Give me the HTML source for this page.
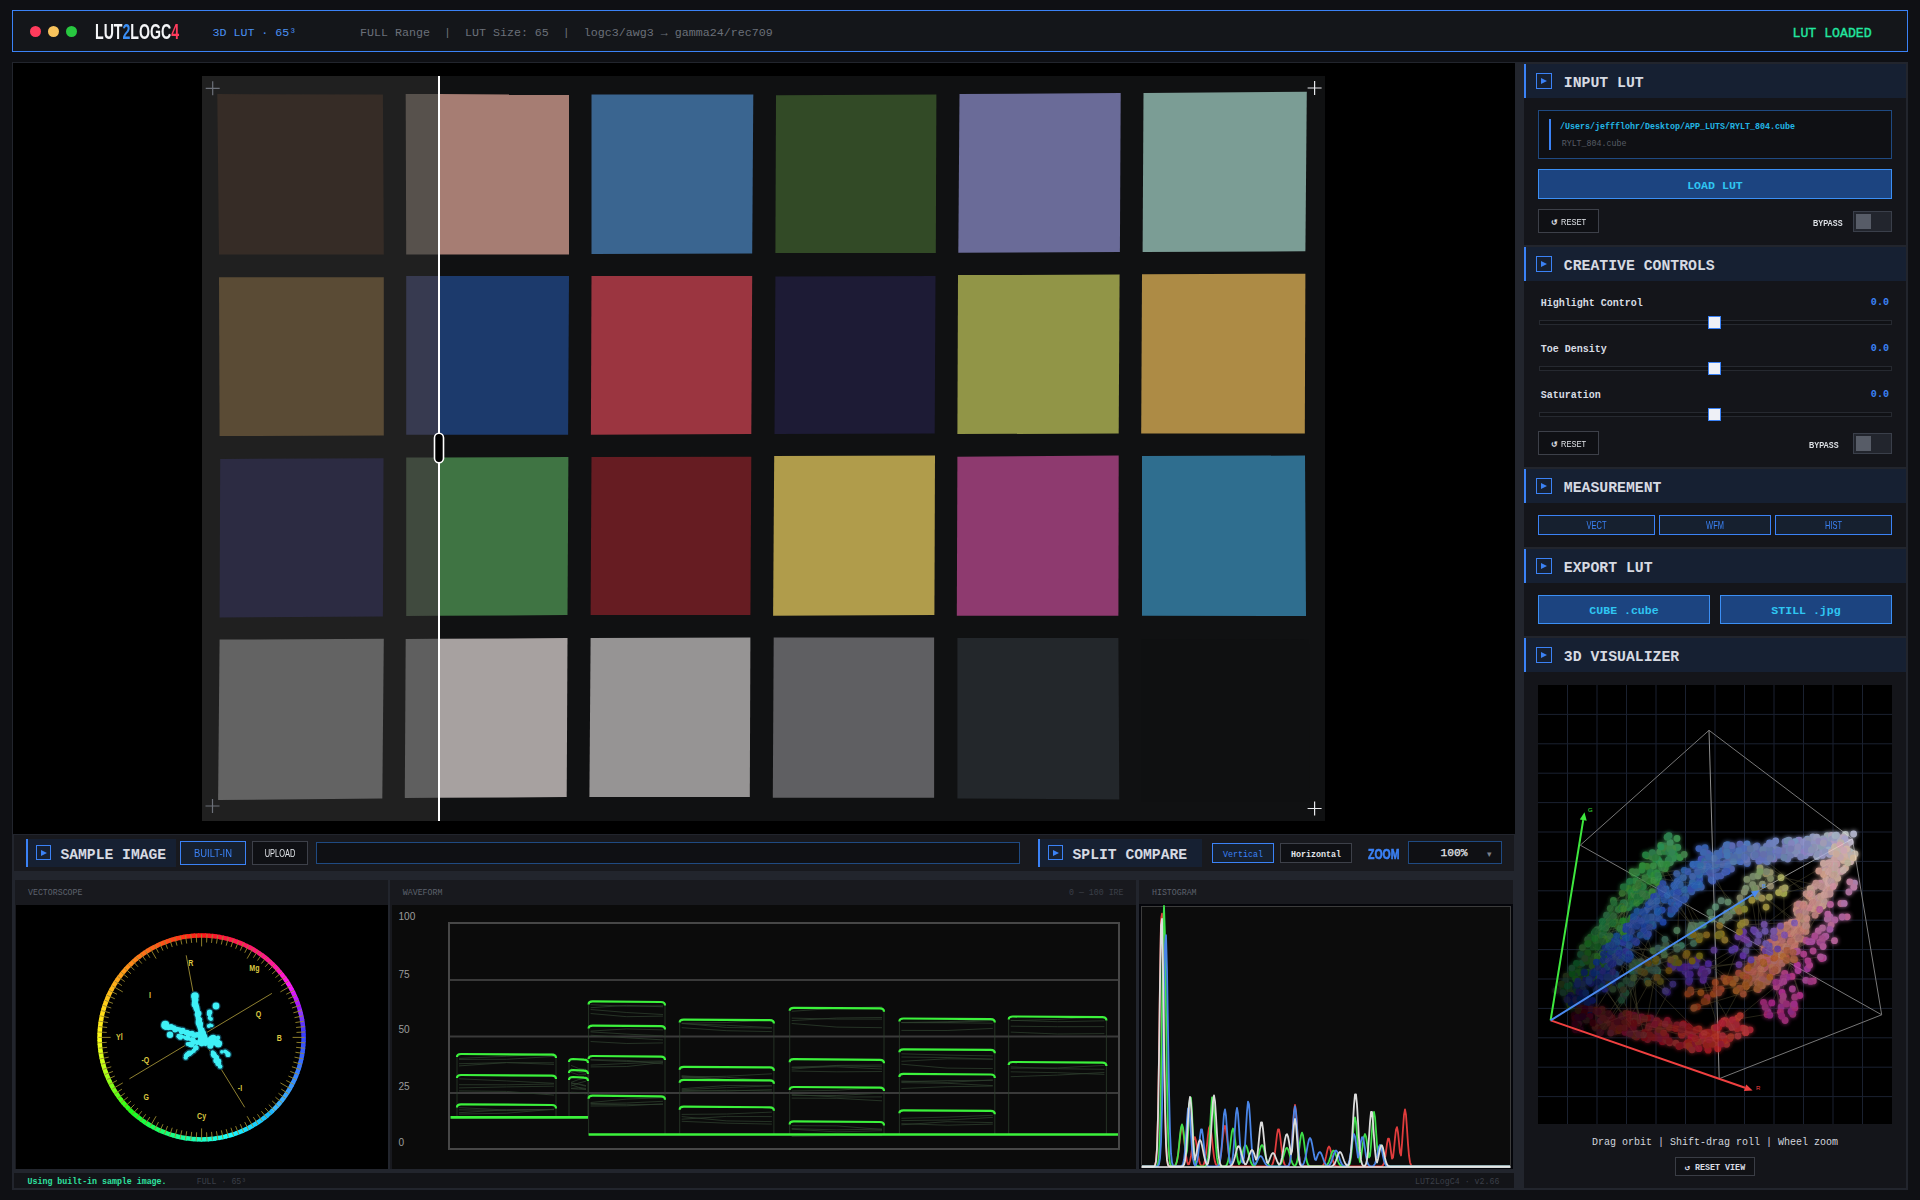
<!DOCTYPE html><html><head><meta charset="utf-8"><style>
html,body{margin:0;padding:0;}
body{width:1920px;height:1200px;overflow:hidden;background:#0f1014;position:relative;}
.t{position:absolute;white-space:pre;}
.b{position:absolute;box-sizing:border-box;}
svg{position:absolute;}
</style></head><body>
<div class="b" style="left:12px;top:10px;width:1896px;height:42px;background:#14161a;border:1px solid #3b82f6;"></div>
<div class="b" style="left:30.0px;top:25.8px;width:11px;height:11px;border-radius:50%;background:#ff3b5c"></div>
<div class="b" style="left:48.0px;top:25.8px;width:11px;height:11px;border-radius:50%;background:#f8c35c"></div>
<div class="b" style="left:66.0px;top:25.8px;width:11px;height:11px;border-radius:50%;background:#28c840"></div>
<div class="t" style="left:94.6px;top:19.50px;font:bold 22.8px/22.8px 'Liberation Sans', sans-serif;color:#f4f5f7;transform:scaleX(0.62);transform-origin:left top;">LUT<span style="color:#3b8ff5">2</span>LOGC<span style="color:#ff3b5c">4</span></div>
<div class="t" style="left:212.50px;top:27.19px;font:11.63px/11.63px 'Liberation Mono', monospace;color:#4a90f2;">3D LUT · 65³</div>
<div class="t" style="left:360.00px;top:28.06px;font:11.67px/11.67px 'Liberation Mono', monospace;color:#6b7079;">FULL Range  |  LUT Size: 65  |  logc3/awg3 → gamma24/rec709</div>
<div class="t" style="left:1792.50px;top:27.39px;font:13.2px/13.2px 'Liberation Mono', monospace;color:#22e8a0;-webkit-text-stroke:0.35px #22e8a0;">LUT LOADED</div>
<div class="b" style="left:12px;top:62px;width:1896px;height:1128px;background:#22252d;"></div>
<div class="b" style="left:13px;top:63px;width:1502px;height:771px;background:#000;"></div>
<div class="b" style="left:14px;top:835px;width:1500px;height:36px;background:#18191e;"></div>
<div class="b" style="left:15px;top:880px;width:373px;height:289px;background:#18191e;"></div>
<div class="b" style="left:390px;top:880px;width:746px;height:289px;background:#18191e;"></div>
<div class="b" style="left:1139px;top:880px;width:374px;height:289px;background:#18191e;"></div>
<div class="b" style="left:14px;top:1173px;width:1500px;height:15px;background:#131418;"></div>
<div class="b" style="left:1524px;top:64px;width:382px;height:1124px;background:#14151a;"></div>
<div class="b" style="left:1524px;top:64px;width:382px;height:34px;background:#162032;"></div>
<div class="b" style="left:1524px;top:64px;width:2px;height:34px;background:#3b82f6;"></div>
<div class="b" style="left:1536px;top:73px;width:16px;height:16px;background:transparent;border:1px solid #3b82f6;"></div>
<svg style="left:1541px;top:78px" width="6" height="6"><polygon points="0,0 6,3 0,6" fill="#3b82f6"/></svg>
<div class="t" style="left:1563.80px;top:75.66px;font:14.8px/14.8px 'Liberation Mono', monospace;font-weight:bold;color:#d6dae2;">INPUT LUT</div>
<div class="b" style="left:1538px;top:110px;width:354px;height:49px;background:#0f1014;border:1px solid #1f4a82;"></div>
<div class="b" style="left:1549px;top:119px;width:2px;height:31px;background:#3b82f6;"></div>
<div class="t" style="left:1560.00px;top:123.12px;font:8.33px/8.33px 'Liberation Mono', monospace;font-weight:bold;color:#22b6e6;">/Users/jeffflohr/Desktop/APP_LUTS/RYLT_804.cube</div>
<div class="t" style="left:1561.70px;top:139.64px;font:8.3px/8.3px 'Liberation Mono', monospace;color:#585d66;">RYLT_804.cube</div>
<div class="b" style="left:1538px;top:169px;width:354px;height:30px;background:#1c4480;border:1px solid #3b8ff5;"></div>
<div class="t" style="left:1538px;width:354px;top:180.11px;text-align:center;font:11.6px/11.6px 'Liberation Mono', monospace;font-weight:bold;color:#2fc6f2;">LOAD LUT</div>
<div class="b" style="left:1538px;top:209px;width:61px;height:24px;background:#0f1014;border:1px solid #3d4049;"></div>
<div class="t" style="left:1550.5px;top:219.15px;font:bold 7.5px/7.5px 'Liberation Sans', sans-serif;color:#e0e3e8;">&#8634;</div>
<div class="t" style="left:1561.00px;top:216.96px;font:9.5px/9.5px 'Liberation Sans', sans-serif;color:#e2e5ea;transform:scaleX(0.79);transform-origin:left top;">RESET</div>
<div class="t" style="left:1813.00px;top:217.70px;font:9.8px/9.8px 'Liberation Sans', sans-serif;font-weight:bold;color:#e0e3e8;transform:scaleX(0.75);transform-origin:left top;">BYPASS</div>
<div class="b" style="left:1853px;top:211px;width:39px;height:21px;background:#22252d;border:1px solid #3a3f4a;"></div>
<div class="b" style="left:1856px;top:214px;width:15px;height:15px;background:#575c67;"></div>
<div class="b" style="left:1524px;top:245px;width:382px;height:2px;background:#22252d;"></div>
<div class="b" style="left:1524px;top:247px;width:382px;height:34px;background:#162032;"></div>
<div class="b" style="left:1524px;top:247px;width:2px;height:34px;background:#3b82f6;"></div>
<div class="b" style="left:1536px;top:256px;width:16px;height:16px;background:transparent;border:1px solid #3b82f6;"></div>
<svg style="left:1541px;top:261px" width="6" height="6"><polygon points="0,0 6,3 0,6" fill="#3b82f6"/></svg>
<div class="t" style="left:1563.80px;top:258.66px;font:14.8px/14.8px 'Liberation Mono', monospace;font-weight:bold;color:#d6dae2;">CREATIVE CONTROLS</div>
<div class="t" style="left:1540.80px;top:299.14px;font:10px/10px 'Liberation Mono', monospace;font-weight:bold;color:#d8dce4;">Highlight Control</div>
<div class="t" style="left:1790px;width:99px;text-align:right;top:298.26px;font:bold 10.1px/10.1px 'Liberation Mono', monospace;color:#3b82f6">0.0</div>
<div class="b" style="left:1539px;top:320px;width:353px;height:5px;background:#101115;border:1px solid #262930;"></div>
<div class="b" style="left:1708px;top:316px;width:13px;height:13px;background:#eef0f6;border:1px solid #3b82f6;"></div>
<div class="t" style="left:1540.80px;top:345.14px;font:10px/10px 'Liberation Mono', monospace;font-weight:bold;color:#d8dce4;">Toe Density</div>
<div class="t" style="left:1790px;width:99px;text-align:right;top:344.26px;font:bold 10.1px/10.1px 'Liberation Mono', monospace;color:#3b82f6">0.0</div>
<div class="b" style="left:1539px;top:366px;width:353px;height:5px;background:#101115;border:1px solid #262930;"></div>
<div class="b" style="left:1708px;top:362px;width:13px;height:13px;background:#eef0f6;border:1px solid #3b82f6;"></div>
<div class="t" style="left:1540.80px;top:391.14px;font:10px/10px 'Liberation Mono', monospace;font-weight:bold;color:#d8dce4;">Saturation</div>
<div class="t" style="left:1790px;width:99px;text-align:right;top:390.26px;font:bold 10.1px/10.1px 'Liberation Mono', monospace;color:#3b82f6">0.0</div>
<div class="b" style="left:1539px;top:412px;width:353px;height:5px;background:#101115;border:1px solid #262930;"></div>
<div class="b" style="left:1708px;top:408px;width:13px;height:13px;background:#eef0f6;border:1px solid #3b82f6;"></div>
<div class="b" style="left:1538px;top:431px;width:61px;height:24px;background:#0f1014;border:1px solid #3d4049;"></div>
<div class="t" style="left:1550.5px;top:441.15px;font:bold 7.5px/7.5px 'Liberation Sans', sans-serif;color:#e0e3e8;">&#8634;</div>
<div class="t" style="left:1561.00px;top:438.96px;font:9.5px/9.5px 'Liberation Sans', sans-serif;color:#e2e5ea;transform:scaleX(0.79);transform-origin:left top;">RESET</div>
<div class="t" style="left:1808.50px;top:440.20px;font:9.8px/9.8px 'Liberation Sans', sans-serif;font-weight:bold;color:#e0e3e8;transform:scaleX(0.75);transform-origin:left top;">BYPASS</div>
<div class="b" style="left:1853px;top:433px;width:39px;height:21px;background:#22252d;border:1px solid #3a3f4a;"></div>
<div class="b" style="left:1856px;top:436px;width:15px;height:15px;background:#575c67;"></div>
<div class="b" style="left:1524px;top:467px;width:382px;height:2px;background:#22252d;"></div>
<div class="b" style="left:1524px;top:469px;width:382px;height:34px;background:#162032;"></div>
<div class="b" style="left:1524px;top:469px;width:2px;height:34px;background:#3b82f6;"></div>
<div class="b" style="left:1536px;top:478px;width:16px;height:16px;background:transparent;border:1px solid #3b82f6;"></div>
<svg style="left:1541px;top:483px" width="6" height="6"><polygon points="0,0 6,3 0,6" fill="#3b82f6"/></svg>
<div class="t" style="left:1563.80px;top:480.66px;font:14.8px/14.8px 'Liberation Mono', monospace;font-weight:bold;color:#d6dae2;">MEASUREMENT</div>
<div class="b" style="left:1538px;top:515px;width:117px;height:20px;background:#16202f;border:1px solid #3b82f6;"></div>
<div class="t" style="left:1538px;width:117px;top:520.21px;text-align:center;font:10.5px/10.5px 'Liberation Sans', sans-serif;color:#3b82f6;transform:scaleX(0.71);transform-origin:center top;">VECT</div>
<div class="b" style="left:1659px;top:515px;width:112px;height:20px;background:#16202f;border:1px solid #3b82f6;"></div>
<div class="t" style="left:1659px;width:112px;top:520.21px;text-align:center;font:10.5px/10.5px 'Liberation Sans', sans-serif;color:#3b82f6;transform:scaleX(0.71);transform-origin:center top;">WFM</div>
<div class="b" style="left:1775px;top:515px;width:117px;height:20px;background:#16202f;border:1px solid #3b82f6;"></div>
<div class="t" style="left:1775px;width:117px;top:520.21px;text-align:center;font:10.5px/10.5px 'Liberation Sans', sans-serif;color:#3b82f6;transform:scaleX(0.71);transform-origin:center top;">HIST</div>
<div class="b" style="left:1524px;top:547px;width:382px;height:2px;background:#22252d;"></div>
<div class="b" style="left:1524px;top:549px;width:382px;height:34px;background:#162032;"></div>
<div class="b" style="left:1524px;top:549px;width:2px;height:34px;background:#3b82f6;"></div>
<div class="b" style="left:1536px;top:558px;width:16px;height:16px;background:transparent;border:1px solid #3b82f6;"></div>
<svg style="left:1541px;top:563px" width="6" height="6"><polygon points="0,0 6,3 0,6" fill="#3b82f6"/></svg>
<div class="t" style="left:1563.80px;top:560.66px;font:14.8px/14.8px 'Liberation Mono', monospace;font-weight:bold;color:#d6dae2;">EXPORT LUT</div>
<div class="b" style="left:1538px;top:595px;width:172px;height:29px;background:#1c4480;border:1px solid #3b8ff5;"></div>
<div class="t" style="left:1538px;width:172px;top:605.15px;text-align:center;font:11.55px/11.55px 'Liberation Mono', monospace;font-weight:bold;color:#2fc6f2;">CUBE .cube</div>
<div class="b" style="left:1720px;top:595px;width:172px;height:29px;background:#1c4480;border:1px solid #3b8ff5;"></div>
<div class="t" style="left:1720px;width:172px;top:605.15px;text-align:center;font:11.55px/11.55px 'Liberation Mono', monospace;font-weight:bold;color:#2fc6f2;">STILL .jpg</div>
<div class="b" style="left:1524px;top:636px;width:382px;height:2px;background:#22252d;"></div>
<div class="b" style="left:1524px;top:638px;width:382px;height:34px;background:#162032;"></div>
<div class="b" style="left:1524px;top:638px;width:2px;height:34px;background:#3b82f6;"></div>
<div class="b" style="left:1536px;top:647px;width:16px;height:16px;background:transparent;border:1px solid #3b82f6;"></div>
<svg style="left:1541px;top:652px" width="6" height="6"><polygon points="0,0 6,3 0,6" fill="#3b82f6"/></svg>
<div class="t" style="left:1563.80px;top:649.66px;font:14.8px/14.8px 'Liberation Mono', monospace;font-weight:bold;color:#d6dae2;">3D VISUALIZER</div>
<svg style="left:1538px;top:685px" width="354" height="439" viewBox="1538 685 354 439"><defs><filter id="gl" x="-20%" y="-20%" width="140%" height="140%"><feGaussianBlur in="SourceGraphic" stdDeviation="2.2" result="b"/><feMerge><feMergeNode in="b"/><feMergeNode in="SourceGraphic"/></feMerge></filter></defs><rect x="1538" y="685" width="354" height="439" fill="#000"/><path d="M1567.5 685V1124M1597.0 685V1124M1626.5 685V1124M1656.0 685V1124M1685.5 685V1124M1715.0 685V1124M1744.5 685V1124M1774.0 685V1124M1803.5 685V1124M1833.0 685V1124M1862.5 685V1124M1538 714.4H1892M1538 743.8H1892M1538 773.2H1892M1538 802.6H1892M1538 832.0H1892M1538 861.4H1892M1538 890.8H1892M1538 920.2H1892M1538 949.6H1892M1538 979.0H1892M1538 1008.4H1892M1538 1037.8H1892M1538 1067.2H1892M1538 1096.6H1892" stroke="#1a2130" stroke-width="1" fill="none"/><path d="M1709 730.3L1580.3 845.2M1709 730.3L1852.4 838.8M1580.3 845.2L1881.7 1014.8M1719.2 1078.7L1881.7 1014.8M1881.7 1014.8L1852.4 838.8" stroke="#777" stroke-width="1" fill="none"/><path d="M1709 730.3L1719.2 1078.7M1759.5 890.3L1852.4 838.8" stroke="#8e8e8e" stroke-width="1" fill="none"/><path d="M1645.8 896.0L1607.1 925.2M1784.4 935.0L1783.8 893.4M1740.4 925.2L1763.9 948.4M1614.9 950.2L1635.1 963.0M1790.5 941.3L1772.8 971.9M1758.0 875.9L1758.8 935.1M1703.4 865.7L1704.6 869.3M1633.9 1023.2L1612.1 976.0M1630.9 892.1L1648.4 934.1M1657.9 875.4L1653.1 925.9M1629.7 920.7L1674.9 886.7M1780.5 1012.0L1732.5 1020.0M1790.3 948.3L1824.4 901.8M1615.5 977.0L1593.0 946.9M1748.9 978.3L1748.8 943.8M1783.3 996.2L1783.3 996.2M1684.7 967.0L1750.7 963.7M1699.4 884.7L1654.9 877.7M1727.8 864.7L1687.9 871.7M1647.2 981.0L1696.0 1029.8M1605.9 937.2L1594.7 956.4M1691.1 1037.5L1698.9 1048.7M1668.9 970.6L1626.2 926.5M1656.1 970.2L1629.3 1018.3M1664.5 899.9L1692.5 882.5M1621.5 1000.2L1600.0 1032.7M1773.5 970.9L1757.1 967.9M1638.5 901.1L1635.4 880.8M1606.0 943.7L1632.3 965.9M1778.8 952.3L1758.1 980.8M1656.1 970.2L1644.7 1032.5M1636.6 1037.1L1602.6 984.4M1690.6 990.0L1746.4 982.3M1657.2 876.5L1628.4 937.8M1630.9 892.1L1620.0 928.5M1595.3 931.5L1612.6 938.1M1629.3 1018.3L1657.0 1020.6M1653.1 925.9L1637.7 968.6M1778.6 892.6L1829.7 862.8M1805.3 912.5L1770.1 952.2M1636.9 887.0L1595.3 931.5M1813.3 980.9L1792.0 949.7M1774.1 960.8L1743.3 994.1M1822.2 938.7L1829.9 929.3M1703.8 977.3L1738.0 1036.1M1686.9 953.5L1645.3 923.0M1776.4 986.8L1738.6 973.1M1777.2 958.9L1773.6 941.1M1766.9 960.0L1813.5 908.8M1761.6 958.3L1822.2 938.7M1640.8 971.4L1681.4 945.6M1623.0 942.4L1612.1 976.0M1746.6 969.7L1810.5 981.4M1633.6 873.0L1655.9 880.2M1638.0 1023.1L1695.3 1038.7M1833.7 875.1L1818.2 910.7M1633.8 894.6L1602.5 941.3M1786.8 950.3L1775.4 969.6M1665.2 868.6L1639.5 897.9M1735.0 948.6L1708.4 963.7M1593.8 970.6L1598.1 967.5M1666.8 864.2L1646.6 909.8M1812.0 898.7L1811.6 892.4M1619.0 940.5L1648.5 904.6M1665.3 899.0L1629.7 920.7M1798.8 912.3L1822.1 886.5M1772.8 971.9L1723.9 978.1M1759.4 979.6L1758.7 985.9M1794.1 947.4L1782.0 992.4M1630.4 1024.3L1631.1 983.7M1625.7 929.4L1628.7 957.0M1621.8 906.5L1628.7 957.0M1803.0 905.0L1819.7 909.5M1641.0 1019.5L1619.7 962.1M1752.7 884.7L1768.1 943.7M1755.4 931.8L1805.8 980.3M1721.8 921.1L1741.1 902.5M1618.3 909.4L1644.2 934.3M1614.5 948.6L1628.1 959.2M1674.1 905.1L1658.8 860.8M1777.5 969.3L1786.8 950.3M1628.9 925.9L1602.3 935.2M1692.9 864.4L1658.0 911.2M1708.3 862.4L1728.0 902.1M1806.1 893.8L1755.4 931.8M1751.9 900.2L1763.2 968.9M1670.9 960.0L1615.5 977.0M1652.3 924.2L1685.1 889.7M1775.8 982.3L1763.2 968.9M1794.5 959.7L1763.3 962.1M1780.3 982.9L1740.2 1015.7M1706.5 863.3L1699.4 884.7M1780.5 1012.0L1772.5 967.6M1629.8 881.3L1612.4 948.6M1800.6 930.7L1794.3 922.2M1622.2 893.3L1595.3 931.5M1822.5 928.0L1766.7 958.6M1650.8 962.4L1612.0 1018.0M1776.3 949.9L1772.2 969.6M1828.3 871.7L1818.2 910.7M1678.8 903.5L1623.1 903.1M1662.8 883.6L1671.2 902.2M1817.9 898.1L1758.8 861.1M1723.9 978.1L1699.5 956.0M1779.1 936.8L1796.8 921.7M1806.1 940.4L1772.2 942.5M1791.3 922.3L1740.4 925.2M1648.5 904.6L1694.9 866.1M1662.8 883.6L1699.7 936.1M1706.7 1034.9L1688.0 1026.7M1803.3 929.6L1756.0 890.2M1612.1 976.0L1616.6 936.1M1763.2 968.9L1808.7 941.7M1812.0 898.7L1814.5 908.8M1796.8 921.7L1756.0 890.2M1677.2 949.1L1679.3 892.0M1757.1 967.9L1804.9 919.1M1810.2 893.7L1834.6 883.8M1756.8 988.9L1697.5 1006.8M1756.7 975.4L1763.9 963.6M1649.2 1026.5L1706.7 1034.9M1773.6 936.6L1830.4 904.4M1595.8 977.4L1631.1 1024.8M1625.8 951.1L1681.4 945.6M1784.3 946.3L1752.4 973.7M1746.3 977.2L1713.3 1038.6M1799.8 995.5L1779.1 936.8M1706.6 934.8L1655.4 961.3M1820.8 886.1L1766.0 873.7M1730.2 979.3L1699.5 956.0M1757.1 967.9L1748.3 970.1M1767.3 861.8L1806.1 893.8M1698.3 1042.2L1674.6 1027.9M1804.0 903.9L1831.4 873.2M1705.9 863.3L1725.5 871.6M1806.8 918.5L1800.6 930.7M1767.2 953.6L1780.6 954.8M1611.2 964.6L1658.9 918.6M1635.9 919.9L1661.2 891.9M1806.8 918.5L1832.6 874.8M1802.2 915.0L1847.8 862.8M1625.1 1032.3L1678.4 1026.7M1612.0 944.6L1632.7 903.3M1815.9 883.2L1797.3 925.5M1648.2 983.1L1593.0 946.9M1781.6 937.9L1746.4 982.3M1794.6 929.6L1774.1 960.8M1699.7 936.1L1684.4 899.4M1762.4 884.2L1770.2 872.6M1705.1 1032.8L1729.9 1038.4M1631.4 897.4L1615.4 956.5M1815.9 883.2L1796.3 910.0M1766.9 960.0L1803.3 929.0M1605.9 937.2L1656.4 962.1M1815.9 883.2L1833.5 874.1M1619.0 949.8L1598.1 967.5M1834.8 920.0L1829.9 916.8M1703.8 977.3L1726.5 978.9M1623.4 932.2L1637.7 968.6M1798.7 938.0L1786.4 958.0M1667.4 992.2L1612.2 955.0M1805.3 912.5L1831.2 862.7M1799.6 916.5L1774.9 964.1M1766.2 951.8L1758.1 980.8M1595.1 933.4L1638.5 901.1M1780.6 932.9L1799.8 995.5M1756.7 975.4L1786.8 950.3M1665.3 899.0L1666.3 891.9M1745.5 1032.7L1703.6 1040.7M1759.8 984.6L1690.8 992.2M1730.2 979.3L1725.8 981.4M1733.5 861.7L1716.3 865.5M1740.4 925.2L1738.4 909.9M1663.3 893.9L1691.5 925.2M1742.4 923.2L1765.1 931.2M1642.3 911.9L1685.1 889.7M1636.4 942.3L1652.7 970.5M1705.0 973.2L1748.8 943.8M1637.7 968.6L1657.6 971.2M1699.4 884.7L1699.3 883.5M1820.5 956.8L1766.9 964.6M1648.5 969.0L1685.1 971.5M1699.2 939.7L1678.8 903.5M1665.2 868.6L1701.6 924.8M1758.7 963.2L1719.4 934.2M1657.2 876.5L1663.1 922.2M1596.9 970.9L1595.5 1026.3M1629.0 1014.2L1595.5 1026.3M1790.5 941.3L1803.0 905.0M1768.0 1012.0L1783.3 977.8M1710.6 866.2L1656.8 872.8M1756.8 893.9L1770.5 878.6M1640.8 961.6L1605.6 928.0M1688.5 1042.3L1737.2 1028.6M1766.9 964.6L1786.5 927.8M1649.4 894.9L1653.3 865.8M1790.6 943.5L1726.4 917.4M1806.8 918.5L1774.0 958.2M1617.0 941.5L1638.0 885.7M1790.6 943.5L1796.8 921.7M1706.3 867.0L1703.4 865.7M1665.2 1024.1L1708.9 1032.6M1594.4 971.4L1644.2 934.3M1738.6 973.1L1776.6 970.6M1618.9 953.2L1612.2 955.0M1634.7 917.0L1624.0 958.0M1647.0 936.4L1665.5 991.0M1599.8 935.0L1602.4 921.4M1612.8 922.9L1638.2 921.5M1787.1 977.2L1748.8 943.8M1642.3 911.9L1592.6 960.6M1790.3 948.3L1763.9 963.6M1822.8 906.1L1795.6 951.7M1793.2 952.4L1746.4 982.3M1820.3 883.2L1783.8 893.4M1702.2 969.5L1761.5 958.4M1649.3 881.2L1613.4 900.4M1757.2 963.2L1784.3 946.3M1644.4 1037.7L1631.9 982.8M1639.1 882.9L1604.3 935.3M1689.5 980.2L1686.9 953.5M1637.4 970.6L1608.5 1013.6M1719.0 1043.2L1659.2 1022.9M1747.1 862.3L1715.7 864.6M1726.5 978.9L1743.6 931.8M1595.4 1010.1L1630.3 956.0M1650.8 962.4L1625.9 957.2M1596.6 1011.3L1597.2 956.5M1737.6 908.2L1700.5 865.6M1596.9 970.9L1604.2 962.1M1676.3 897.9L1613.4 900.4M1656.4 962.1L1604.3 935.3M1710.6 866.2L1691.3 886.8M1625.0 904.5L1602.4 953.6M1654.9 877.7L1676.9 905.0M1623.9 902.9L1620.9 908.0M1703.1 980.3L1723.5 1043.3M1652.3 924.2L1617.7 940.8M1657.4 912.4L1684.3 870.3M1766.8 946.7L1808.7 941.7M1743.1 955.7L1793.5 959.4M1623.0 942.4L1672.9 984.1M1769.8 942.5L1758.1 980.8M1777.6 949.0L1814.5 908.8M1603.0 931.4L1658.9 918.6M1777.2 958.9L1743.3 994.1M1628.3 888.4L1619.0 949.8M1623.9 902.9L1618.4 926.7M1826.1 879.4L1831.1 925.1M1613.5 915.8L1649.4 894.9M1778.8 952.3L1808.7 941.7M1766.1 907.1L1763.3 962.1M1790.5 941.3L1772.4 942.1M1596.4 962.2L1602.5 971.1M1633.4 967.0L1638.0 1020.8M1611.2 964.6L1608.0 970.3M1704.2 1033.3L1698.3 1042.2M1622.0 1016.0L1607.1 1023.0M1687.9 871.7L1635.4 880.8M1672.9 984.1L1644.4 1037.7M1675.1 958.5L1617.0 941.5M1774.7 937.8L1834.5 940.7M1595.3 931.5L1595.1 963.3M1650.8 902.6L1630.3 956.0M1637.7 968.6L1629.2 953.9M1821.0 905.0L1828.3 871.7" stroke="#3e3a26" stroke-width="0.8" fill="none" opacity="0.75"/><g filter="url(#gl)" opacity="0.82"><circle cx="1639.5" cy="897.9" r="3.4" fill="#389933"/><circle cx="1623.4" cy="932.2" r="3.4" fill="#308a2d"/><circle cx="1608.7" cy="919.1" r="3.4" fill="#1e7732"/><circle cx="1674.9" cy="855.6" r="3.4" fill="#36ab52"/><circle cx="1626.1" cy="887.0" r="3.4" fill="#29854d"/><circle cx="1659.8" cy="851.9" r="3.4" fill="#4aa25a"/><circle cx="1596.6" cy="973.7" r="3.4" fill="#294e24"/><circle cx="1572.0" cy="970.7" r="3.4" fill="#104829"/><circle cx="1569.1" cy="1002.9" r="3.4" fill="#1d3017"/><circle cx="1623.0" cy="920.9" r="3.4" fill="#208d2b"/><circle cx="1657.2" cy="876.5" r="3.4" fill="#339b39"/><circle cx="1562.8" cy="986.9" r="3.4" fill="#232f26"/><circle cx="1680.0" cy="857.5" r="3.4" fill="#41ab53"/><circle cx="1654.9" cy="877.7" r="3.4" fill="#418c53"/><circle cx="1569.3" cy="985.1" r="3.4" fill="#144c22"/><circle cx="1593.0" cy="946.9" r="3.4" fill="#1b5b25"/><circle cx="1652.3" cy="891.7" r="3.4" fill="#429441"/><circle cx="1593.2" cy="960.9" r="3.4" fill="#295928"/><circle cx="1582.1" cy="995.0" r="3.4" fill="#202f25"/><circle cx="1677.8" cy="847.4" r="3.4" fill="#4a9a5f"/><circle cx="1589.0" cy="980.6" r="3.4" fill="#295432"/><circle cx="1615.2" cy="921.6" r="3.4" fill="#317d32"/><circle cx="1598.2" cy="930.1" r="3.4" fill="#367b35"/><circle cx="1594.3" cy="933.2" r="3.4" fill="#1f743b"/><circle cx="1611.2" cy="943.0" r="3.4" fill="#2b772e"/><circle cx="1635.4" cy="880.8" r="3.4" fill="#349c49"/><circle cx="1606.5" cy="958.5" r="3.4" fill="#156527"/><circle cx="1636.5" cy="888.3" r="3.4" fill="#3c964b"/><circle cx="1606.0" cy="943.7" r="3.4" fill="#22773c"/><circle cx="1649.4" cy="894.9" r="3.4" fill="#419444"/><circle cx="1592.1" cy="975.3" r="3.4" fill="#22532c"/><circle cx="1589.8" cy="976.0" r="3.4" fill="#1f5324"/><circle cx="1638.5" cy="901.1" r="3.4" fill="#24843e"/><circle cx="1628.3" cy="888.4" r="3.4" fill="#389334"/><circle cx="1610.5" cy="915.4" r="3.4" fill="#277630"/><circle cx="1568.2" cy="993.2" r="3.4" fill="#123920"/><circle cx="1601.4" cy="964.3" r="3.4" fill="#1a5720"/><circle cx="1655.6" cy="859.4" r="3.4" fill="#2ea244"/><circle cx="1618.3" cy="909.4" r="3.4" fill="#378445"/><circle cx="1630.9" cy="892.1" r="3.4" fill="#289243"/><circle cx="1684.2" cy="854.4" r="3.4" fill="#4d9756"/><circle cx="1628.8" cy="907.6" r="3.4" fill="#258b48"/><circle cx="1604.3" cy="935.3" r="3.4" fill="#356f40"/><circle cx="1672.8" cy="851.0" r="3.4" fill="#39b05b"/><circle cx="1607.1" cy="925.2" r="3.4" fill="#24792b"/><circle cx="1631.6" cy="894.8" r="3.4" fill="#2c9549"/><circle cx="1566.8" cy="998.9" r="3.4" fill="#1c2b16"/><circle cx="1595.8" cy="977.4" r="3.4" fill="#164e24"/><circle cx="1638.0" cy="893.3" r="3.4" fill="#3a8a42"/><circle cx="1596.1" cy="941.1" r="3.4" fill="#266a2d"/><circle cx="1649.7" cy="875.1" r="3.4" fill="#35a451"/><circle cx="1613.4" cy="900.4" r="3.4" fill="#36843e"/><circle cx="1643.3" cy="886.7" r="3.4" fill="#32924e"/><circle cx="1581.8" cy="963.3" r="3.4" fill="#274631"/><circle cx="1639.1" cy="882.9" r="3.4" fill="#408a43"/><circle cx="1626.8" cy="904.7" r="3.4" fill="#2a7c3f"/><circle cx="1647.1" cy="855.8" r="3.4" fill="#42a240"/><circle cx="1657.4" cy="883.0" r="3.4" fill="#439c38"/><circle cx="1651.9" cy="857.0" r="3.4" fill="#41954b"/><circle cx="1660.7" cy="845.5" r="3.4" fill="#43a152"/><circle cx="1623.3" cy="887.0" r="3.4" fill="#268142"/><circle cx="1655.9" cy="880.2" r="3.4" fill="#2c9741"/><circle cx="1631.4" cy="897.4" r="3.4" fill="#249135"/><circle cx="1633.8" cy="894.6" r="3.4" fill="#3d9044"/><circle cx="1594.7" cy="956.4" r="3.4" fill="#225425"/><circle cx="1612.6" cy="938.1" r="3.4" fill="#1e7837"/><circle cx="1578.7" cy="987.4" r="3.4" fill="#1b372b"/><circle cx="1613.5" cy="915.8" r="3.4" fill="#34733f"/><circle cx="1564.2" cy="983.2" r="3.4" fill="#0f2e2c"/><circle cx="1644.8" cy="894.0" r="3.4" fill="#29953e"/><circle cx="1585.8" cy="959.0" r="3.4" fill="#1d4f33"/><circle cx="1642.3" cy="896.9" r="3.4" fill="#319942"/><circle cx="1631.4" cy="901.6" r="3.4" fill="#257d36"/><circle cx="1577.4" cy="1000.9" r="3.4" fill="#153e10"/><circle cx="1624.4" cy="928.1" r="3.4" fill="#2b742f"/><circle cx="1578.5" cy="972.5" r="3.4" fill="#19571c"/><circle cx="1587.8" cy="953.0" r="3.4" fill="#1a5c1e"/><circle cx="1669.7" cy="845.1" r="3.4" fill="#4ca962"/><circle cx="1627.9" cy="925.6" r="3.4" fill="#26843f"/><circle cx="1576.7" cy="966.2" r="3.4" fill="#0f451a"/><circle cx="1619.0" cy="940.5" r="3.4" fill="#28713b"/><circle cx="1636.6" cy="873.1" r="3.4" fill="#2e9b51"/><circle cx="1634.2" cy="890.2" r="3.4" fill="#26973f"/><circle cx="1571.0" cy="993.2" r="3.4" fill="#24381a"/><circle cx="1566.1" cy="976.1" r="3.4" fill="#25341a"/><circle cx="1567.3" cy="991.1" r="3.4" fill="#0a321c"/><circle cx="1590.4" cy="937.2" r="3.4" fill="#1b662c"/><circle cx="1614.0" cy="903.1" r="3.4" fill="#297a3d"/><circle cx="1673.4" cy="850.5" r="3.4" fill="#32a45c"/><circle cx="1623.9" cy="902.9" r="3.4" fill="#338f49"/><circle cx="1597.5" cy="946.8" r="3.4" fill="#196123"/><circle cx="1656.5" cy="876.3" r="3.4" fill="#32913c"/><circle cx="1580.5" cy="954.4" r="3.4" fill="#194f30"/><circle cx="1563.8" cy="986.4" r="3.4" fill="#103513"/><circle cx="1606.3" cy="926.1" r="3.4" fill="#357e3d"/><circle cx="1625.0" cy="904.5" r="3.4" fill="#398d4a"/><circle cx="1649.3" cy="881.2" r="3.4" fill="#328d39"/><circle cx="1579.7" cy="964.8" r="3.4" fill="#21481a"/><circle cx="1650.5" cy="872.1" r="3.4" fill="#2d9651"/><circle cx="1677.1" cy="847.3" r="3.4" fill="#3aa35c"/><circle cx="1587.6" cy="939.6" r="3.4" fill="#2b5f31"/><circle cx="1587.5" cy="975.9" r="3.4" fill="#1b5a2e"/><circle cx="1574.5" cy="975.7" r="3.4" fill="#18432a"/><circle cx="1672.8" cy="848.5" r="3.4" fill="#4ea753"/><circle cx="1657.8" cy="859.1" r="3.4" fill="#2da04d"/><circle cx="1664.4" cy="851.4" r="3.4" fill="#369b4e"/><circle cx="1623.1" cy="903.1" r="3.4" fill="#2b804a"/><circle cx="1665.2" cy="868.6" r="3.4" fill="#3f9c47"/><circle cx="1658.8" cy="860.8" r="3.4" fill="#30a55b"/><circle cx="1593.8" cy="970.6" r="3.4" fill="#195832"/><circle cx="1640.1" cy="900.1" r="3.4" fill="#329037"/><circle cx="1603.0" cy="931.4" r="3.4" fill="#1b7031"/><circle cx="1619.0" cy="926.8" r="3.4" fill="#358b3e"/><circle cx="1641.1" cy="885.2" r="3.4" fill="#3c8e45"/><circle cx="1639.9" cy="886.3" r="3.4" fill="#288e45"/><circle cx="1653.8" cy="875.1" r="3.4" fill="#32a640"/><circle cx="1633.6" cy="873.0" r="3.4" fill="#42a14a"/><circle cx="1661.7" cy="867.8" r="3.4" fill="#3e9751"/><circle cx="1663.9" cy="845.8" r="3.4" fill="#3c9456"/><circle cx="1587.7" cy="972.6" r="3.4" fill="#285b2a"/><circle cx="1597.2" cy="929.6" r="3.4" fill="#2e713f"/><circle cx="1582.2" cy="963.1" r="3.4" fill="#185934"/><circle cx="1586.4" cy="973.6" r="3.4" fill="#104f2f"/><circle cx="1668.3" cy="860.7" r="3.4" fill="#3b9f57"/><circle cx="1664.2" cy="848.0" r="3.4" fill="#4c9a4d"/><circle cx="1580.5" cy="979.2" r="3.4" fill="#1d3b1a"/><circle cx="1632.7" cy="903.3" r="3.4" fill="#248a48"/><circle cx="1670.2" cy="842.6" r="3.4" fill="#4ca96d"/><circle cx="1595.1" cy="963.3" r="3.4" fill="#145020"/><circle cx="1565.8" cy="980.7" r="3.4" fill="#1c3529"/><circle cx="1653.7" cy="880.4" r="3.4" fill="#42a549"/><circle cx="1667.1" cy="837.2" r="3.4" fill="#37995a"/><circle cx="1603.9" cy="937.4" r="3.4" fill="#1c7034"/><circle cx="1595.1" cy="933.4" r="3.4" fill="#2a6f38"/><circle cx="1630.2" cy="923.1" r="3.4" fill="#348734"/><circle cx="1577.0" cy="980.2" r="3.4" fill="#164b2f"/><circle cx="1599.8" cy="935.0" r="3.4" fill="#30762e"/><circle cx="1609.8" cy="948.4" r="3.4" fill="#265f2e"/><circle cx="1595.5" cy="961.2" r="3.4" fill="#155938"/><circle cx="1621.8" cy="906.5" r="3.4" fill="#3b7a38"/><circle cx="1645.5" cy="854.9" r="3.4" fill="#2c964b"/><circle cx="1605.9" cy="937.2" r="3.4" fill="#1b6c41"/><circle cx="1613.2" cy="923.8" r="3.4" fill="#378137"/><circle cx="1568.7" cy="988.7" r="3.4" fill="#1e3721"/><circle cx="1670.8" cy="855.0" r="3.4" fill="#32aa57"/><circle cx="1670.3" cy="862.6" r="3.4" fill="#499d64"/><circle cx="1658.3" cy="877.4" r="3.4" fill="#35a754"/><circle cx="1588.2" cy="959.9" r="3.4" fill="#195523"/><circle cx="1629.8" cy="881.3" r="3.4" fill="#278e4d"/><circle cx="1661.1" cy="846.9" r="3.4" fill="#30ab64"/><circle cx="1622.2" cy="893.3" r="3.4" fill="#3d7e36"/><circle cx="1608.6" cy="920.3" r="3.4" fill="#31773e"/><circle cx="1583.6" cy="972.0" r="3.4" fill="#104029"/><circle cx="1602.3" cy="935.2" r="3.4" fill="#277540"/><circle cx="1592.6" cy="960.6" r="3.4" fill="#27502a"/><circle cx="1632.3" cy="871.7" r="3.4" fill="#3c9344"/><circle cx="1639.8" cy="900.1" r="3.4" fill="#24893b"/><circle cx="1563.0" cy="992.6" r="3.4" fill="#133829"/><circle cx="1605.3" cy="938.9" r="3.4" fill="#347f2d"/><circle cx="1590.8" cy="982.3" r="3.4" fill="#114c2d"/><circle cx="1620.9" cy="908.0" r="3.4" fill="#2f8d31"/><circle cx="1602.5" cy="941.3" r="3.4" fill="#286630"/><circle cx="1561.5" cy="984.2" r="3.4" fill="#243419"/><circle cx="1656.8" cy="872.8" r="3.4" fill="#31a54c"/><circle cx="1610.2" cy="936.3" r="3.4" fill="#33733f"/><circle cx="1576.5" cy="963.3" r="3.4" fill="#105628"/><circle cx="1555.9" cy="990.6" r="3.4" fill="#1e241f"/><circle cx="1581.8" cy="985.3" r="3.4" fill="#1d481b"/><circle cx="1669.0" cy="835.6" r="3.4" fill="#36995f"/><circle cx="1645.8" cy="896.0" r="3.4" fill="#398445"/><circle cx="1652.3" cy="852.6" r="3.4" fill="#369159"/><circle cx="1629.7" cy="920.7" r="3.4" fill="#2c7933"/><circle cx="1604.2" cy="962.1" r="3.4" fill="#1d532a"/><circle cx="1637.0" cy="897.1" r="3.4" fill="#288340"/><circle cx="1636.9" cy="887.0" r="3.4" fill="#2a8d43"/><circle cx="1631.7" cy="917.6" r="3.4" fill="#308a39"/><circle cx="1657.9" cy="875.4" r="3.4" fill="#319854"/><circle cx="1597.2" cy="956.5" r="3.4" fill="#256b21"/><circle cx="1646.9" cy="866.3" r="3.4" fill="#419d3b"/><circle cx="1677.0" cy="838.5" r="3.4" fill="#47ac5d"/><circle cx="1605.6" cy="928.0" r="3.4" fill="#2f763f"/><circle cx="1567.3" cy="986.1" r="3.4" fill="#0e4728"/><circle cx="1668.6" cy="851.7" r="3.4" fill="#37955b"/><circle cx="1587.9" cy="944.1" r="3.4" fill="#236f3a"/><circle cx="1606.5" cy="915.2" r="3.4" fill="#2d7346"/><circle cx="1622.2" cy="908.5" r="3.4" fill="#288749"/><circle cx="1602.2" cy="927.0" r="3.4" fill="#277e42"/><circle cx="1607.4" cy="950.1" r="3.4" fill="#265f23"/><circle cx="1669.7" cy="848.9" r="3.4" fill="#43a459"/><circle cx="1641.8" cy="870.0" r="3.4" fill="#35a049"/><circle cx="1572.0" cy="973.8" r="3.4" fill="#0f551a"/><circle cx="1571.9" cy="968.1" r="3.4" fill="#1b5130"/><circle cx="1588.5" cy="973.7" r="3.4" fill="#154919"/><circle cx="1636.1" cy="871.8" r="3.4" fill="#3d9247"/><circle cx="1636.4" cy="889.8" r="3.4" fill="#2c8a4b"/><circle cx="1575.8" cy="979.1" r="3.4" fill="#185519"/><circle cx="1642.7" cy="893.9" r="3.4" fill="#3f8b4b"/><circle cx="1635.5" cy="887.7" r="3.4" fill="#3d963d"/><circle cx="1645.0" cy="877.7" r="3.4" fill="#3e8e45"/><circle cx="1570.5" cy="1006.5" r="3.4" fill="#1b390f"/><circle cx="1623.4" cy="908.8" r="3.4" fill="#3b8f34"/><circle cx="1661.4" cy="864.6" r="3.4" fill="#37a248"/><circle cx="1582.4" cy="947.6" r="3.4" fill="#29602b"/><circle cx="1602.6" cy="953.7" r="3.4" fill="#206936"/><circle cx="1618.4" cy="926.7" r="3.4" fill="#34722b"/><circle cx="1573.2" cy="1001.1" r="3.4" fill="#09311b"/><circle cx="1653.3" cy="865.8" r="3.4" fill="#41a54f"/><circle cx="1660.8" cy="863.7" r="3.4" fill="#41a953"/><circle cx="1577.0" cy="1001.3" r="3.4" fill="#082f12"/><circle cx="1595.3" cy="931.5" r="3.4" fill="#1f6331"/><circle cx="1602.4" cy="953.6" r="3.4" fill="#307034"/><circle cx="1586.7" cy="961.3" r="3.4" fill="#1e541c"/><circle cx="1620.0" cy="928.5" r="3.4" fill="#308542"/><circle cx="1673.4" cy="858.2" r="3.4" fill="#3da860"/><circle cx="1668.7" cy="859.7" r="3.4" fill="#399a5c"/><circle cx="1642.5" cy="865.7" r="3.4" fill="#38a543"/><circle cx="1577.4" cy="986.2" r="3.4" fill="#133318"/><circle cx="1602.4" cy="921.4" r="3.4" fill="#1c7c43"/><circle cx="1655.5" cy="857.6" r="3.4" fill="#319144"/><circle cx="1636.6" cy="903.1" r="3.4" fill="#30943d"/><circle cx="1671.8" cy="852.5" r="3.4" fill="#3ea265"/><circle cx="1584.9" cy="958.4" r="3.4" fill="#294c2b"/><circle cx="1592.3" cy="966.1" r="3.4" fill="#265424"/><circle cx="1666.8" cy="864.2" r="3.4" fill="#37a549"/><circle cx="1610.3" cy="908.5" r="3.4" fill="#31763b"/><circle cx="1612.8" cy="922.9" r="3.4" fill="#227837"/><circle cx="1576.9" cy="990.6" r="3.4" fill="#0c372c"/><circle cx="1588.0" cy="943.3" r="3.4" fill="#1f7022"/><circle cx="1594.8" cy="938.6" r="3.4" fill="#1a772c"/><circle cx="1638.0" cy="885.7" r="3.4" fill="#3e873b"/><circle cx="1610.6" cy="950.3" r="3.4" fill="#1c409a"/><circle cx="1656.5" cy="907.4" r="3.4" fill="#355fb4"/><circle cx="1626.2" cy="926.5" r="3.4" fill="#234bab"/><circle cx="1656.6" cy="895.9" r="3.4" fill="#3064ac"/><circle cx="1596.3" cy="991.1" r="3.4" fill="#092958"/><circle cx="1662.8" cy="883.6" r="3.4" fill="#345abb"/><circle cx="1680.2" cy="884.5" r="3.4" fill="#3b70bb"/><circle cx="1638.2" cy="921.5" r="3.4" fill="#2f48b8"/><circle cx="1636.4" cy="942.3" r="3.4" fill="#2254b0"/><circle cx="1597.8" cy="988.9" r="3.4" fill="#1c275e"/><circle cx="1598.6" cy="972.5" r="3.4" fill="#12326f"/><circle cx="1664.3" cy="899.1" r="3.4" fill="#2d52c4"/><circle cx="1665.9" cy="888.8" r="3.4" fill="#366fc8"/><circle cx="1614.5" cy="948.6" r="3.4" fill="#2439a2"/><circle cx="1581.2" cy="999.0" r="3.4" fill="#04145a"/><circle cx="1694.9" cy="866.1" r="3.4" fill="#3f61c0"/><circle cx="1612.4" cy="980.9" r="3.4" fill="#0e2783"/><circle cx="1692.6" cy="888.9" r="3.4" fill="#4472c1"/><circle cx="1594.4" cy="971.4" r="3.4" fill="#1f2e61"/><circle cx="1625.9" cy="957.2" r="3.4" fill="#2b499c"/><circle cx="1720.7" cy="864.1" r="3.4" fill="#496bcc"/><circle cx="1634.7" cy="917.0" r="3.4" fill="#1e4ba8"/><circle cx="1732.5" cy="856.2" r="3.4" fill="#5777d2"/><circle cx="1620.8" cy="953.9" r="3.4" fill="#2c4c93"/><circle cx="1584.4" cy="972.4" r="3.4" fill="#092662"/><circle cx="1607.1" cy="973.1" r="3.4" fill="#1d2d80"/><circle cx="1614.6" cy="975.2" r="3.4" fill="#213a79"/><circle cx="1716.6" cy="868.3" r="3.4" fill="#5069c7"/><circle cx="1645.3" cy="923.0" r="3.4" fill="#2652ad"/><circle cx="1705.9" cy="863.3" r="3.4" fill="#4875d2"/><circle cx="1612.4" cy="948.6" r="3.4" fill="#263996"/><circle cx="1651.5" cy="902.1" r="3.4" fill="#2567a9"/><circle cx="1644.6" cy="913.6" r="3.4" fill="#2352bb"/><circle cx="1583.1" cy="989.8" r="3.4" fill="#182548"/><circle cx="1603.4" cy="960.3" r="3.4" fill="#15367f"/><circle cx="1598.9" cy="983.8" r="3.4" fill="#1d2b6b"/><circle cx="1697.7" cy="887.6" r="3.4" fill="#3f71c5"/><circle cx="1673.9" cy="885.3" r="3.4" fill="#3a69c8"/><circle cx="1726.4" cy="866.0" r="3.4" fill="#497dd6"/><circle cx="1587.4" cy="1002.7" r="3.4" fill="#0a1e51"/><circle cx="1685.1" cy="889.7" r="3.4" fill="#376bd5"/><circle cx="1625.8" cy="951.1" r="3.4" fill="#2f39a2"/><circle cx="1673.3" cy="893.0" r="3.4" fill="#2b62c3"/><circle cx="1685.9" cy="896.7" r="3.4" fill="#4070b8"/><circle cx="1647.0" cy="936.4" r="3.4" fill="#2457a9"/><circle cx="1676.3" cy="893.8" r="3.4" fill="#406ace"/><circle cx="1645.8" cy="920.4" r="3.4" fill="#2062aa"/><circle cx="1637.1" cy="911.3" r="3.4" fill="#2461aa"/><circle cx="1624.0" cy="958.0" r="3.4" fill="#234c93"/><circle cx="1617.7" cy="940.8" r="3.4" fill="#1f3891"/><circle cx="1592.2" cy="976.4" r="3.4" fill="#132464"/><circle cx="1664.5" cy="899.9" r="3.4" fill="#2961b7"/><circle cx="1602.6" cy="984.4" r="3.4" fill="#1e2c72"/><circle cx="1630.3" cy="956.0" r="3.4" fill="#154f97"/><circle cx="1572.0" cy="999.8" r="3.4" fill="#141f33"/><circle cx="1617.3" cy="950.8" r="3.4" fill="#2d4e8c"/><circle cx="1737.8" cy="855.8" r="3.4" fill="#567fd5"/><circle cx="1629.0" cy="957.7" r="3.4" fill="#213e9f"/><circle cx="1608.4" cy="960.4" r="3.4" fill="#2b3d85"/><circle cx="1679.3" cy="892.0" r="3.4" fill="#3761b8"/><circle cx="1570.6" cy="995.3" r="3.4" fill="#141540"/><circle cx="1619.0" cy="949.8" r="3.4" fill="#1a4d97"/><circle cx="1576.7" cy="985.8" r="3.4" fill="#0c2646"/><circle cx="1720.8" cy="875.8" r="3.4" fill="#516acf"/><circle cx="1707.7" cy="871.5" r="3.4" fill="#3a73c5"/><circle cx="1648.4" cy="934.1" r="3.4" fill="#3550b2"/><circle cx="1604.7" cy="989.1" r="3.4" fill="#212373"/><circle cx="1628.7" cy="957.0" r="3.4" fill="#2c51a1"/><circle cx="1578.9" cy="991.8" r="3.4" fill="#171350"/><circle cx="1614.4" cy="940.7" r="3.4" fill="#1c489c"/><circle cx="1612.2" cy="955.0" r="3.4" fill="#26497d"/><circle cx="1709.5" cy="855.1" r="3.4" fill="#437cd8"/><circle cx="1665.3" cy="899.0" r="3.4" fill="#2a58b1"/><circle cx="1588.9" cy="1009.7" r="3.4" fill="#1c1747"/><circle cx="1619.7" cy="962.1" r="3.4" fill="#2a4a81"/><circle cx="1635.9" cy="919.9" r="3.4" fill="#2e4ea6"/><circle cx="1618.5" cy="955.7" r="3.4" fill="#2641a1"/><circle cx="1644.2" cy="934.3" r="3.4" fill="#3553ac"/><circle cx="1699.7" cy="879.0" r="3.4" fill="#3761d0"/><circle cx="1617.0" cy="941.5" r="3.4" fill="#1538a1"/><circle cx="1623.0" cy="942.4" r="3.4" fill="#2a41af"/><circle cx="1600.2" cy="978.1" r="3.4" fill="#1d2a7e"/><circle cx="1671.2" cy="902.2" r="3.4" fill="#2d62c2"/><circle cx="1616.9" cy="942.2" r="3.4" fill="#1e529f"/><circle cx="1644.1" cy="925.1" r="3.4" fill="#1f48af"/><circle cx="1672.3" cy="912.0" r="3.4" fill="#3568c8"/><circle cx="1644.5" cy="918.9" r="3.4" fill="#3457a5"/><circle cx="1731.4" cy="858.0" r="3.4" fill="#5b7dd7"/><circle cx="1653.6" cy="896.7" r="3.4" fill="#2d52c1"/><circle cx="1693.2" cy="883.8" r="3.4" fill="#3961d0"/><circle cx="1608.7" cy="971.1" r="3.4" fill="#0d3884"/><circle cx="1670.7" cy="914.0" r="3.4" fill="#2a64b7"/><circle cx="1656.7" cy="901.0" r="3.4" fill="#3468bb"/><circle cx="1652.7" cy="919.5" r="3.4" fill="#3053a9"/><circle cx="1675.1" cy="884.8" r="3.4" fill="#336bc7"/><circle cx="1653.1" cy="925.9" r="3.4" fill="#2750b6"/><circle cx="1674.9" cy="886.7" r="3.4" fill="#386fcd"/><circle cx="1608.8" cy="977.4" r="3.4" fill="#1b3e71"/><circle cx="1677.9" cy="892.3" r="3.4" fill="#3359c6"/><circle cx="1592.6" cy="1000.3" r="3.4" fill="#081760"/><circle cx="1652.3" cy="924.2" r="3.4" fill="#2963a7"/><circle cx="1726.1" cy="871.6" r="3.4" fill="#5371d8"/><circle cx="1721.9" cy="864.6" r="3.4" fill="#5b7ac8"/><circle cx="1608.0" cy="970.3" r="3.4" fill="#0e2575"/><circle cx="1612.5" cy="958.3" r="3.4" fill="#23368a"/><circle cx="1658.9" cy="918.6" r="3.4" fill="#305cb4"/><circle cx="1701.2" cy="859.2" r="3.4" fill="#4e63d8"/><circle cx="1674.1" cy="905.1" r="3.4" fill="#385bb0"/><circle cx="1692.5" cy="882.5" r="3.4" fill="#3a79c9"/><circle cx="1615.5" cy="977.0" r="3.4" fill="#282b72"/><circle cx="1680.0" cy="878.4" r="3.4" fill="#336cbf"/><circle cx="1607.4" cy="967.2" r="3.4" fill="#1a4174"/><circle cx="1719.3" cy="855.6" r="3.4" fill="#4a86cf"/><circle cx="1712.6" cy="881.0" r="3.4" fill="#4c69cc"/><circle cx="1592.6" cy="972.8" r="3.4" fill="#1d2f69"/><circle cx="1603.5" cy="953.8" r="3.4" fill="#13397b"/><circle cx="1646.6" cy="909.8" r="3.4" fill="#3864be"/><circle cx="1615.5" cy="974.2" r="3.4" fill="#1b427f"/><circle cx="1649.5" cy="906.9" r="3.4" fill="#3a5fb2"/><circle cx="1573.1" cy="998.9" r="3.4" fill="#0d164b"/><circle cx="1577.4" cy="1002.4" r="3.4" fill="#131b44"/><circle cx="1740.6" cy="861.7" r="3.4" fill="#587fe4"/><circle cx="1657.4" cy="912.4" r="3.4" fill="#2f66c3"/><circle cx="1747.2" cy="863.6" r="3.4" fill="#4c73d3"/><circle cx="1704.8" cy="871.8" r="3.4" fill="#3e67c3"/><circle cx="1684.3" cy="870.3" r="3.4" fill="#326ebe"/><circle cx="1709.4" cy="872.4" r="3.4" fill="#4c6bcb"/><circle cx="1625.3" cy="938.1" r="3.4" fill="#3149ac"/><circle cx="1660.4" cy="888.1" r="3.4" fill="#3c59b6"/><circle cx="1629.5" cy="936.4" r="3.4" fill="#2357a6"/><circle cx="1609.9" cy="954.7" r="3.4" fill="#1c3292"/><circle cx="1717.3" cy="876.3" r="3.4" fill="#4d71d1"/><circle cx="1648.5" cy="904.6" r="3.4" fill="#2759bf"/><circle cx="1666.3" cy="891.9" r="3.4" fill="#2d65c0"/><circle cx="1614.8" cy="954.2" r="3.4" fill="#2b3e94"/><circle cx="1662.2" cy="910.1" r="3.4" fill="#2954c2"/><circle cx="1599.4" cy="983.8" r="3.4" fill="#16235f"/><circle cx="1727.7" cy="844.6" r="3.4" fill="#4a83d1"/><circle cx="1609.4" cy="975.2" r="3.4" fill="#202f84"/><circle cx="1671.1" cy="909.9" r="3.4" fill="#3754b8"/><circle cx="1676.7" cy="873.6" r="3.4" fill="#446cb9"/><circle cx="1691.7" cy="891.8" r="3.4" fill="#406dc3"/><circle cx="1676.9" cy="905.0" r="3.4" fill="#2a6ec3"/><circle cx="1722.3" cy="850.6" r="3.4" fill="#477fd2"/><circle cx="1636.9" cy="919.3" r="3.4" fill="#3150ac"/><circle cx="1628.4" cy="937.8" r="3.4" fill="#224bb2"/><circle cx="1692.9" cy="864.4" r="3.4" fill="#3e7ad8"/><circle cx="1585.7" cy="998.9" r="3.4" fill="#0f1f55"/><circle cx="1713.6" cy="869.8" r="3.4" fill="#5171c6"/><circle cx="1699.3" cy="875.0" r="3.4" fill="#3b7bcc"/><circle cx="1684.4" cy="899.4" r="3.4" fill="#385fc3"/><circle cx="1737.4" cy="860.4" r="3.4" fill="#4f82d9"/><circle cx="1629.1" cy="945.5" r="3.4" fill="#22539d"/><circle cx="1596.9" cy="970.9" r="3.4" fill="#0e397e"/><circle cx="1631.4" cy="925.4" r="3.4" fill="#2149a7"/><circle cx="1585.6" cy="980.1" r="3.4" fill="#131e5b"/><circle cx="1663.3" cy="893.9" r="3.4" fill="#3758c2"/><circle cx="1629.2" cy="953.9" r="3.4" fill="#214ca6"/><circle cx="1684.5" cy="889.8" r="3.4" fill="#3474b8"/><circle cx="1611.1" cy="951.7" r="3.4" fill="#1e4986"/><circle cx="1577.9" cy="981.2" r="3.4" fill="#13295d"/><circle cx="1626.0" cy="938.0" r="3.4" fill="#1856a8"/><circle cx="1582.4" cy="983.8" r="3.4" fill="#1b2b51"/><circle cx="1697.5" cy="864.2" r="3.4" fill="#3a78d6"/><circle cx="1614.9" cy="950.2" r="3.4" fill="#1f508a"/><circle cx="1731.5" cy="869.1" r="3.4" fill="#6174cc"/><circle cx="1633.0" cy="920.9" r="3.4" fill="#3350a9"/><circle cx="1725.2" cy="848.5" r="3.4" fill="#4d86d7"/><circle cx="1701.3" cy="887.1" r="3.4" fill="#476fc3"/><circle cx="1628.5" cy="957.4" r="3.4" fill="#23389f"/><circle cx="1738.2" cy="857.8" r="3.4" fill="#5c82d7"/><circle cx="1724.8" cy="872.3" r="3.4" fill="#567ed8"/><circle cx="1602.5" cy="971.1" r="3.4" fill="#272b80"/><circle cx="1705.7" cy="866.6" r="3.4" fill="#3969d2"/><circle cx="1677.2" cy="881.3" r="3.4" fill="#3d70cd"/><circle cx="1658.9" cy="909.8" r="3.4" fill="#2254b4"/><circle cx="1577.5" cy="984.2" r="3.4" fill="#14255e"/><circle cx="1667.1" cy="895.0" r="3.4" fill="#316eca"/><circle cx="1602.7" cy="985.8" r="3.4" fill="#1d2571"/><circle cx="1658.0" cy="911.2" r="3.4" fill="#2366c3"/><circle cx="1687.9" cy="871.7" r="3.4" fill="#3f68c9"/><circle cx="1605.6" cy="947.8" r="3.4" fill="#1e3988"/><circle cx="1616.6" cy="936.1" r="3.4" fill="#16519a"/><circle cx="1590.8" cy="983.3" r="3.4" fill="#151b63"/><circle cx="1571.0" cy="1003.0" r="3.4" fill="#05144e"/><circle cx="1608.6" cy="946.2" r="3.4" fill="#1b4e94"/><circle cx="1682.2" cy="899.8" r="3.4" fill="#355fc0"/><circle cx="1675.1" cy="908.9" r="3.4" fill="#3860c4"/><circle cx="1642.3" cy="911.9" r="3.4" fill="#2553b0"/><circle cx="1575.6" cy="999.9" r="3.4" fill="#1c1a45"/><circle cx="1643.8" cy="930.9" r="3.4" fill="#2c4bb1"/><circle cx="1640.2" cy="935.1" r="3.4" fill="#2453a0"/><circle cx="1646.2" cy="920.0" r="3.4" fill="#2b5cb7"/><circle cx="1711.5" cy="876.2" r="3.4" fill="#546ac5"/><circle cx="1601.4" cy="986.3" r="3.4" fill="#0c355e"/><circle cx="1611.2" cy="964.6" r="3.4" fill="#222b84"/><circle cx="1651.3" cy="917.0" r="3.4" fill="#3762ae"/><circle cx="1580.0" cy="999.2" r="3.4" fill="#031f4b"/><circle cx="1691.3" cy="886.8" r="3.4" fill="#3771cc"/><circle cx="1612.1" cy="976.0" r="3.4" fill="#1b3675"/><circle cx="1704.6" cy="869.3" r="3.4" fill="#4674cc"/><circle cx="1612.7" cy="972.0" r="3.4" fill="#292b75"/><circle cx="1633.5" cy="916.7" r="3.4" fill="#245aaf"/><circle cx="1720.7" cy="852.8" r="3.4" fill="#4d7cdb"/><circle cx="1628.9" cy="925.9" r="3.4" fill="#3553b2"/><circle cx="1706.3" cy="867.0" r="3.4" fill="#467bd4"/><circle cx="1625.7" cy="929.4" r="3.4" fill="#2046ab"/><circle cx="1678.8" cy="903.5" r="3.4" fill="#3762ca"/><circle cx="1597.6" cy="981.9" r="3.4" fill="#0d1f59"/><circle cx="1683.4" cy="877.6" r="3.4" fill="#4373ba"/><circle cx="1612.9" cy="947.3" r="3.4" fill="#1a3e94"/><circle cx="1663.1" cy="922.2" r="3.4" fill="#234ebe"/><circle cx="1615.4" cy="956.5" r="3.4" fill="#2c4285"/><circle cx="1634.7" cy="940.9" r="3.4" fill="#2744a0"/><circle cx="1582.1" cy="993.5" r="3.4" fill="#111557"/><circle cx="1631.3" cy="931.4" r="3.4" fill="#2f489b"/><circle cx="1676.3" cy="897.9" r="3.4" fill="#3f62bc"/><circle cx="1589.0" cy="979.3" r="3.4" fill="#183469"/><circle cx="1733.9" cy="853.1" r="3.4" fill="#5271ca"/><circle cx="1727.1" cy="871.5" r="3.4" fill="#456de0"/><circle cx="1594.2" cy="973.1" r="3.4" fill="#0b2d76"/><circle cx="1585.6" cy="992.9" r="3.4" fill="#08285f"/><circle cx="1716.3" cy="865.5" r="3.4" fill="#3f7dca"/><circle cx="1717.3" cy="857.3" r="3.4" fill="#5377ca"/><circle cx="1646.1" cy="917.5" r="3.4" fill="#2d5aaa"/><circle cx="1661.2" cy="891.9" r="3.4" fill="#3458c4"/><circle cx="1598.1" cy="967.5" r="3.4" fill="#1b2a6b"/><circle cx="1716.3" cy="858.5" r="3.4" fill="#4574db"/><circle cx="1690.9" cy="889.2" r="3.4" fill="#3c5fce"/><circle cx="1711.3" cy="879.8" r="3.4" fill="#5077d6"/><circle cx="1618.9" cy="953.2" r="3.4" fill="#21379f"/><circle cx="1663.7" cy="889.8" r="3.4" fill="#3d63c0"/><circle cx="1712.1" cy="860.7" r="3.4" fill="#437bd0"/><circle cx="1596.4" cy="962.2" r="3.4" fill="#113583"/><circle cx="1699.3" cy="883.5" r="3.4" fill="#3d6bd7"/><circle cx="1613.2" cy="963.3" r="3.4" fill="#202f8a"/><circle cx="1699.4" cy="884.7" r="3.4" fill="#357ad1"/><circle cx="1702.0" cy="869.7" r="3.4" fill="#4679c5"/><circle cx="1607.0" cy="977.2" r="3.4" fill="#1b316e"/><circle cx="1704.0" cy="863.6" r="3.4" fill="#4f70c4"/><circle cx="1728.2" cy="847.7" r="3.4" fill="#516fcc"/><circle cx="1725.1" cy="852.6" r="3.4" fill="#5973c6"/><circle cx="1568.9" cy="997.6" r="3.4" fill="#070a45"/><circle cx="1612.0" cy="944.6" r="3.4" fill="#204a94"/><circle cx="1650.8" cy="902.6" r="3.4" fill="#3c67b8"/><circle cx="1641.6" cy="921.0" r="3.4" fill="#3255b3"/><circle cx="1636.8" cy="926.2" r="3.4" fill="#2549a2"/><circle cx="1708.3" cy="862.4" r="3.4" fill="#5068db"/><circle cx="1649.5" cy="926.8" r="3.4" fill="#334da1"/><circle cx="1636.2" cy="942.0" r="3.4" fill="#2d3f9f"/><circle cx="1723.1" cy="854.6" r="3.4" fill="#5877d8"/><circle cx="1694.5" cy="885.4" r="3.4" fill="#3372d5"/><circle cx="1692.6" cy="876.5" r="3.4" fill="#4e77cb"/><circle cx="1725.5" cy="871.6" r="3.4" fill="#4d6dd4"/><circle cx="1589.0" cy="981.4" r="3.4" fill="#1a3272"/><circle cx="1628.1" cy="959.2" r="3.4" fill="#1d3f9e"/><circle cx="1736.0" cy="855.1" r="3.4" fill="#5181e2"/><circle cx="1567.3" cy="999.7" r="3.4" fill="#191a43"/><circle cx="1697.6" cy="871.7" r="3.4" fill="#4873cb"/><circle cx="1588.4" cy="1012.4" r="3.4" fill="#02114b"/><circle cx="1762.4" cy="884.2" r="3.4" fill="#a1ac85"/><circle cx="1701.6" cy="924.8" r="3.4" fill="#529164"/><circle cx="1631.9" cy="982.8" r="3.4" fill="#274b2f"/><circle cx="1690.7" cy="935.7" r="3.4" fill="#4a8173"/><circle cx="1632.0" cy="971.2" r="3.4" fill="#276049"/><circle cx="1623.4" cy="995.3" r="3.4" fill="#2d3d39"/><circle cx="1631.1" cy="983.7" r="3.4" fill="#2b453c"/><circle cx="1657.7" cy="961.6" r="3.4" fill="#495955"/><circle cx="1766.0" cy="873.7" r="3.4" fill="#aea674"/><circle cx="1690.0" cy="931.4" r="3.4" fill="#577a75"/><circle cx="1694.9" cy="925.9" r="3.4" fill="#639066"/><circle cx="1676.9" cy="930.5" r="3.4" fill="#588965"/><circle cx="1770.2" cy="872.6" r="3.4" fill="#b0ad7f"/><circle cx="1621.5" cy="1000.2" r="3.4" fill="#1f4631"/><circle cx="1637.4" cy="970.6" r="3.4" fill="#345345"/><circle cx="1729.2" cy="915.7" r="3.4" fill="#7d8f78"/><circle cx="1726.7" cy="913.2" r="3.4" fill="#759080"/><circle cx="1681.4" cy="945.6" r="3.4" fill="#41826b"/><circle cx="1766.5" cy="871.7" r="3.4" fill="#96a183"/><circle cx="1760.0" cy="868.0" r="3.4" fill="#afb37e"/><circle cx="1633.6" cy="978.0" r="3.4" fill="#405932"/><circle cx="1711.8" cy="919.0" r="3.4" fill="#719d7d"/><circle cx="1621.0" cy="985.6" r="3.4" fill="#215034"/><circle cx="1721.8" cy="921.1" r="3.4" fill="#739776"/><circle cx="1699.6" cy="925.8" r="3.4" fill="#5e866d"/><circle cx="1745.7" cy="888.3" r="3.4" fill="#93ab83"/><circle cx="1648.5" cy="969.0" r="3.4" fill="#315640"/><circle cx="1741.1" cy="902.5" r="3.4" fill="#7ea076"/><circle cx="1691.5" cy="925.2" r="3.4" fill="#627c62"/><circle cx="1752.7" cy="884.7" r="3.4" fill="#94a77e"/><circle cx="1753.0" cy="876.5" r="3.4" fill="#8ba27d"/><circle cx="1740.0" cy="897.8" r="3.4" fill="#929675"/><circle cx="1703.3" cy="925.1" r="3.4" fill="#519378"/><circle cx="1625.8" cy="992.8" r="3.4" fill="#204e36"/><circle cx="1653.2" cy="950.7" r="3.4" fill="#437046"/><circle cx="1710.0" cy="912.3" r="3.4" fill="#588667"/><circle cx="1632.3" cy="965.9" r="3.4" fill="#3d523e"/><circle cx="1657.6" cy="971.2" r="3.4" fill="#366e51"/><circle cx="1746.9" cy="879.4" r="3.4" fill="#92a679"/><circle cx="1770.5" cy="886.2" r="3.4" fill="#aca17f"/><circle cx="1721.2" cy="900.7" r="3.4" fill="#68907a"/><circle cx="1757.5" cy="896.3" r="3.4" fill="#8caf7e"/><circle cx="1666.0" cy="944.8" r="3.4" fill="#46654f"/><circle cx="1658.1" cy="948.1" r="3.4" fill="#3c635f"/><circle cx="1676.7" cy="946.8" r="3.4" fill="#578469"/><circle cx="1733.3" cy="910.8" r="3.4" fill="#759c71"/><circle cx="1758.0" cy="875.9" r="3.4" fill="#96b07f"/><circle cx="1640.8" cy="961.6" r="3.4" fill="#455445"/><circle cx="1744.4" cy="891.9" r="3.4" fill="#97a47e"/><circle cx="1677.2" cy="949.1" r="3.4" fill="#476b57"/><circle cx="1735.7" cy="908.7" r="3.4" fill="#8a9f84"/><circle cx="1656.8" cy="969.8" r="3.4" fill="#45634c"/><circle cx="1635.1" cy="963.0" r="3.4" fill="#34593d"/><circle cx="1756.0" cy="890.2" r="3.4" fill="#8fa973"/><circle cx="1760.0" cy="871.5" r="3.4" fill="#94b875"/><circle cx="1715.5" cy="907.0" r="3.4" fill="#659c7f"/><circle cx="1756.1" cy="888.4" r="3.4" fill="#a2a17f"/><circle cx="1612.8" cy="989.2" r="3.4" fill="#2a422a"/><circle cx="1665.0" cy="939.3" r="3.4" fill="#3f6f5e"/><circle cx="1728.0" cy="902.1" r="3.4" fill="#709d79"/><circle cx="1693.5" cy="943.3" r="3.4" fill="#46755e"/><circle cx="1638.5" cy="964.8" r="3.4" fill="#2d6443"/><circle cx="1689.6" cy="935.0" r="3.4" fill="#5a7f5a"/><circle cx="1608.7" cy="984.5" r="3.4" fill="#2e3228"/><circle cx="1691.0" cy="928.5" r="3.4" fill="#638b6c"/><circle cx="1770.5" cy="878.6" r="3.4" fill="#98a174"/><circle cx="1626.1" cy="980.7" r="3.4" fill="#254935"/><circle cx="1756.8" cy="893.9" r="3.4" fill="#9b9e84"/><circle cx="1656.4" cy="962.1" r="3.4" fill="#425e55"/><circle cx="1652.7" cy="970.5" r="3.4" fill="#345145"/><circle cx="1754.5" cy="888.6" r="3.4" fill="#8eaa75"/><circle cx="1647.2" cy="981.0" r="3.4" fill="#2a4c3a"/><circle cx="1664.3" cy="954.9" r="3.4" fill="#4f724a"/><circle cx="1633.4" cy="967.0" r="3.4" fill="#375a45"/><circle cx="1656.1" cy="970.2" r="3.4" fill="#32564e"/><circle cx="1623.2" cy="989.6" r="3.4" fill="#343b28"/><circle cx="1650.8" cy="962.4" r="3.4" fill="#3a5249"/><circle cx="1637.7" cy="968.6" r="3.4" fill="#45533f"/><circle cx="1726.4" cy="917.4" r="3.4" fill="#728969"/><circle cx="1663.2" cy="949.7" r="3.4" fill="#4b7958"/><circle cx="1767.3" cy="861.8" r="3.4" fill="#7890cc"/><circle cx="1796.2" cy="853.0" r="3.4" fill="#98a7e8"/><circle cx="1796.2" cy="852.5" r="3.4" fill="#94b0e9"/><circle cx="1710.6" cy="866.2" r="3.4" fill="#4987ce"/><circle cx="1816.6" cy="843.4" r="3.4" fill="#a5aad7"/><circle cx="1824.3" cy="846.5" r="3.4" fill="#c2c9e0"/><circle cx="1729.0" cy="862.7" r="3.4" fill="#6777c8"/><circle cx="1798.5" cy="840.3" r="3.4" fill="#a4addf"/><circle cx="1817.3" cy="839.2" r="3.4" fill="#abbddf"/><circle cx="1704.7" cy="860.6" r="3.4" fill="#417cc1"/><circle cx="1760.8" cy="850.7" r="3.4" fill="#7387de"/><circle cx="1707.2" cy="858.1" r="3.4" fill="#577fbd"/><circle cx="1713.2" cy="858.8" r="3.4" fill="#6082c8"/><circle cx="1840.3" cy="838.7" r="3.4" fill="#cbced9"/><circle cx="1786.3" cy="850.4" r="3.4" fill="#8ca3e3"/><circle cx="1822.8" cy="849.6" r="3.4" fill="#a8bae6"/><circle cx="1727.6" cy="852.3" r="3.4" fill="#537ccc"/><circle cx="1816.8" cy="856.3" r="3.4" fill="#b7bfee"/><circle cx="1780.3" cy="852.8" r="3.4" fill="#8f93dd"/><circle cx="1715.7" cy="864.6" r="3.4" fill="#527cc3"/><circle cx="1829.5" cy="854.3" r="3.4" fill="#bdc9e7"/><circle cx="1827.2" cy="835.7" r="3.4" fill="#beccd5"/><circle cx="1794.8" cy="846.3" r="3.4" fill="#a39bdc"/><circle cx="1830.3" cy="837.2" r="3.4" fill="#b5c5e7"/><circle cx="1706.5" cy="863.3" r="3.4" fill="#4685c1"/><circle cx="1847.3" cy="844.3" r="3.4" fill="#ebd9ea"/><circle cx="1839.1" cy="842.9" r="3.4" fill="#e0c4f0"/><circle cx="1818.4" cy="840.5" r="3.4" fill="#a3a5e9"/><circle cx="1714.3" cy="862.6" r="3.4" fill="#4885bf"/><circle cx="1711.6" cy="863.1" r="3.4" fill="#4c84d9"/><circle cx="1774.6" cy="849.4" r="3.4" fill="#8e9ad7"/><circle cx="1705.7" cy="864.4" r="3.4" fill="#5670cf"/><circle cx="1740.9" cy="852.6" r="3.4" fill="#678cd7"/><circle cx="1829.2" cy="853.5" r="3.4" fill="#c5b9ea"/><circle cx="1813.7" cy="839.1" r="3.4" fill="#9db9ec"/><circle cx="1763.5" cy="852.7" r="3.4" fill="#6c83e1"/><circle cx="1793.3" cy="844.1" r="3.4" fill="#9d9dd0"/><circle cx="1823.9" cy="842.0" r="3.4" fill="#afbdde"/><circle cx="1777.3" cy="849.9" r="3.4" fill="#87a6d2"/><circle cx="1762.4" cy="851.4" r="3.4" fill="#778adb"/><circle cx="1834.0" cy="837.6" r="3.4" fill="#c3d2e2"/><circle cx="1778.2" cy="855.2" r="3.4" fill="#7d8bdd"/><circle cx="1850.2" cy="842.1" r="3.4" fill="#e2daef"/><circle cx="1797.1" cy="852.3" r="3.4" fill="#9f9fe8"/><circle cx="1790.2" cy="849.3" r="3.4" fill="#8cadd4"/><circle cx="1752.5" cy="854.8" r="3.4" fill="#7180ce"/><circle cx="1813.3" cy="839.6" r="3.4" fill="#a0c0de"/><circle cx="1769.5" cy="842.9" r="3.4" fill="#7594e4"/><circle cx="1839.1" cy="842.1" r="3.4" fill="#dbc4e0"/><circle cx="1729.1" cy="859.6" r="3.4" fill="#6980ca"/><circle cx="1836.8" cy="836.3" r="3.4" fill="#d9c4ef"/><circle cx="1825.6" cy="841.8" r="3.4" fill="#b6c4d7"/><circle cx="1785.7" cy="845.9" r="3.4" fill="#9498dd"/><circle cx="1806.9" cy="840.8" r="3.4" fill="#9fb3e4"/><circle cx="1831.4" cy="835.5" r="3.4" fill="#d2c6df"/><circle cx="1725.0" cy="854.0" r="3.4" fill="#5773d1"/><circle cx="1829.3" cy="843.3" r="3.4" fill="#d4d3eb"/><circle cx="1728.6" cy="852.0" r="3.4" fill="#598ad6"/><circle cx="1823.0" cy="838.9" r="3.4" fill="#b3bee0"/><circle cx="1812.8" cy="837.0" r="3.4" fill="#acb8e4"/><circle cx="1754.0" cy="856.7" r="3.4" fill="#798edc"/><circle cx="1807.9" cy="852.9" r="3.4" fill="#abb1ea"/><circle cx="1807.3" cy="839.1" r="3.4" fill="#97b6e5"/><circle cx="1725.8" cy="862.8" r="3.4" fill="#5f77c8"/><circle cx="1798.9" cy="850.9" r="3.4" fill="#99b3eb"/><circle cx="1825.5" cy="844.3" r="3.4" fill="#b7c0e0"/><circle cx="1799.0" cy="840.1" r="3.4" fill="#91a2df"/><circle cx="1819.3" cy="843.7" r="3.4" fill="#bcb6ee"/><circle cx="1751.8" cy="849.5" r="3.4" fill="#7197d4"/><circle cx="1817.0" cy="839.7" r="3.4" fill="#b8a6d7"/><circle cx="1853.6" cy="834.0" r="3.4" fill="#d1d4ef"/><circle cx="1843.9" cy="844.5" r="3.4" fill="#e4d1ed"/><circle cx="1711.4" cy="859.3" r="3.4" fill="#4b6ec9"/><circle cx="1737.8" cy="854.2" r="3.4" fill="#5582c8"/><circle cx="1754.2" cy="855.1" r="3.4" fill="#6f86d8"/><circle cx="1808.4" cy="842.1" r="3.4" fill="#9cb5d9"/><circle cx="1815.2" cy="847.8" r="3.4" fill="#b6bae4"/><circle cx="1851.5" cy="852.8" r="3.4" fill="#e7e1e7"/><circle cx="1838.8" cy="839.9" r="3.4" fill="#d1d4e9"/><circle cx="1799.2" cy="840.5" r="3.4" fill="#a49de9"/><circle cx="1821.5" cy="853.6" r="3.4" fill="#b7b9ec"/><circle cx="1787.9" cy="847.8" r="3.4" fill="#98a8df"/><circle cx="1755.1" cy="856.1" r="3.4" fill="#6c82d6"/><circle cx="1716.8" cy="861.0" r="3.4" fill="#5874d1"/><circle cx="1816.7" cy="837.1" r="3.4" fill="#bbc1e4"/><circle cx="1816.5" cy="840.2" r="3.4" fill="#b9bde8"/><circle cx="1766.3" cy="846.5" r="3.4" fill="#8196db"/><circle cx="1818.5" cy="842.0" r="3.4" fill="#b4bee4"/><circle cx="1725.4" cy="850.7" r="3.4" fill="#627ec6"/><circle cx="1844.0" cy="845.2" r="3.4" fill="#e0cddb"/><circle cx="1712.0" cy="864.3" r="3.4" fill="#5479bd"/><circle cx="1751.5" cy="854.8" r="3.4" fill="#6687cd"/><circle cx="1773.9" cy="858.9" r="3.4" fill="#8d89ce"/><circle cx="1821.1" cy="845.9" r="3.4" fill="#b5c5db"/><circle cx="1772.4" cy="857.2" r="3.4" fill="#7a9edc"/><circle cx="1759.4" cy="860.4" r="3.4" fill="#7698d0"/><circle cx="1794.8" cy="846.4" r="3.4" fill="#949dd7"/><circle cx="1762.8" cy="854.8" r="3.4" fill="#8595e3"/><circle cx="1747.1" cy="843.9" r="3.4" fill="#6090e0"/><circle cx="1821.2" cy="845.8" r="3.4" fill="#a8bfd8"/><circle cx="1706.9" cy="856.0" r="3.4" fill="#4b6bc7"/><circle cx="1763.0" cy="855.3" r="3.4" fill="#778de2"/><circle cx="1818.5" cy="841.3" r="3.4" fill="#b3aae5"/><circle cx="1758.8" cy="861.1" r="3.4" fill="#7584dd"/><circle cx="1758.5" cy="853.6" r="3.4" fill="#7681d1"/><circle cx="1708.9" cy="856.3" r="3.4" fill="#5173c6"/><circle cx="1703.4" cy="865.7" r="3.4" fill="#587fc8"/><circle cx="1745.0" cy="857.6" r="3.4" fill="#7591d1"/><circle cx="1831.9" cy="839.2" r="3.4" fill="#b7bae8"/><circle cx="1795.2" cy="841.6" r="3.4" fill="#90b4eb"/><circle cx="1835.8" cy="835.7" r="3.4" fill="#c8c4eb"/><circle cx="1757.1" cy="845.9" r="3.4" fill="#6981d4"/><circle cx="1813.0" cy="848.4" r="3.4" fill="#afaedf"/><circle cx="1803.5" cy="850.6" r="3.4" fill="#97abdd"/><circle cx="1771.5" cy="851.1" r="3.4" fill="#7d8ce7"/><circle cx="1812.2" cy="842.6" r="3.4" fill="#b2b8db"/><circle cx="1743.7" cy="847.5" r="3.4" fill="#7594d6"/><circle cx="1845.4" cy="834.5" r="3.4" fill="#dbe1e0"/><circle cx="1700.5" cy="865.6" r="3.4" fill="#4082cb"/><circle cx="1826.6" cy="841.7" r="3.4" fill="#b5c6df"/><circle cx="1725.3" cy="848.1" r="3.4" fill="#6375c5"/><circle cx="1824.4" cy="840.6" r="3.4" fill="#bbb3eb"/><circle cx="1785.0" cy="841.6" r="3.4" fill="#8894d8"/><circle cx="1705.1" cy="847.7" r="3.4" fill="#4173d1"/><circle cx="1833.7" cy="842.6" r="3.4" fill="#d5bfea"/><circle cx="1831.3" cy="849.9" r="3.4" fill="#bcd1ec"/><circle cx="1789.0" cy="840.2" r="3.4" fill="#93a3d1"/><circle cx="1825.2" cy="843.8" r="3.4" fill="#b1c0dc"/><circle cx="1732.0" cy="848.7" r="3.4" fill="#5a79d4"/><circle cx="1800.6" cy="846.8" r="3.4" fill="#949bea"/><circle cx="1787.0" cy="840.8" r="3.4" fill="#8aadd3"/><circle cx="1763.1" cy="850.9" r="3.4" fill="#8890de"/><circle cx="1805.8" cy="843.3" r="3.4" fill="#9fa5d5"/><circle cx="1849.7" cy="851.6" r="3.4" fill="#d4e4e3"/><circle cx="1811.9" cy="846.4" r="3.4" fill="#9db2d9"/><circle cx="1838.6" cy="846.8" r="3.4" fill="#c8d4e7"/><circle cx="1795.7" cy="853.5" r="3.4" fill="#a2abe4"/><circle cx="1809.6" cy="841.9" r="3.4" fill="#b5b6eb"/><circle cx="1747.6" cy="849.5" r="3.4" fill="#6f7dcc"/><circle cx="1775.7" cy="841.0" r="3.4" fill="#859de6"/><circle cx="1805.4" cy="855.6" r="3.4" fill="#97a3e2"/><circle cx="1739.9" cy="844.1" r="3.4" fill="#6a79d4"/><circle cx="1717.2" cy="855.8" r="3.4" fill="#4d88d7"/><circle cx="1770.6" cy="856.2" r="3.4" fill="#7886d1"/><circle cx="1790.8" cy="855.0" r="3.4" fill="#8c9ad8"/><circle cx="1813.0" cy="844.2" r="3.4" fill="#afb4eb"/><circle cx="1787.7" cy="859.1" r="3.4" fill="#8897d7"/><circle cx="1830.7" cy="853.1" r="3.4" fill="#bebcde"/><circle cx="1787.9" cy="848.7" r="3.4" fill="#899fda"/><circle cx="1843.1" cy="837.4" r="3.4" fill="#dfcbe3"/><circle cx="1705.1" cy="851.6" r="3.4" fill="#526fc4"/><circle cx="1783.0" cy="850.7" r="3.4" fill="#8c92d4"/><circle cx="1817.0" cy="856.3" r="3.4" fill="#b7c1de"/><circle cx="1845.4" cy="845.4" r="3.4" fill="#e3c5d9"/><circle cx="1828.5" cy="844.6" r="3.4" fill="#aeb6e9"/><circle cx="1813.6" cy="847.1" r="3.4" fill="#aab2d9"/><circle cx="1753.3" cy="855.3" r="3.4" fill="#7c8fcb"/><circle cx="1746.3" cy="855.2" r="3.4" fill="#6784c5"/><circle cx="1762.8" cy="849.7" r="3.4" fill="#7c9acf"/><circle cx="1806.7" cy="852.0" r="3.4" fill="#97ace4"/><circle cx="1789.1" cy="850.4" r="3.4" fill="#8ca0d9"/><circle cx="1731.9" cy="845.7" r="3.4" fill="#6e7fda"/><circle cx="1834.1" cy="837.9" r="3.4" fill="#babfe7"/><circle cx="1805.8" cy="841.1" r="3.4" fill="#a2afe5"/><circle cx="1804.1" cy="853.0" r="3.4" fill="#a5a8e4"/><circle cx="1810.3" cy="852.7" r="3.4" fill="#ababea"/><circle cx="1801.4" cy="847.8" r="3.4" fill="#98aaeb"/><circle cx="1726.6" cy="850.7" r="3.4" fill="#5486ce"/><circle cx="1769.7" cy="848.6" r="3.4" fill="#7794cf"/><circle cx="1778.5" cy="850.5" r="3.4" fill="#8292e2"/><circle cx="1737.2" cy="854.7" r="3.4" fill="#618ad0"/><circle cx="1817.6" cy="854.2" r="3.4" fill="#a8b5e0"/><circle cx="1769.6" cy="854.3" r="3.4" fill="#7690d3"/><circle cx="1747.1" cy="862.3" r="3.4" fill="#6e83c7"/><circle cx="1794.8" cy="850.9" r="3.4" fill="#9aacde"/><circle cx="1799.8" cy="845.4" r="3.4" fill="#99a1e5"/><circle cx="1810.1" cy="848.0" r="3.4" fill="#b4a2e1"/><circle cx="1746.7" cy="859.5" r="3.4" fill="#798bd9"/><circle cx="1727.8" cy="864.7" r="3.4" fill="#537ed5"/><circle cx="1726.3" cy="845.1" r="3.4" fill="#5887d8"/><circle cx="1730.7" cy="856.5" r="3.4" fill="#6282c7"/><circle cx="1739.0" cy="855.3" r="3.4" fill="#638ccb"/><circle cx="1791.4" cy="843.4" r="3.4" fill="#a0a1e8"/><circle cx="1717.0" cy="853.5" r="3.4" fill="#537cc0"/><circle cx="1754.3" cy="854.8" r="3.4" fill="#7d90dc"/><circle cx="1823.4" cy="842.9" r="3.4" fill="#c3bedc"/><circle cx="1803.9" cy="852.0" r="3.4" fill="#a99bea"/><circle cx="1765.5" cy="860.6" r="3.4" fill="#768edc"/><circle cx="1743.9" cy="848.3" r="3.4" fill="#5e82de"/><circle cx="1808.1" cy="840.0" r="3.4" fill="#a6b1d6"/><circle cx="1822.4" cy="855.4" r="3.4" fill="#b6b4e7"/><circle cx="1828.8" cy="850.0" r="3.4" fill="#bad2ef"/><circle cx="1803.4" cy="842.2" r="3.4" fill="#a7abec"/><circle cx="1726.8" cy="852.1" r="3.4" fill="#578bd5"/><circle cx="1809.1" cy="847.2" r="3.4" fill="#9ab4e2"/><circle cx="1783.8" cy="857.5" r="3.4" fill="#7f9ecf"/><circle cx="1734.5" cy="857.4" r="3.4" fill="#5e82ce"/><circle cx="1744.5" cy="857.1" r="3.4" fill="#6685da"/><circle cx="1709.7" cy="859.3" r="3.4" fill="#5073c0"/><circle cx="1807.5" cy="843.9" r="3.4" fill="#9ca4e2"/><circle cx="1807.2" cy="849.7" r="3.4" fill="#9ea2e5"/><circle cx="1761.4" cy="859.2" r="3.4" fill="#7687e1"/><circle cx="1707.9" cy="853.4" r="3.4" fill="#5475d6"/><circle cx="1836.4" cy="835.2" r="3.4" fill="#c3ceea"/><circle cx="1738.9" cy="850.7" r="3.4" fill="#5f8add"/><circle cx="1797.9" cy="846.9" r="3.4" fill="#a6a9e2"/><circle cx="1835.1" cy="835.6" r="3.4" fill="#c4d5ea"/><circle cx="1755.2" cy="854.8" r="3.4" fill="#708bd1"/><circle cx="1841.9" cy="848.8" r="3.4" fill="#dbc9db"/><circle cx="1708.6" cy="857.1" r="3.4" fill="#4b7ccf"/><circle cx="1763.4" cy="854.3" r="3.4" fill="#7a88d1"/><circle cx="1800.7" cy="857.0" r="3.4" fill="#929cdc"/><circle cx="1842.5" cy="851.4" r="3.4" fill="#c7d7da"/><circle cx="1843.9" cy="840.7" r="3.4" fill="#cecadb"/><circle cx="1755.5" cy="846.9" r="3.4" fill="#7b93d6"/><circle cx="1718.7" cy="854.7" r="3.4" fill="#507dd7"/><circle cx="1727.2" cy="855.6" r="3.4" fill="#538eda"/><circle cx="1733.5" cy="861.7" r="3.4" fill="#608eca"/><circle cx="1708.8" cy="866.1" r="3.4" fill="#4876d3"/><circle cx="1845.0" cy="839.0" r="3.4" fill="#cec8f4"/><circle cx="1769.6" cy="844.1" r="3.4" fill="#8395e0"/><circle cx="1770.1" cy="858.3" r="3.4" fill="#8194cd"/><circle cx="1750.2" cy="848.7" r="3.4" fill="#728ec9"/><circle cx="1698.9" cy="848.6" r="3.4" fill="#4a73d6"/><circle cx="1714.2" cy="858.4" r="3.4" fill="#5d86ca"/><circle cx="1773.0" cy="843.4" r="3.4" fill="#849ce4"/><circle cx="1825.3" cy="851.8" r="3.4" fill="#acb4e3"/><circle cx="1811.3" cy="849.9" r="3.4" fill="#a6b2dc"/><circle cx="1703.4" cy="852.4" r="3.4" fill="#4c7bd3"/><circle cx="1790.9" cy="848.8" r="3.4" fill="#9297d9"/><circle cx="1844.2" cy="854.0" r="3.4" fill="#e7d3c5"/><circle cx="1805.2" cy="912.6" r="3.4" fill="#e8a38f"/><circle cx="1847.9" cy="851.0" r="3.4" fill="#e2d2d1"/><circle cx="1773.6" cy="941.1" r="3.4" fill="#ce746b"/><circle cx="1805.6" cy="921.2" r="3.4" fill="#d98f98"/><circle cx="1820.3" cy="896.3" r="3.4" fill="#ecaa96"/><circle cx="1768.1" cy="963.6" r="3.4" fill="#cb7c66"/><circle cx="1836.9" cy="864.2" r="3.4" fill="#f4bbc1"/><circle cx="1831.7" cy="885.0" r="3.4" fill="#dcbdbc"/><circle cx="1849.4" cy="861.6" r="3.4" fill="#e1d5d4"/><circle cx="1784.4" cy="946.4" r="3.4" fill="#de776e"/><circle cx="1829.6" cy="887.1" r="3.4" fill="#e8c1a6"/><circle cx="1769.8" cy="942.5" r="3.4" fill="#d07c71"/><circle cx="1772.2" cy="942.5" r="3.4" fill="#d87d6f"/><circle cx="1796.9" cy="905.1" r="3.4" fill="#db9788"/><circle cx="1825.6" cy="888.8" r="3.4" fill="#f1b3b6"/><circle cx="1794.6" cy="929.6" r="3.4" fill="#d98a78"/><circle cx="1850.9" cy="858.6" r="3.4" fill="#f6c5d6"/><circle cx="1772.8" cy="971.9" r="3.4" fill="#ca6169"/><circle cx="1772.2" cy="969.6" r="3.4" fill="#b66466"/><circle cx="1817.7" cy="903.1" r="3.4" fill="#edaea7"/><circle cx="1827.6" cy="892.3" r="3.4" fill="#e8afab"/><circle cx="1824.9" cy="869.1" r="3.4" fill="#e3b5c0"/><circle cx="1840.8" cy="842.7" r="3.4" fill="#e2d5cf"/><circle cx="1817.9" cy="898.1" r="3.4" fill="#e2aab0"/><circle cx="1804.9" cy="919.1" r="3.4" fill="#e29c94"/><circle cx="1758.7" cy="963.2" r="3.4" fill="#bc7753"/><circle cx="1764.0" cy="976.4" r="3.4" fill="#b05a51"/><circle cx="1790.7" cy="933.9" r="3.4" fill="#e58681"/><circle cx="1784.4" cy="929.8" r="3.4" fill="#da957a"/><circle cx="1756.6" cy="960.4" r="3.4" fill="#c96772"/><circle cx="1776.3" cy="949.9" r="3.4" fill="#cd8576"/><circle cx="1794.5" cy="947.0" r="3.4" fill="#d08b83"/><circle cx="1853.2" cy="855.2" r="3.4" fill="#f2cbd5"/><circle cx="1775.4" cy="969.6" r="3.4" fill="#b77164"/><circle cx="1834.6" cy="883.8" r="3.4" fill="#dfb2a5"/><circle cx="1844.3" cy="852.8" r="3.4" fill="#e6d1d2"/><circle cx="1790.6" cy="943.5" r="3.4" fill="#d3897e"/><circle cx="1801.0" cy="938.9" r="3.4" fill="#da8e7a"/><circle cx="1766.2" cy="961.4" r="3.4" fill="#c87b66"/><circle cx="1802.2" cy="915.0" r="3.4" fill="#e59d84"/><circle cx="1845.5" cy="868.1" r="3.4" fill="#f6d0bc"/><circle cx="1776.6" cy="946.8" r="3.4" fill="#c6837c"/><circle cx="1753.2" cy="968.1" r="3.4" fill="#b67058"/><circle cx="1784.3" cy="946.3" r="3.4" fill="#d48977"/><circle cx="1812.0" cy="898.7" r="3.4" fill="#efb5a3"/><circle cx="1821.0" cy="905.0" r="3.4" fill="#dfa9a5"/><circle cx="1812.4" cy="904.1" r="3.4" fill="#ea9f9f"/><circle cx="1826.1" cy="879.4" r="3.4" fill="#edc0b7"/><circle cx="1763.2" cy="968.9" r="3.4" fill="#c5726a"/><circle cx="1758.2" cy="963.5" r="3.4" fill="#c06062"/><circle cx="1806.1" cy="893.8" r="3.4" fill="#dba49b"/><circle cx="1803.0" cy="919.3" r="3.4" fill="#d1a286"/><circle cx="1841.4" cy="854.6" r="3.4" fill="#e5d2bc"/><circle cx="1778.8" cy="952.3" r="3.4" fill="#d1757d"/><circle cx="1766.2" cy="951.8" r="3.4" fill="#c27e73"/><circle cx="1823.8" cy="872.4" r="3.4" fill="#ebcabe"/><circle cx="1796.3" cy="910.0" r="3.4" fill="#eca799"/><circle cx="1832.0" cy="882.8" r="3.4" fill="#ebb8b2"/><circle cx="1758.9" cy="978.0" r="3.4" fill="#b1704b"/><circle cx="1786.1" cy="949.3" r="3.4" fill="#d08c81"/><circle cx="1752.5" cy="962.9" r="3.4" fill="#b6725f"/><circle cx="1831.4" cy="873.2" r="3.4" fill="#e8cbbc"/><circle cx="1755.2" cy="960.0" r="3.4" fill="#c0676b"/><circle cx="1756.7" cy="975.4" r="3.4" fill="#c1624e"/><circle cx="1760.3" cy="975.1" r="3.4" fill="#c36a55"/><circle cx="1757.2" cy="963.2" r="3.4" fill="#c36255"/><circle cx="1767.2" cy="981.9" r="3.4" fill="#b7654f"/><circle cx="1806.0" cy="931.4" r="3.4" fill="#d99584"/><circle cx="1759.4" cy="979.6" r="3.4" fill="#b96f62"/><circle cx="1817.6" cy="905.0" r="3.4" fill="#e6ada5"/><circle cx="1814.5" cy="908.8" r="3.4" fill="#ebac93"/><circle cx="1855.0" cy="854.0" r="3.4" fill="#e4d6c4"/><circle cx="1794.3" cy="922.2" r="3.4" fill="#dd8d7e"/><circle cx="1758.3" cy="989.5" r="3.4" fill="#ac5451"/><circle cx="1824.4" cy="901.8" r="3.4" fill="#deb4ae"/><circle cx="1793.6" cy="932.7" r="3.4" fill="#e09484"/><circle cx="1780.6" cy="932.9" r="3.4" fill="#d2896e"/><circle cx="1790.3" cy="948.3" r="3.4" fill="#c98573"/><circle cx="1822.8" cy="906.1" r="3.4" fill="#e9b6a8"/><circle cx="1778.9" cy="961.4" r="3.4" fill="#d56d72"/><circle cx="1823.4" cy="863.5" r="3.4" fill="#eec5bb"/><circle cx="1775.7" cy="937.2" r="3.4" fill="#dc777c"/><circle cx="1795.2" cy="943.6" r="3.4" fill="#df8477"/><circle cx="1754.8" cy="975.9" r="3.4" fill="#ba6348"/><circle cx="1761.5" cy="958.4" r="3.4" fill="#b9645c"/><circle cx="1805.3" cy="912.5" r="3.4" fill="#d49c9a"/><circle cx="1758.1" cy="980.8" r="3.4" fill="#c56f5f"/><circle cx="1781.6" cy="937.9" r="3.4" fill="#d8836c"/><circle cx="1830.0" cy="889.8" r="3.4" fill="#ecb1a7"/><circle cx="1754.7" cy="969.3" r="3.4" fill="#b26f48"/><circle cx="1768.7" cy="956.6" r="3.4" fill="#bf7e70"/><circle cx="1827.9" cy="883.0" r="3.4" fill="#f2bfc0"/><circle cx="1749.3" cy="982.8" r="3.4" fill="#b96746"/><circle cx="1797.3" cy="925.5" r="3.4" fill="#dba181"/><circle cx="1835.6" cy="870.1" r="3.4" fill="#f4d1c7"/><circle cx="1834.5" cy="864.6" r="3.4" fill="#ecc7c3"/><circle cx="1834.4" cy="848.8" r="3.4" fill="#e4c8c4"/><circle cx="1779.8" cy="929.1" r="3.4" fill="#d88287"/><circle cx="1757.5" cy="983.1" r="3.4" fill="#b46949"/><circle cx="1836.9" cy="851.6" r="3.4" fill="#f3d6c5"/><circle cx="1850.6" cy="861.7" r="3.4" fill="#f6d5d1"/><circle cx="1775.0" cy="966.1" r="3.4" fill="#be6e5d"/><circle cx="1766.9" cy="964.6" r="3.4" fill="#cd6a57"/><circle cx="1825.9" cy="870.8" r="3.4" fill="#f0cbbc"/><circle cx="1813.5" cy="908.8" r="3.4" fill="#e9af9d"/><circle cx="1776.6" cy="970.6" r="3.4" fill="#d07c60"/><circle cx="1786.9" cy="924.8" r="3.4" fill="#e7958a"/><circle cx="1781.5" cy="954.9" r="3.4" fill="#c96d70"/><circle cx="1755.3" cy="975.3" r="3.4" fill="#ba725d"/><circle cx="1765.0" cy="967.6" r="3.4" fill="#c56166"/><circle cx="1818.2" cy="910.7" r="3.4" fill="#ee9e8e"/><circle cx="1820.5" cy="897.2" r="3.4" fill="#e3b4a6"/><circle cx="1772.4" cy="942.1" r="3.4" fill="#d67a80"/><circle cx="1832.2" cy="869.2" r="3.4" fill="#ecc9af"/><circle cx="1793.1" cy="924.9" r="3.4" fill="#da9385"/><circle cx="1814.5" cy="886.4" r="3.4" fill="#eab3b3"/><circle cx="1834.7" cy="847.0" r="3.4" fill="#f5d5d0"/><circle cx="1774.2" cy="952.3" r="3.4" fill="#d8756d"/><circle cx="1754.2" cy="972.9" r="3.4" fill="#b4624c"/><circle cx="1777.9" cy="943.8" r="3.4" fill="#d58575"/><circle cx="1795.6" cy="927.2" r="3.4" fill="#de8c94"/><circle cx="1837.7" cy="878.3" r="3.4" fill="#eec9b5"/><circle cx="1833.5" cy="874.1" r="3.4" fill="#ddccc3"/><circle cx="1797.9" cy="936.7" r="3.4" fill="#dc888b"/><circle cx="1761.0" cy="958.7" r="3.4" fill="#c57453"/><circle cx="1811.6" cy="890.6" r="3.4" fill="#edabad"/><circle cx="1792.0" cy="949.7" r="3.4" fill="#ce7973"/><circle cx="1846.2" cy="859.0" r="3.4" fill="#f3d6be"/><circle cx="1796.3" cy="939.2" r="3.4" fill="#db9682"/><circle cx="1769.2" cy="961.2" r="3.4" fill="#c1696f"/><circle cx="1810.2" cy="888.7" r="3.4" fill="#e7bfa8"/><circle cx="1799.0" cy="904.0" r="3.4" fill="#e198a1"/><circle cx="1797.5" cy="930.2" r="3.4" fill="#e39886"/><circle cx="1836.3" cy="874.3" r="3.4" fill="#edc4bf"/><circle cx="1802.1" cy="931.0" r="3.4" fill="#e4868d"/><circle cx="1766.7" cy="958.6" r="3.4" fill="#d36b6f"/><circle cx="1809.2" cy="907.8" r="3.4" fill="#ee9da5"/><circle cx="1822.1" cy="886.5" r="3.4" fill="#dcaea9"/><circle cx="1829.5" cy="894.2" r="3.4" fill="#eca7b2"/><circle cx="1851.4" cy="855.6" r="3.4" fill="#e4d7d3"/><circle cx="1804.1" cy="906.3" r="3.4" fill="#e2a193"/><circle cx="1779.1" cy="936.8" r="3.4" fill="#c67877"/><circle cx="1832.6" cy="874.8" r="3.4" fill="#f8bcb5"/><circle cx="1774.9" cy="964.1" r="3.4" fill="#d26a61"/><circle cx="1831.2" cy="862.7" r="3.4" fill="#e4d0c9"/><circle cx="1790.5" cy="941.3" r="3.4" fill="#db7e83"/><circle cx="1773.2" cy="968.3" r="3.4" fill="#ba6964"/><circle cx="1828.3" cy="871.2" r="3.4" fill="#f0bbb3"/><circle cx="1749.8" cy="975.2" r="3.4" fill="#b0574a"/><circle cx="1834.5" cy="868.6" r="3.4" fill="#ebc4c0"/><circle cx="1768.9" cy="951.8" r="3.4" fill="#ce7c6c"/><circle cx="1803.3" cy="929.6" r="3.4" fill="#df9983"/><circle cx="1840.8" cy="849.9" r="3.4" fill="#e8d7cc"/><circle cx="1748.1" cy="970.9" r="3.4" fill="#ad6a57"/><circle cx="1804.0" cy="903.9" r="3.4" fill="#d7ac96"/><circle cx="1779.4" cy="946.5" r="3.4" fill="#d27b6b"/><circle cx="1841.3" cy="871.4" r="3.4" fill="#f2bec9"/><circle cx="1806.8" cy="918.5" r="3.4" fill="#e6a197"/><circle cx="1791.3" cy="922.3" r="3.4" fill="#e59d94"/><circle cx="1815.1" cy="915.2" r="3.4" fill="#d79391"/><circle cx="1811.6" cy="892.4" r="3.4" fill="#ddb4a4"/><circle cx="1800.6" cy="930.7" r="3.4" fill="#d8887c"/><circle cx="1811.6" cy="894.9" r="3.4" fill="#d9ada7"/><circle cx="1834.5" cy="859.2" r="3.4" fill="#f2c2c1"/><circle cx="1777.2" cy="958.9" r="3.4" fill="#cc745b"/><circle cx="1797.2" cy="913.3" r="3.4" fill="#d3a594"/><circle cx="1834.2" cy="874.3" r="3.4" fill="#deceb1"/><circle cx="1752.4" cy="973.7" r="3.4" fill="#bf6353"/><circle cx="1846.6" cy="849.0" r="3.4" fill="#fcdbcb"/><circle cx="1829.7" cy="862.8" r="3.4" fill="#e8c4c1"/><circle cx="1844.4" cy="855.7" r="3.4" fill="#fad3c9"/><circle cx="1808.8" cy="896.1" r="3.4" fill="#efad9a"/><circle cx="1772.5" cy="967.6" r="3.4" fill="#ca7b5b"/><circle cx="1761.6" cy="958.3" r="3.4" fill="#c36865"/><circle cx="1803.3" cy="929.0" r="3.4" fill="#e99383"/><circle cx="1763.9" cy="948.4" r="3.4" fill="#c17372"/><circle cx="1843.3" cy="870.2" r="3.4" fill="#f0d4cb"/><circle cx="1782.1" cy="940.3" r="3.4" fill="#cb787c"/><circle cx="1768.0" cy="980.4" r="3.4" fill="#b6705c"/><circle cx="1806.6" cy="926.0" r="3.4" fill="#d59d8f"/><circle cx="1825.0" cy="895.3" r="3.4" fill="#e5b0ad"/><circle cx="1843.4" cy="860.4" r="3.4" fill="#f8d1ba"/><circle cx="1832.0" cy="882.7" r="3.4" fill="#dfafb3"/><circle cx="1768.1" cy="943.7" r="3.4" fill="#d8727a"/><circle cx="1762.3" cy="979.4" r="3.4" fill="#ba6867"/><circle cx="1820.3" cy="883.2" r="3.4" fill="#e9a8ba"/><circle cx="1746.6" cy="969.7" r="3.4" fill="#b56b5d"/><circle cx="1757.1" cy="967.9" r="3.4" fill="#ba635a"/><circle cx="1777.9" cy="967.0" r="3.4" fill="#d2666b"/><circle cx="1782.4" cy="929.8" r="3.4" fill="#c98187"/><circle cx="1777.5" cy="969.3" r="3.4" fill="#c87b6e"/><circle cx="1831.0" cy="881.3" r="3.4" fill="#ddb4bc"/><circle cx="1823.6" cy="874.5" r="3.4" fill="#f7bda5"/><circle cx="1803.7" cy="906.9" r="3.4" fill="#e1979a"/><circle cx="1761.4" cy="958.0" r="3.4" fill="#ce7362"/><circle cx="1748.3" cy="970.1" r="3.4" fill="#c65e61"/><circle cx="1831.6" cy="851.8" r="3.4" fill="#edcdcb"/><circle cx="1835.3" cy="847.0" r="3.4" fill="#ebd7c4"/><circle cx="1753.2" cy="962.7" r="3.4" fill="#b47954"/><circle cx="1820.8" cy="886.1" r="3.4" fill="#dea9a8"/><circle cx="1752.6" cy="978.0" r="3.4" fill="#b9675a"/><circle cx="1829.9" cy="863.4" r="3.4" fill="#f8bdc1"/><circle cx="1776.5" cy="965.2" r="3.4" fill="#ca7160"/><circle cx="1839.8" cy="844.8" r="3.4" fill="#f9c6d3"/><circle cx="1847.8" cy="862.8" r="3.4" fill="#e2d6b9"/><circle cx="1766.9" cy="960.0" r="3.4" fill="#cf636f"/><circle cx="1830.0" cy="893.7" r="3.4" fill="#dfa9ab"/><circle cx="1774.1" cy="960.8" r="3.4" fill="#c27877"/><circle cx="1810.2" cy="893.7" r="3.4" fill="#f1abaa"/><circle cx="1791.5" cy="941.5" r="3.4" fill="#d57f70"/><circle cx="1803.0" cy="905.0" r="3.4" fill="#eb9993"/><circle cx="1798.7" cy="938.0" r="3.4" fill="#cb8484"/><circle cx="1813.1" cy="902.3" r="3.4" fill="#e8a09d"/><circle cx="1853.3" cy="857.8" r="3.4" fill="#fcdfbd"/><circle cx="1753.0" cy="971.6" r="3.4" fill="#c7665a"/><circle cx="1769.3" cy="946.6" r="3.4" fill="#d28363"/><circle cx="1794.1" cy="947.4" r="3.4" fill="#e1877c"/><circle cx="1828.6" cy="862.8" r="3.4" fill="#f0c1be"/><circle cx="1840.4" cy="857.3" r="3.4" fill="#eecad0"/><circle cx="1796.8" cy="921.7" r="3.4" fill="#e99b88"/><circle cx="1766.8" cy="946.7" r="3.4" fill="#bf796c"/><circle cx="1836.1" cy="854.0" r="3.4" fill="#f5d0bd"/><circle cx="1805.4" cy="926.0" r="3.4" fill="#db9f97"/><circle cx="1815.9" cy="883.2" r="3.4" fill="#dfa7a2"/><circle cx="1786.5" cy="927.8" r="3.4" fill="#d58b7a"/><circle cx="1782.0" cy="963.4" r="3.4" fill="#c57771"/><circle cx="1773.5" cy="970.9" r="3.4" fill="#bf6057"/><circle cx="1828.3" cy="871.7" r="3.4" fill="#f4c1bc"/><circle cx="1833.2" cy="886.4" r="3.4" fill="#f6adbf"/><circle cx="1843.8" cy="850.4" r="3.4" fill="#f8cbd8"/><circle cx="1780.6" cy="954.8" r="3.4" fill="#c9866b"/><circle cx="1760.8" cy="968.8" r="3.4" fill="#cd7861"/><circle cx="1833.7" cy="875.1" r="3.4" fill="#e7beae"/><circle cx="1758.7" cy="985.9" r="3.4" fill="#b8695a"/><circle cx="1824.1" cy="894.9" r="3.4" fill="#efb8b2"/><circle cx="1798.8" cy="912.3" r="3.4" fill="#d38e9d"/><circle cx="1762.3" cy="985.7" r="3.4" fill="#ba7050"/><circle cx="1799.6" cy="916.5" r="3.4" fill="#da9884"/><circle cx="1818.8" cy="871.0" r="3.4" fill="#f0b2a4"/><circle cx="1823.3" cy="957.9" r="3.4" fill="#c660ba"/><circle cx="1781.1" cy="1007.0" r="3.4" fill="#a93599"/><circle cx="1825.8" cy="936.3" r="3.4" fill="#d068bf"/><circle cx="1811.8" cy="941.5" r="3.4" fill="#c55aba"/><circle cx="1795.6" cy="951.7" r="3.4" fill="#d258b4"/><circle cx="1793.0" cy="1005.4" r="3.4" fill="#ab488c"/><circle cx="1782.7" cy="1000.6" r="3.4" fill="#b8468c"/><circle cx="1768.0" cy="1012.0" r="3.4" fill="#aa3496"/><circle cx="1840.9" cy="903.5" r="3.4" fill="#d882b1"/><circle cx="1792.4" cy="989.0" r="3.4" fill="#bf4da5"/><circle cx="1829.9" cy="916.8" r="3.4" fill="#c775bb"/><circle cx="1780.3" cy="982.9" r="3.4" fill="#bb47a2"/><circle cx="1763.5" cy="1002.3" r="3.4" fill="#b02e83"/><circle cx="1834.8" cy="920.0" r="3.4" fill="#cc6fb8"/><circle cx="1807.4" cy="968.8" r="3.4" fill="#bb41af"/><circle cx="1824.8" cy="936.7" r="3.4" fill="#c866b4"/><circle cx="1784.7" cy="973.5" r="3.4" fill="#c64893"/><circle cx="1797.3" cy="951.2" r="3.4" fill="#ca61a8"/><circle cx="1820.0" cy="942.3" r="3.4" fill="#ca59ae"/><circle cx="1818.3" cy="931.0" r="3.4" fill="#d270b3"/><circle cx="1847.2" cy="916.8" r="3.4" fill="#dd74af"/><circle cx="1792.8" cy="1014.3" r="3.4" fill="#af3186"/><circle cx="1776.4" cy="986.8" r="3.4" fill="#c34a94"/><circle cx="1798.1" cy="970.6" r="3.4" fill="#c649af"/><circle cx="1814.8" cy="936.2" r="3.4" fill="#cc58ad"/><circle cx="1821.6" cy="958.5" r="3.4" fill="#d24ba2"/><circle cx="1792.0" cy="976.4" r="3.4" fill="#cb3e96"/><circle cx="1787.1" cy="977.2" r="3.4" fill="#b337a6"/><circle cx="1809.6" cy="965.3" r="3.4" fill="#ce4ea6"/><circle cx="1782.0" cy="992.4" r="3.4" fill="#c832a4"/><circle cx="1794.7" cy="997.2" r="3.4" fill="#b9428f"/><circle cx="1806.1" cy="940.4" r="3.4" fill="#d05ea0"/><circle cx="1791.0" cy="1011.6" r="3.4" fill="#a9329c"/><circle cx="1799.8" cy="995.5" r="3.4" fill="#c6359a"/><circle cx="1775.8" cy="982.3" r="3.4" fill="#ae3693"/><circle cx="1842.1" cy="917.0" r="3.4" fill="#ce73b8"/><circle cx="1797.4" cy="965.1" r="3.4" fill="#ce42b4"/><circle cx="1813.1" cy="951.0" r="3.4" fill="#c951a3"/><circle cx="1771.8" cy="1002.9" r="3.4" fill="#ba2895"/><circle cx="1813.3" cy="980.9" r="3.4" fill="#c34695"/><circle cx="1830.4" cy="904.4" r="3.4" fill="#d76fb3"/><circle cx="1767.1" cy="1014.6" r="3.4" fill="#b52c7b"/><circle cx="1854.5" cy="883.1" r="3.4" fill="#ce9bd0"/><circle cx="1822.5" cy="928.0" r="3.4" fill="#ce78b1"/><circle cx="1853.8" cy="887.2" r="3.4" fill="#dd95c6"/><circle cx="1783.3" cy="996.2" r="3.4" fill="#bd4796"/><circle cx="1822.0" cy="940.5" r="3.4" fill="#bf56aa"/><circle cx="1831.1" cy="925.1" r="3.4" fill="#db7bb1"/><circle cx="1844.2" cy="903.4" r="3.4" fill="#d487c9"/><circle cx="1794.9" cy="1007.9" r="3.4" fill="#be3086"/><circle cx="1805.8" cy="980.3" r="3.4" fill="#b74fa4"/><circle cx="1822.2" cy="938.7" r="3.4" fill="#c55ba7"/><circle cx="1807.9" cy="960.8" r="3.4" fill="#cb45a2"/><circle cx="1786.4" cy="1004.0" r="3.4" fill="#b2368c"/><circle cx="1793.9" cy="1004.4" r="3.4" fill="#bb4786"/><circle cx="1823.1" cy="946.5" r="3.4" fill="#d166b2"/><circle cx="1848.9" cy="892.0" r="3.4" fill="#cb86ba"/><circle cx="1780.5" cy="1012.0" r="3.4" fill="#bc2d82"/><circle cx="1829.9" cy="929.3" r="3.4" fill="#c26ac2"/><circle cx="1810.5" cy="981.4" r="3.4" fill="#bc419a"/><circle cx="1820.5" cy="956.8" r="3.4" fill="#cd64b6"/><circle cx="1783.3" cy="977.8" r="3.4" fill="#b34194"/><circle cx="1808.7" cy="941.7" r="3.4" fill="#c458b7"/><circle cx="1834.5" cy="940.7" r="3.4" fill="#d372b2"/><circle cx="1783.8" cy="981.4" r="3.4" fill="#be49a1"/><circle cx="1765.2" cy="1007.2" r="3.4" fill="#a63181"/><circle cx="1827.3" cy="919.1" r="3.4" fill="#ca7ab6"/><circle cx="1769.8" cy="1015.2" r="3.4" fill="#a62b90"/><circle cx="1785.1" cy="1020.5" r="3.4" fill="#b63689"/><circle cx="1794.2" cy="1004.1" r="3.4" fill="#bf38a2"/><circle cx="1819.7" cy="909.5" r="3.4" fill="#d66db1"/><circle cx="1803.7" cy="954.1" r="3.4" fill="#c94a9f"/><circle cx="1781.7" cy="1016.2" r="3.4" fill="#af2c87"/><circle cx="1827.8" cy="914.1" r="3.4" fill="#d873be"/><circle cx="1849.8" cy="881.8" r="3.4" fill="#dc93b9"/><circle cx="1703.0" cy="1040.1" r="3.4" fill="#b32c32"/><circle cx="1585.8" cy="1018.5" r="3.4" fill="#310810"/><circle cx="1586.9" cy="1009.1" r="3.4" fill="#44041d"/><circle cx="1615.8" cy="1024.7" r="3.4" fill="#651f25"/><circle cx="1662.5" cy="1033.8" r="3.4" fill="#86182f"/><circle cx="1614.9" cy="1021.3" r="3.4" fill="#471b1b"/><circle cx="1719.0" cy="1043.2" r="3.4" fill="#c72e20"/><circle cx="1703.6" cy="1040.7" r="3.4" fill="#ae2e35"/><circle cx="1636.6" cy="1037.1" r="3.4" fill="#75161f"/><circle cx="1725.2" cy="1020.7" r="3.4" fill="#cc333b"/><circle cx="1721.5" cy="1038.0" r="3.4" fill="#c6302e"/><circle cx="1706.8" cy="1041.7" r="3.4" fill="#ba332e"/><circle cx="1583.1" cy="1008.4" r="3.4" fill="#310d0a"/><circle cx="1595.4" cy="1010.1" r="3.4" fill="#44120d"/><circle cx="1631.1" cy="1024.8" r="3.4" fill="#68161d"/><circle cx="1579.6" cy="1008.3" r="3.4" fill="#350c1c"/><circle cx="1595.1" cy="1027.6" r="3.4" fill="#381319"/><circle cx="1644.7" cy="1032.5" r="3.4" fill="#770f18"/><circle cx="1574.2" cy="1015.5" r="3.4" fill="#25010d"/><circle cx="1584.1" cy="1009.6" r="3.4" fill="#3c1409"/><circle cx="1662.5" cy="1041.7" r="3.4" fill="#921121"/><circle cx="1622.0" cy="1016.0" r="3.4" fill="#50122b"/><circle cx="1728.2" cy="1038.8" r="3.4" fill="#c92932"/><circle cx="1626.8" cy="1020.0" r="3.4" fill="#5a0f20"/><circle cx="1641.0" cy="1019.5" r="3.4" fill="#7b1e19"/><circle cx="1600.8" cy="1029.3" r="3.4" fill="#460c10"/><circle cx="1688.1" cy="1032.2" r="3.4" fill="#a3272b"/><circle cx="1650.8" cy="1018.0" r="3.4" fill="#6e1930"/><circle cx="1670.2" cy="1027.6" r="3.4" fill="#81182b"/><circle cx="1750.1" cy="1029.8" r="3.4" fill="#c12b3b"/><circle cx="1575.0" cy="1018.3" r="3.4" fill="#35040c"/><circle cx="1614.2" cy="1024.1" r="3.4" fill="#5e151c"/><circle cx="1577.9" cy="1017.3" r="3.4" fill="#29011f"/><circle cx="1716.8" cy="1031.1" r="3.4" fill="#bd3a3a"/><circle cx="1692.6" cy="1034.7" r="3.4" fill="#a22732"/><circle cx="1624.7" cy="1022.0" r="3.4" fill="#5b1512"/><circle cx="1718.5" cy="1027.5" r="3.4" fill="#cb2221"/><circle cx="1638.0" cy="1023.1" r="3.4" fill="#5e171a"/><circle cx="1678.4" cy="1026.7" r="3.4" fill="#912131"/><circle cx="1737.2" cy="1028.6" r="3.4" fill="#c2352d"/><circle cx="1602.0" cy="1009.5" r="3.4" fill="#491318"/><circle cx="1686.9" cy="1043.5" r="3.4" fill="#aa1d31"/><circle cx="1604.4" cy="1015.4" r="3.4" fill="#3f1316"/><circle cx="1658.3" cy="1037.7" r="3.4" fill="#751130"/><circle cx="1619.5" cy="1029.8" r="3.4" fill="#651927"/><circle cx="1742.9" cy="1028.1" r="3.4" fill="#d0313c"/><circle cx="1692.8" cy="1047.3" r="3.4" fill="#a12335"/><circle cx="1708.2" cy="1050.2" r="3.4" fill="#b4201f"/><circle cx="1683.4" cy="1023.8" r="3.4" fill="#a4171e"/><circle cx="1698.9" cy="1028.8" r="3.4" fill="#ae2f25"/><circle cx="1706.6" cy="1045.0" r="3.4" fill="#c2202a"/><circle cx="1737.2" cy="1028.0" r="3.4" fill="#c02c33"/><circle cx="1669.1" cy="1023.8" r="3.4" fill="#7e2228"/><circle cx="1647.6" cy="1018.1" r="3.4" fill="#7e1018"/><circle cx="1590.3" cy="1009.1" r="3.4" fill="#390e20"/><circle cx="1712.0" cy="1034.3" r="3.4" fill="#bb2f20"/><circle cx="1581.4" cy="1015.3" r="3.4" fill="#26090e"/><circle cx="1678.5" cy="1026.8" r="3.4" fill="#9c2124"/><circle cx="1659.6" cy="1038.7" r="3.4" fill="#7f1833"/><circle cx="1634.1" cy="1015.4" r="3.4" fill="#6a122e"/><circle cx="1600.4" cy="1032.6" r="3.4" fill="#540c28"/><circle cx="1589.8" cy="1016.3" r="3.4" fill="#3e021b"/><circle cx="1634.8" cy="1033.0" r="3.4" fill="#6a262e"/><circle cx="1681.8" cy="1035.2" r="3.4" fill="#a3242e"/><circle cx="1630.4" cy="1024.3" r="3.4" fill="#6b1719"/><circle cx="1657.8" cy="1032.0" r="3.4" fill="#781d30"/><circle cx="1615.3" cy="1031.3" r="3.4" fill="#511a17"/><circle cx="1575.5" cy="1029.7" r="3.4" fill="#340016"/><circle cx="1677.0" cy="1024.9" r="3.4" fill="#861e29"/><circle cx="1648.9" cy="1028.1" r="3.4" fill="#7b1e1e"/><circle cx="1707.8" cy="1032.2" r="3.4" fill="#a5231b"/><circle cx="1669.7" cy="1042.8" r="3.4" fill="#92292f"/><circle cx="1713.6" cy="1031.4" r="3.4" fill="#bf2f23"/><circle cx="1708.9" cy="1032.6" r="3.4" fill="#b5212c"/><circle cx="1580.4" cy="1030.0" r="3.4" fill="#280216"/><circle cx="1665.3" cy="1040.3" r="3.4" fill="#90192c"/><circle cx="1745.5" cy="1032.7" r="3.4" fill="#cd3428"/><circle cx="1629.3" cy="1018.3" r="3.4" fill="#691f1e"/><circle cx="1685.8" cy="1045.1" r="3.4" fill="#a62532"/><circle cx="1698.3" cy="1042.2" r="3.4" fill="#a73328"/><circle cx="1691.1" cy="1037.5" r="3.4" fill="#b51932"/><circle cx="1600.3" cy="1032.1" r="3.4" fill="#40041e"/><circle cx="1696.0" cy="1029.8" r="3.4" fill="#a82420"/><circle cx="1647.6" cy="1039.6" r="3.4" fill="#7d1726"/><circle cx="1578.6" cy="1023.8" r="3.4" fill="#330b20"/><circle cx="1738.0" cy="1036.1" r="3.4" fill="#b5393f"/><circle cx="1737.7" cy="1018.1" r="3.4" fill="#d3433a"/><circle cx="1681.4" cy="1033.8" r="3.4" fill="#a32724"/><circle cx="1691.7" cy="1044.5" r="3.4" fill="#9d1c32"/><circle cx="1599.2" cy="1013.5" r="3.4" fill="#481c1a"/><circle cx="1659.2" cy="1022.9" r="3.4" fill="#8f2521"/><circle cx="1666.7" cy="1040.2" r="3.4" fill="#8e282e"/><circle cx="1600.6" cy="1020.8" r="3.4" fill="#4e1527"/><circle cx="1695.3" cy="1038.7" r="3.4" fill="#ae2228"/><circle cx="1577.1" cy="1026.2" r="3.4" fill="#1f0a0d"/><circle cx="1688.0" cy="1026.7" r="3.4" fill="#9e172c"/><circle cx="1707.8" cy="1049.1" r="3.4" fill="#b71e2a"/><circle cx="1649.2" cy="1026.5" r="3.4" fill="#791c25"/><circle cx="1608.7" cy="1015.8" r="3.4" fill="#401b15"/><circle cx="1618.4" cy="1030.7" r="3.4" fill="#632011"/><circle cx="1638.0" cy="1020.8" r="3.4" fill="#6e2423"/><circle cx="1706.7" cy="1034.9" r="3.4" fill="#bc2c22"/><circle cx="1745.0" cy="1028.8" r="3.4" fill="#c83e3d"/><circle cx="1674.6" cy="1027.9" r="3.4" fill="#8d1329"/><circle cx="1625.1" cy="1032.3" r="3.4" fill="#6f0b2d"/><circle cx="1644.4" cy="1037.7" r="3.4" fill="#7e0e16"/><circle cx="1735.6" cy="1022.1" r="3.4" fill="#c93a2e"/><circle cx="1583.5" cy="1013.4" r="3.4" fill="#291716"/><circle cx="1681.8" cy="1029.9" r="3.4" fill="#902331"/><circle cx="1606.2" cy="1023.3" r="3.4" fill="#491913"/><circle cx="1723.5" cy="1043.3" r="3.4" fill="#b9282e"/><circle cx="1688.5" cy="1042.3" r="3.4" fill="#a7231b"/><circle cx="1607.1" cy="1023.0" r="3.4" fill="#581f1d"/><circle cx="1676.0" cy="1028.7" r="3.4" fill="#981d1d"/><circle cx="1665.2" cy="1024.1" r="3.4" fill="#7b2129"/><circle cx="1634.6" cy="1036.0" r="3.4" fill="#63241e"/><circle cx="1630.2" cy="1018.9" r="3.4" fill="#72121e"/><circle cx="1705.1" cy="1032.8" r="3.4" fill="#b92822"/><circle cx="1730.1" cy="1022.0" r="3.4" fill="#c52f2b"/><circle cx="1665.8" cy="1036.2" r="3.4" fill="#8a1529"/><circle cx="1641.7" cy="1016.9" r="3.4" fill="#77132e"/><circle cx="1719.0" cy="1039.4" r="3.4" fill="#c22a29"/><circle cx="1638.9" cy="1034.6" r="3.4" fill="#66202d"/><circle cx="1689.7" cy="1047.2" r="3.4" fill="#a33024"/><circle cx="1715.0" cy="1043.9" r="3.4" fill="#c3382c"/><circle cx="1621.7" cy="1016.7" r="3.4" fill="#561224"/><circle cx="1667.4" cy="1020.5" r="3.4" fill="#8f132c"/><circle cx="1577.6" cy="1017.1" r="3.4" fill="#2a011f"/><circle cx="1745.9" cy="1032.6" r="3.4" fill="#d03a42"/><circle cx="1740.2" cy="1015.7" r="3.4" fill="#c53a33"/><circle cx="1658.8" cy="1029.5" r="3.4" fill="#74271b"/><circle cx="1612.1" cy="1029.1" r="3.4" fill="#5e161b"/><circle cx="1595.5" cy="1026.3" r="3.4" fill="#491512"/><circle cx="1680.5" cy="1045.6" r="3.4" fill="#a92b20"/><circle cx="1698.9" cy="1048.7" r="3.4" fill="#ad1a33"/><circle cx="1713.3" cy="1038.6" r="3.4" fill="#c53839"/><circle cx="1707.0" cy="1045.2" r="3.4" fill="#ab2720"/><circle cx="1680.2" cy="1045.5" r="3.4" fill="#8d182e"/><circle cx="1626.2" cy="1014.0" r="3.4" fill="#5b161e"/><circle cx="1725.2" cy="1038.7" r="3.4" fill="#c63c3b"/><circle cx="1682.6" cy="1024.8" r="3.4" fill="#9e2430"/><circle cx="1717.9" cy="1038.9" r="3.4" fill="#bc2621"/><circle cx="1726.6" cy="1044.3" r="3.4" fill="#b13134"/><circle cx="1688.7" cy="1045.8" r="3.4" fill="#a83220"/><circle cx="1625.8" cy="1013.3" r="3.4" fill="#5a2314"/><circle cx="1612.0" cy="1018.0" r="3.4" fill="#560b15"/><circle cx="1717.8" cy="1048.8" r="3.4" fill="#c72227"/><circle cx="1604.7" cy="1014.2" r="3.4" fill="#421b18"/><circle cx="1728.4" cy="1024.0" r="3.4" fill="#c03539"/><circle cx="1725.6" cy="1040.5" r="3.4" fill="#c53c2b"/><circle cx="1702.4" cy="1035.3" r="3.4" fill="#ba2335"/><circle cx="1669.2" cy="1040.9" r="3.4" fill="#8b1324"/><circle cx="1654.3" cy="1037.8" r="3.4" fill="#821628"/><circle cx="1582.5" cy="1014.2" r="3.4" fill="#300010"/><circle cx="1711.9" cy="1044.2" r="3.4" fill="#b02b24"/><circle cx="1723.7" cy="1020.9" r="3.4" fill="#ce383b"/><circle cx="1722.7" cy="1023.6" r="3.4" fill="#be2638"/><circle cx="1651.9" cy="1037.1" r="3.4" fill="#85131d"/><circle cx="1609.6" cy="1016.2" r="3.4" fill="#551720"/><circle cx="1619.8" cy="1028.1" r="3.4" fill="#661612"/><circle cx="1704.2" cy="1033.3" r="3.4" fill="#c13133"/><circle cx="1669.3" cy="1027.5" r="3.4" fill="#8a251b"/><circle cx="1575.1" cy="1023.9" r="3.4" fill="#2e0612"/><circle cx="1634.8" cy="1020.2" r="3.4" fill="#6d2627"/><circle cx="1633.3" cy="1027.2" r="3.4" fill="#6c0e22"/><circle cx="1714.3" cy="1028.0" r="3.4" fill="#c03a32"/><circle cx="1610.7" cy="1033.0" r="3.4" fill="#5a1d29"/><circle cx="1675.9" cy="1043.1" r="3.4" fill="#9a2f2f"/><circle cx="1617.0" cy="1022.0" r="3.4" fill="#4f101f"/><circle cx="1649.7" cy="1034.8" r="3.4" fill="#7e141c"/><circle cx="1585.2" cy="1009.0" r="3.4" fill="#32031b"/><circle cx="1716.2" cy="1036.3" r="3.4" fill="#c83327"/><circle cx="1723.3" cy="1040.0" r="3.4" fill="#c72a27"/><circle cx="1635.6" cy="1017.4" r="3.4" fill="#682122"/><circle cx="1586.3" cy="1020.2" r="3.4" fill="#291315"/><circle cx="1692.0" cy="1049.8" r="3.4" fill="#a32f31"/><circle cx="1729.9" cy="1038.4" r="3.4" fill="#b92930"/><circle cx="1709.1" cy="1039.9" r="3.4" fill="#b82632"/><circle cx="1629.8" cy="1033.8" r="3.4" fill="#5e1a2e"/><circle cx="1603.0" cy="1018.0" r="3.4" fill="#53151e"/><circle cx="1644.4" cy="1018.7" r="3.4" fill="#6f2223"/><circle cx="1689.4" cy="1027.6" r="3.4" fill="#98151e"/><circle cx="1599.3" cy="1011.2" r="3.4" fill="#521d17"/><circle cx="1730.8" cy="1036.6" r="3.4" fill="#b5392a"/><circle cx="1657.0" cy="1020.6" r="3.4" fill="#861a2b"/><circle cx="1603.9" cy="1026.5" r="3.4" fill="#431e17"/><circle cx="1654.8" cy="1024.3" r="3.4" fill="#85122f"/><circle cx="1732.5" cy="1020.0" r="3.4" fill="#c82d41"/><circle cx="1593.0" cy="1023.0" r="3.4" fill="#38020a"/><circle cx="1720.9" cy="1044.1" r="3.4" fill="#b0233a"/><circle cx="1736.3" cy="1024.6" r="3.4" fill="#be2d3d"/><circle cx="1665.2" cy="1023.9" r="3.4" fill="#912633"/><circle cx="1678.9" cy="1046.5" r="3.4" fill="#931922"/><circle cx="1663.6" cy="1032.8" r="3.4" fill="#922422"/><circle cx="1578.3" cy="1010.4" r="3.4" fill="#2c1708"/><circle cx="1624.6" cy="1028.0" r="3.4" fill="#66121d"/><circle cx="1584.3" cy="1012.3" r="3.4" fill="#34060f"/><circle cx="1681.5" cy="1029.7" r="3.4" fill="#871e25"/><circle cx="1608.5" cy="1013.6" r="3.4" fill="#401016"/><circle cx="1722.5" cy="1036.0" r="3.4" fill="#b92e3a"/><circle cx="1721.5" cy="1023.1" r="3.4" fill="#cc283e"/><circle cx="1629.0" cy="1014.2" r="3.4" fill="#6f161e"/><circle cx="1643.6" cy="1035.0" r="3.4" fill="#71282a"/><circle cx="1598.2" cy="1011.7" r="3.4" fill="#4b0820"/><circle cx="1731.9" cy="1027.4" r="3.4" fill="#be3641"/><circle cx="1633.9" cy="1023.2" r="3.4" fill="#721117"/><circle cx="1716.6" cy="1027.6" r="3.4" fill="#c5283b"/><circle cx="1600.0" cy="1032.7" r="3.4" fill="#3a0d1e"/><circle cx="1596.6" cy="1011.3" r="3.4" fill="#45081b"/><circle cx="1582.8" cy="1016.7" r="3.4" fill="#26061e"/><circle cx="1748.9" cy="978.3" r="3.4" fill="#aa5c27"/><circle cx="1723.9" cy="978.1" r="3.4" fill="#984a31"/><circle cx="1721.1" cy="989.3" r="3.4" fill="#ac472c"/><circle cx="1690.8" cy="992.2" r="3.4" fill="#9f462d"/><circle cx="1750.7" cy="963.7" r="3.4" fill="#a95731"/><circle cx="1726.5" cy="978.9" r="3.4" fill="#a75720"/><circle cx="1743.3" cy="994.1" r="3.4" fill="#ab5334"/><circle cx="1774.0" cy="958.2" r="3.4" fill="#c76136"/><circle cx="1713.4" cy="994.1" r="3.4" fill="#a7481d"/><circle cx="1735.4" cy="979.1" r="3.4" fill="#a66538"/><circle cx="1687.8" cy="993.9" r="3.4" fill="#94411a"/><circle cx="1706.9" cy="1001.0" r="3.4" fill="#93421a"/><circle cx="1707.1" cy="997.7" r="3.4" fill="#a13a30"/><circle cx="1716.0" cy="989.2" r="3.4" fill="#9d3f22"/><circle cx="1725.8" cy="981.4" r="3.4" fill="#b45b25"/><circle cx="1690.6" cy="990.0" r="3.4" fill="#864122"/><circle cx="1693.7" cy="1008.3" r="3.4" fill="#884a29"/><circle cx="1763.9" cy="963.6" r="3.4" fill="#b16b2d"/><circle cx="1739.7" cy="988.2" r="3.4" fill="#a9562e"/><circle cx="1730.2" cy="979.3" r="3.4" fill="#a94d21"/><circle cx="1738.6" cy="973.1" r="3.4" fill="#b0503e"/><circle cx="1756.8" cy="988.9" r="3.4" fill="#ac6436"/><circle cx="1746.3" cy="986.6" r="3.4" fill="#b36427"/><circle cx="1748.1" cy="968.1" r="3.4" fill="#bf6829"/><circle cx="1732.9" cy="983.3" r="3.4" fill="#af6226"/><circle cx="1700.8" cy="992.6" r="3.4" fill="#9b4f17"/><circle cx="1794.5" cy="959.7" r="3.4" fill="#c5663f"/><circle cx="1718.9" cy="992.8" r="3.4" fill="#9c4631"/><circle cx="1775.2" cy="969.7" r="3.4" fill="#c06448"/><circle cx="1742.9" cy="975.4" r="3.4" fill="#b25f2a"/><circle cx="1769.9" cy="977.1" r="3.4" fill="#c66b2a"/><circle cx="1759.8" cy="984.6" r="3.4" fill="#b46a3b"/><circle cx="1786.4" cy="958.0" r="3.4" fill="#c9604a"/><circle cx="1786.8" cy="950.3" r="3.4" fill="#c36847"/><circle cx="1697.5" cy="1006.8" r="3.4" fill="#953519"/><circle cx="1793.2" cy="952.4" r="3.4" fill="#c16652"/><circle cx="1767.2" cy="953.6" r="3.4" fill="#bb6338"/><circle cx="1783.1" cy="956.5" r="3.4" fill="#cd773c"/><circle cx="1774.8" cy="957.0" r="3.4" fill="#cb6538"/><circle cx="1746.3" cy="977.2" r="3.4" fill="#bb5335"/><circle cx="1775.0" cy="952.3" r="3.4" fill="#be6e45"/><circle cx="1715.3" cy="982.4" r="3.4" fill="#a84924"/><circle cx="1694.3" cy="1007.6" r="3.4" fill="#9b4f27"/><circle cx="1746.4" cy="982.3" r="3.4" fill="#a96134"/><circle cx="1704.2" cy="1001.4" r="3.4" fill="#893b18"/><circle cx="1745.5" cy="984.9" r="3.4" fill="#af5d22"/><circle cx="1786.3" cy="960.3" r="3.4" fill="#b6643d"/><circle cx="1763.3" cy="962.1" r="3.4" fill="#c46735"/><circle cx="1793.5" cy="959.4" r="3.4" fill="#bf6e4c"/><circle cx="1736.1" cy="990.8" r="3.4" fill="#a66026"/><circle cx="1690.4" cy="965.9" r="3.4" fill="#4d2b96"/><circle cx="1765.8" cy="943.6" r="3.4" fill="#7d63c4"/><circle cx="1765.1" cy="931.2" r="3.4" fill="#7a61c2"/><circle cx="1667.4" cy="992.2" r="3.4" fill="#341e74"/><circle cx="1735.0" cy="948.6" r="3.4" fill="#673eb5"/><circle cx="1685.1" cy="971.5" r="3.4" fill="#452a8b"/><circle cx="1684.7" cy="967.0" r="3.4" fill="#532391"/><circle cx="1670.7" cy="964.0" r="3.4" fill="#47257d"/><circle cx="1764.2" cy="924.5" r="3.4" fill="#7d59b8"/><circle cx="1688.8" cy="982.0" r="3.4" fill="#4f2784"/><circle cx="1743.8" cy="938.5" r="3.4" fill="#8348a9"/><circle cx="1707.7" cy="971.1" r="3.4" fill="#603f9d"/><circle cx="1679.9" cy="967.8" r="3.4" fill="#442394"/><circle cx="1773.6" cy="936.6" r="3.4" fill="#8b66bb"/><circle cx="1740.8" cy="935.8" r="3.4" fill="#7a37ac"/><circle cx="1687.9" cy="974.7" r="3.4" fill="#583598"/><circle cx="1755.4" cy="931.8" r="3.4" fill="#8056c4"/><circle cx="1770.1" cy="952.2" r="3.4" fill="#8753b9"/><circle cx="1780.5" cy="926.2" r="3.4" fill="#9060bf"/><circle cx="1765.4" cy="950.7" r="3.4" fill="#7d46ad"/><circle cx="1665.5" cy="991.0" r="3.4" fill="#44377e"/><circle cx="1753.6" cy="929.9" r="3.4" fill="#714bbd"/><circle cx="1700.9" cy="973.2" r="3.4" fill="#63378f"/><circle cx="1672.9" cy="967.0" r="3.4" fill="#553188"/><circle cx="1751.1" cy="960.0" r="3.4" fill="#7248ba"/><circle cx="1774.0" cy="931.1" r="3.4" fill="#896bca"/><circle cx="1794.5" cy="922.9" r="3.4" fill="#9a69c9"/><circle cx="1784.4" cy="935.0" r="3.4" fill="#9c61c5"/><circle cx="1703.1" cy="980.3" r="3.4" fill="#5f2c9b"/><circle cx="1737.9" cy="936.8" r="3.4" fill="#7946b2"/><circle cx="1697.1" cy="959.8" r="3.4" fill="#582f88"/><circle cx="1768.8" cy="951.1" r="3.4" fill="#7c56b7"/><circle cx="1748.8" cy="943.8" r="3.4" fill="#6c54ad"/><circle cx="1746.6" cy="940.1" r="3.4" fill="#7f44af"/><circle cx="1690.2" cy="974.2" r="3.4" fill="#4b2596"/><circle cx="1703.8" cy="972.1" r="3.4" fill="#4f3f93"/><circle cx="1703.8" cy="977.3" r="3.4" fill="#552992"/><circle cx="1702.2" cy="969.5" r="3.4" fill="#62299e"/><circle cx="1745.8" cy="951.0" r="3.4" fill="#6652a3"/><circle cx="1743.6" cy="931.8" r="3.4" fill="#7340b1"/><circle cx="1696.1" cy="965.4" r="3.4" fill="#4c3b9b"/><circle cx="1773.8" cy="931.2" r="3.4" fill="#8f66c1"/><circle cx="1774.7" cy="937.8" r="3.4" fill="#8e5cb4"/><circle cx="1739.0" cy="964.6" r="3.4" fill="#7240a6"/><circle cx="1777.6" cy="949.0" r="3.4" fill="#7a4cb3"/><circle cx="1731.9" cy="950.2" r="3.4" fill="#5c41ad"/><circle cx="1689.5" cy="980.2" r="3.4" fill="#452a93"/><circle cx="1672.9" cy="984.1" r="3.4" fill="#3c2f7c"/><circle cx="1714.0" cy="950.2" r="3.4" fill="#5e3d96"/><circle cx="1705.0" cy="973.2" r="3.4" fill="#5a2a8a"/><circle cx="1758.8" cy="935.1" r="3.4" fill="#785cc3"/><circle cx="1708.4" cy="963.7" r="3.4" fill="#532ba7"/><circle cx="1743.1" cy="955.7" r="3.4" fill="#6c39b7"/><circle cx="1769.2" cy="945.9" r="3.4" fill="#7e5cbe"/><circle cx="1757.7" cy="941.4" r="3.4" fill="#7456a9"/><circle cx="1751.9" cy="900.2" r="3.4" fill="#b5a745"/><circle cx="1783.8" cy="893.4" r="3.4" fill="#bac35a"/><circle cx="1724.8" cy="940.0" r="3.4" fill="#9a7f30"/><circle cx="1745.6" cy="922.2" r="3.4" fill="#a28b45"/><circle cx="1660.4" cy="981.5" r="3.4" fill="#544d12"/><circle cx="1675.1" cy="958.5" r="3.4" fill="#6f6821"/><circle cx="1721.4" cy="934.0" r="3.4" fill="#9f8521"/><circle cx="1706.6" cy="934.8" r="3.4" fill="#927121"/><circle cx="1674.7" cy="962.5" r="3.4" fill="#5f642b"/><circle cx="1782.2" cy="889.2" r="3.4" fill="#bbb06b"/><circle cx="1719.4" cy="934.2" r="3.4" fill="#8b8135"/><circle cx="1785.1" cy="887.8" r="3.4" fill="#c3bd71"/><circle cx="1740.4" cy="925.2" r="3.4" fill="#a19136"/><circle cx="1739.5" cy="932.0" r="3.4" fill="#a1842b"/><circle cx="1738.4" cy="909.9" r="3.4" fill="#ab8a44"/><circle cx="1737.6" cy="908.2" r="3.4" fill="#a0a135"/><circle cx="1719.7" cy="925.6" r="3.4" fill="#987a2f"/><circle cx="1670.9" cy="960.0" r="3.4" fill="#715929"/><circle cx="1739.2" cy="911.2" r="3.4" fill="#a88a42"/><circle cx="1699.2" cy="939.7" r="3.4" fill="#88751b"/><circle cx="1778.6" cy="892.6" r="3.4" fill="#c6c260"/><circle cx="1648.6" cy="963.3" r="3.4" fill="#5b4c12"/><circle cx="1678.7" cy="962.8" r="3.4" fill="#6c6117"/><circle cx="1742.4" cy="923.2" r="3.4" fill="#a79539"/><circle cx="1692.2" cy="961.0" r="3.4" fill="#826b14"/><circle cx="1655.4" cy="961.3" r="3.4" fill="#60580f"/><circle cx="1647.7" cy="962.7" r="3.4" fill="#634d1a"/><circle cx="1656.1" cy="959.0" r="3.4" fill="#685d13"/><circle cx="1656.9" cy="977.4" r="3.4" fill="#644b1b"/><circle cx="1640.8" cy="971.4" r="3.4" fill="#4e4f24"/><circle cx="1769.3" cy="897.1" r="3.4" fill="#b1b05d"/><circle cx="1644.6" cy="972.6" r="3.4" fill="#55491f"/><circle cx="1781.0" cy="877.7" r="3.4" fill="#bfc36d"/><circle cx="1718.3" cy="934.9" r="3.4" fill="#91842a"/><circle cx="1699.7" cy="936.1" r="3.4" fill="#79712a"/><circle cx="1766.1" cy="907.1" r="3.4" fill="#b5a648"/><circle cx="1668.9" cy="970.6" r="3.4" fill="#704f11"/><circle cx="1761.9" cy="898.2" r="3.4" fill="#b6a85f"/><circle cx="1685.9" cy="955.4" r="3.4" fill="#7a5823"/><circle cx="1693.4" cy="934.7" r="3.4" fill="#8d7822"/><circle cx="1686.9" cy="953.5" r="3.4" fill="#806413"/><circle cx="1744.5" cy="909.2" r="3.4" fill="#9d9d38"/><circle cx="1648.2" cy="983.1" r="3.4" fill="#595522"/><circle cx="1699.5" cy="956.0" r="3.4" fill="#7a7014"/><circle cx="1718.2" cy="935.7" r="3.4" fill="#8c7f25"/></g><path d="M1550.6 1020.4L1583.2 820.1" stroke="#3ee83e" stroke-width="2" fill="none"/><polygon points="1584.5,812.2 1586.7,820.7 1579.8,819.5" fill="#3ee83e"/><text x="1588" y="812" font-family="Liberation Sans" font-size="6" fill="#3ee83e">G</text><path d="M1550.6 1020.4L1745.0 1087.8" stroke="#f04040" stroke-width="2" fill="none"/><polygon points="1752.6,1090.4 1743.9,1091.1 1746.2,1084.5" fill="#f04040"/><text x="1756" y="1090" font-family="Liberation Sans" font-size="6" fill="#f04040">R</text><path d="M1550.6 1020.4L1752.7 894.5" stroke="#4a8af0" stroke-width="2" fill="none"/><polygon points="1759.5,890.3 1754.6,897.5 1750.9,891.6" fill="#4a8af0"/><text x="1762" y="888" font-family="Liberation Sans" font-size="6" fill="#4a8af0">B</text></svg>
<div class="t" style="left:1524px;width:382px;text-align:center;top:1137.94px;font:10px/10px 'Liberation Mono', monospace;color:#d2d6de">Drag orbit | Shift-drag roll | Wheel zoom</div>
<div class="b" style="left:1675px;top:1157px;width:80px;height:19px;background:#101115;border:1px solid #3a3d45;"></div>
<div class="t" style="left:1675px;width:80px;text-align:center;top:1163.56px;font:bold 8.4px/8.4px 'Liberation Mono', monospace;color:#d8dce4">&#8634; RESET VIEW</div>
<div class="b" style="left:26px;top:839px;width:2px;height:28px;background:#3b82f6;"></div>
<div class="b" style="left:28px;top:839px;width:148px;height:28px;background:#162032;"></div>
<div class="b" style="left:36px;top:845px;width:15px;height:15px;background:transparent;border:1px solid #3b82f6;"></div>
<svg style="left:41px;top:850px" width="6" height="6"><polygon points="0,0 6,3 0,6" fill="#3b82f6"/></svg>
<div class="t" style="left:60.40px;top:847.74px;font:14.7px/14.7px 'Liberation Mono', monospace;font-weight:bold;color:#d6dae2;">SAMPLE IMAGE</div>
<div class="b" style="left:180px;top:841px;width:66px;height:24px;background:#16202f;border:1px solid #3b82f6;"></div>
<div class="t" style="left:180px;width:66px;top:848.66px;text-align:center;font:10.2px/10.2px 'Liberation Sans', sans-serif;color:#3b82f6;transform:scaleX(0.925);transform-origin:center top;">BUILT-IN</div>
<div class="b" style="left:252px;top:841px;width:56px;height:24px;background:#0f1014;border:1px solid #3d4049;"></div>
<div class="t" style="left:252px;width:56px;top:848.66px;text-align:center;font:10.2px/10.2px 'Liberation Sans', sans-serif;color:#e2e5ea;transform:scaleX(0.73);transform-origin:center top;">UPLOAD</div>
<div class="b" style="left:316px;top:842px;width:704px;height:22px;background:#0f1014;border:1px solid #1f4a82;"></div>
<div class="b" style="left:1038px;top:839px;width:2px;height:28px;background:#3b82f6;"></div>
<div class="b" style="left:1040px;top:839px;width:162px;height:28px;background:#162032;"></div>
<div class="b" style="left:1048px;top:845px;width:15px;height:15px;background:transparent;border:1px solid #3b82f6;"></div>
<svg style="left:1053px;top:850px" width="6" height="6"><polygon points="0,0 6,3 0,6" fill="#3b82f6"/></svg>
<div class="t" style="left:1072.50px;top:847.74px;font:14.7px/14.7px 'Liberation Mono', monospace;font-weight:bold;color:#d6dae2;">SPLIT COMPARE</div>
<div class="b" style="left:1212px;top:843px;width:62px;height:20px;background:#16202f;border:1px solid #3b82f6;"></div>
<div class="t" style="left:1212px;width:62px;top:850.62px;text-align:center;font:8.33px/8.33px 'Liberation Mono', monospace;color:#3b82f6;">Vertical</div>
<div class="b" style="left:1280px;top:843px;width:72px;height:20px;background:#0f1014;border:1px solid #3d4049;"></div>
<div class="t" style="left:1280px;width:72px;top:850.62px;text-align:center;font:8.33px/8.33px 'Liberation Mono', monospace;font-weight:bold;color:#e2e5ea;">Horizontal</div>
<div class="t" style="left:1367.50px;top:846.30px;font:15px/15px 'Liberation Sans', sans-serif;font-weight:bold;color:#3b82f6;transform:scaleX(0.7);transform-origin:left top;-webkit-text-stroke:0.6px #3b82f6;">ZOOM</div>
<div class="b" style="left:1408px;top:841px;width:94px;height:23px;background:#0f1014;border:1px solid #1f4a82;"></div>
<div class="t" style="left:1440.50px;top:848.08px;font:11.25px/11.25px 'Liberation Mono', monospace;color:#e2e5ea;-webkit-text-stroke:0.25px #e2e5ea;">100%</div>
<div class="t" style="left:1487px;top:850.38px;font:9px/9px 'Liberation Sans', sans-serif;color:#7a7f8a">&#9662;</div>
<div class="t" style="left:28.00px;top:888.68px;font:8.25px/8.25px 'Liberation Mono', monospace;color:#5d626d;">VECTORSCOPE</div>
<div class="t" style="left:402.80px;top:888.68px;font:8.25px/8.25px 'Liberation Mono', monospace;color:#5d626d;">WAVEFORM</div>
<div class="t" style="left:900px;width:223.5px;text-align:right;top:888.68px;font:8.25px/8.25px 'Liberation Mono', monospace;color:#3b3f48">0 — 100 IRE</div>
<div class="t" style="left:1152.00px;top:888.68px;font:8.25px/8.25px 'Liberation Mono', monospace;color:#5d626d;">HISTOGRAM</div>
<div class="t" style="left:27.60px;top:1177.66px;font:8.27px/8.27px 'Liberation Mono', monospace;font-weight:bold;color:#2fe3a0;">Using built-in sample image.</div>
<div class="t" style="left:196.70px;top:1177.66px;font:8.27px/8.27px 'Liberation Mono', monospace;color:#3b3f48;">FULL · 65³</div>
<div class="t" style="left:1300px;width:199.4px;text-align:right;top:1177.66px;font:8.27px/8.27px 'Liberation Mono', monospace;color:#3b3f48">LUT2LogC4 · v2.66</div>
<div class="b" style="left:16px;top:905px;width:372px;height:264px;background:#000;"></div>
<div class="b" style="left:392px;top:905px;width:744px;height:264px;background:#0b0b0b;"></div>
<div class="b" style="left:1139px;top:904px;width:374px;height:265px;background:#04050a;"></div>
<svg style="left:16px;top:905px" width="372" height="264" viewBox="16 905 372 264"><path d="M201.60 935.40A102 102 0 0 1 205.87 935.49" stroke="#ff191c" stroke-width="4.5" fill="none"/><path d="M205.16 935.46A102 102 0 0 1 209.43 935.70" stroke="#ff1922" stroke-width="4.5" fill="none"/><path d="M208.72 935.65A102 102 0 0 1 212.97 936.04" stroke="#ff1927" stroke-width="4.5" fill="none"/><path d="M212.26 935.96A102 102 0 0 1 216.50 936.49" stroke="#ff192d" stroke-width="4.5" fill="none"/><path d="M215.80 936.39A102 102 0 0 1 220.01 937.08" stroke="#ff1933" stroke-width="4.5" fill="none"/><path d="M219.31 936.95A102 102 0 0 1 223.50 937.78" stroke="#ff1939" stroke-width="4.5" fill="none"/><path d="M222.81 937.63A102 102 0 0 1 226.97 938.60" stroke="#ff193e" stroke-width="4.5" fill="none"/><path d="M226.28 938.43A102 102 0 0 1 230.40 939.55" stroke="#ff1944" stroke-width="4.5" fill="none"/><path d="M229.72 939.35A102 102 0 0 1 233.80 940.61" stroke="#ff194a" stroke-width="4.5" fill="none"/><path d="M233.12 940.39A102 102 0 0 1 237.15 941.80" stroke="#ff1950" stroke-width="4.5" fill="none"/><path d="M236.49 941.55A102 102 0 0 1 240.47 943.10" stroke="#ff1955" stroke-width="4.5" fill="none"/><path d="M239.81 942.83A102 102 0 0 1 243.74 944.51" stroke="#ff195c" stroke-width="4.5" fill="none"/><path d="M243.09 944.22A102 102 0 0 1 246.95 946.04" stroke="#ff1962" stroke-width="4.5" fill="none"/><path d="M246.31 945.72A102 102 0 0 1 250.11 947.68" stroke="#ff1968" stroke-width="4.5" fill="none"/><path d="M249.49 947.34A102 102 0 0 1 253.22 949.42" stroke="#ff196e" stroke-width="4.5" fill="none"/><path d="M252.60 949.07A102 102 0 0 1 256.25 951.28" stroke="#ff1974" stroke-width="4.5" fill="none"/><path d="M255.65 950.90A102 102 0 0 1 259.23 953.24" stroke="#ff197a" stroke-width="4.5" fill="none"/><path d="M258.64 952.84A102 102 0 0 1 262.13 955.30" stroke="#ff1980" stroke-width="4.5" fill="none"/><path d="M261.55 954.88A102 102 0 0 1 264.96 957.46" stroke="#ff1986" stroke-width="4.5" fill="none"/><path d="M264.40 957.02A102 102 0 0 1 267.71 959.72" stroke="#ff198d" stroke-width="4.5" fill="none"/><path d="M267.16 959.26A102 102 0 0 1 270.38 962.08" stroke="#ff1993" stroke-width="4.5" fill="none"/><path d="M269.85 961.60A102 102 0 0 1 272.97 964.52" stroke="#ff1999" stroke-width="4.5" fill="none"/><path d="M272.46 964.03A102 102 0 0 1 275.47 967.06" stroke="#ff199f" stroke-width="4.5" fill="none"/><path d="M274.97 966.54A102 102 0 0 1 277.88 969.68" stroke="#ff19ac" stroke-width="4.5" fill="none"/><path d="M277.40 969.15A102 102 0 0 1 280.19 972.38" stroke="#ff19b8" stroke-width="4.5" fill="none"/><path d="M279.74 971.84A102 102 0 0 1 282.41 975.17" stroke="#ff19c5" stroke-width="4.5" fill="none"/><path d="M281.98 974.60A102 102 0 0 1 284.54 978.02" stroke="#ff19d2" stroke-width="4.5" fill="none"/><path d="M284.12 977.45A102 102 0 0 1 286.56 980.95" stroke="#ff19df" stroke-width="4.5" fill="none"/><path d="M286.16 980.36A102 102 0 0 1 288.48 983.95" stroke="#ff19eb" stroke-width="4.5" fill="none"/><path d="M288.10 983.35A102 102 0 0 1 290.29 987.02" stroke="#ff19f8" stroke-width="4.5" fill="none"/><path d="M289.93 986.40A102 102 0 0 1 291.99 990.14" stroke="#f719ff" stroke-width="4.5" fill="none"/><path d="M291.66 989.51A102 102 0 0 1 293.59 993.33" stroke="#e819ff" stroke-width="4.5" fill="none"/><path d="M293.28 992.69A102 102 0 0 1 295.07 996.56" stroke="#d819ff" stroke-width="4.5" fill="none"/><path d="M294.78 995.91A102 102 0 0 1 296.44 999.85" stroke="#c919ff" stroke-width="4.5" fill="none"/><path d="M296.17 999.19A102 102 0 0 1 297.69 1003.18" stroke="#ba19ff" stroke-width="4.5" fill="none"/><path d="M297.45 1002.51A102 102 0 0 1 298.83 1006.56" stroke="#aa19ff" stroke-width="4.5" fill="none"/><path d="M298.61 1005.88A102 102 0 0 1 299.84 1009.97" stroke="#9b19ff" stroke-width="4.5" fill="none"/><path d="M299.65 1009.28A102 102 0 0 1 300.74 1013.42" stroke="#9b38ff" stroke-width="4.5" fill="none"/><path d="M300.57 1012.72A102 102 0 0 1 301.52 1016.89" stroke="#8c38ff" stroke-width="4.5" fill="none"/><path d="M301.37 1016.19A102 102 0 0 1 302.17 1020.39" stroke="#7c38ff" stroke-width="4.5" fill="none"/><path d="M302.05 1019.69A102 102 0 0 1 302.70 1023.91" stroke="#6d38ff" stroke-width="4.5" fill="none"/><path d="M302.61 1023.20A102 102 0 0 1 303.11 1027.45" stroke="#5d38ff" stroke-width="4.5" fill="none"/><path d="M303.04 1026.74A102 102 0 0 1 303.40 1031.00" stroke="#4e38ff" stroke-width="4.5" fill="none"/><path d="M303.35 1030.28A102 102 0 0 1 303.56 1034.55" stroke="#3e38ff" stroke-width="4.5" fill="none"/><path d="M303.54 1033.84A102 102 0 0 1 303.60 1038.11" stroke="#3840ff" stroke-width="4.5" fill="none"/><path d="M303.60 1037.40A102 102 0 0 1 303.51 1041.67" stroke="#384bff" stroke-width="4.5" fill="none"/><path d="M303.54 1040.96A102 102 0 0 1 303.30 1045.23" stroke="#3850ff" stroke-width="4.5" fill="none"/><path d="M303.35 1044.52A102 102 0 0 1 302.96 1048.77" stroke="#3856ff" stroke-width="4.5" fill="none"/><path d="M303.04 1048.06A102 102 0 0 1 302.51 1052.30" stroke="#385cff" stroke-width="4.5" fill="none"/><path d="M302.61 1051.60A102 102 0 0 1 301.92 1055.81" stroke="#3861ff" stroke-width="4.5" fill="none"/><path d="M302.05 1055.11A102 102 0 0 1 301.22 1059.30" stroke="#3867ff" stroke-width="4.5" fill="none"/><path d="M301.37 1058.61A102 102 0 0 1 300.40 1062.77" stroke="#386cff" stroke-width="4.5" fill="none"/><path d="M300.57 1062.08A102 102 0 0 1 299.45 1066.20" stroke="#3872ff" stroke-width="4.5" fill="none"/><path d="M299.65 1065.52A102 102 0 0 1 298.39 1069.60" stroke="#3877ff" stroke-width="4.5" fill="none"/><path d="M298.61 1068.92A102 102 0 0 1 297.20 1072.95" stroke="#387dff" stroke-width="4.5" fill="none"/><path d="M297.45 1072.29A102 102 0 0 1 295.90 1076.27" stroke="#3882ff" stroke-width="4.5" fill="none"/><path d="M296.17 1075.61A102 102 0 0 1 294.49 1079.54" stroke="#3888ff" stroke-width="4.5" fill="none"/><path d="M294.78 1078.89A102 102 0 0 1 292.96 1082.75" stroke="#388dff" stroke-width="4.5" fill="none"/><path d="M293.28 1082.11A102 102 0 0 1 291.32 1085.91" stroke="#3893ff" stroke-width="4.5" fill="none"/><path d="M291.66 1085.29A102 102 0 0 1 289.58 1089.02" stroke="#3898ff" stroke-width="4.5" fill="none"/><path d="M289.93 1088.40A102 102 0 0 1 287.72 1092.05" stroke="#389dff" stroke-width="4.5" fill="none"/><path d="M288.10 1091.45A102 102 0 0 1 285.76 1095.03" stroke="#38a1ff" stroke-width="4.5" fill="none"/><path d="M286.16 1094.44A102 102 0 0 1 283.70 1097.93" stroke="#38a5ff" stroke-width="4.5" fill="none"/><path d="M284.12 1097.35A102 102 0 0 1 281.54 1100.76" stroke="#38aaff" stroke-width="4.5" fill="none"/><path d="M281.98 1100.20A102 102 0 0 1 279.28 1103.51" stroke="#38aeff" stroke-width="4.5" fill="none"/><path d="M279.74 1102.96A102 102 0 0 1 276.92 1106.18" stroke="#38b2ff" stroke-width="4.5" fill="none"/><path d="M277.40 1105.65A102 102 0 0 1 274.48 1108.77" stroke="#38b6ff" stroke-width="4.5" fill="none"/><path d="M274.97 1108.26A102 102 0 0 1 271.94 1111.27" stroke="#38baff" stroke-width="4.5" fill="none"/><path d="M272.46 1110.77A102 102 0 0 1 269.32 1113.68" stroke="#19b4ff" stroke-width="4.5" fill="none"/><path d="M269.85 1113.20A102 102 0 0 1 266.62 1115.99" stroke="#19b9ff" stroke-width="4.5" fill="none"/><path d="M267.16 1115.54A102 102 0 0 1 263.83 1118.21" stroke="#19beff" stroke-width="4.5" fill="none"/><path d="M264.40 1117.78A102 102 0 0 1 260.98 1120.34" stroke="#19c3ff" stroke-width="4.5" fill="none"/><path d="M261.55 1119.92A102 102 0 0 1 258.05 1122.36" stroke="#19c8ff" stroke-width="4.5" fill="none"/><path d="M258.64 1121.96A102 102 0 0 1 255.05 1124.28" stroke="#19ccff" stroke-width="4.5" fill="none"/><path d="M255.65 1123.90A102 102 0 0 1 251.98 1126.09" stroke="#19d1ff" stroke-width="4.5" fill="none"/><path d="M252.60 1125.73A102 102 0 0 1 248.86 1127.79" stroke="#19d6ff" stroke-width="4.5" fill="none"/><path d="M249.49 1127.46A102 102 0 0 1 245.67 1129.39" stroke="#19dbff" stroke-width="4.5" fill="none"/><path d="M246.31 1129.08A102 102 0 0 1 242.44 1130.87" stroke="#19dfff" stroke-width="4.5" fill="none"/><path d="M243.09 1130.58A102 102 0 0 1 239.15 1132.24" stroke="#19e4ff" stroke-width="4.5" fill="none"/><path d="M239.81 1131.97A102 102 0 0 1 235.82 1133.49" stroke="#19e9ff" stroke-width="4.5" fill="none"/><path d="M236.49 1133.25A102 102 0 0 1 232.44 1134.63" stroke="#19efff" stroke-width="4.5" fill="none"/><path d="M233.12 1134.41A102 102 0 0 1 229.03 1135.64" stroke="#19f7ff" stroke-width="4.5" fill="none"/><path d="M229.72 1135.45A102 102 0 0 1 225.58 1136.54" stroke="#19ffff" stroke-width="4.5" fill="none"/><path d="M226.28 1136.37A102 102 0 0 1 222.11 1137.32" stroke="#19fff7" stroke-width="4.5" fill="none"/><path d="M222.81 1137.17A102 102 0 0 1 218.61 1137.97" stroke="#19ffef" stroke-width="4.5" fill="none"/><path d="M219.31 1137.85A102 102 0 0 1 215.09 1138.50" stroke="#19ffe8" stroke-width="4.5" fill="none"/><path d="M215.80 1138.41A102 102 0 0 1 211.55 1138.91" stroke="#19ffe0" stroke-width="4.5" fill="none"/><path d="M212.26 1138.84A102 102 0 0 1 208.00 1139.20" stroke="#19ffd8" stroke-width="4.5" fill="none"/><path d="M208.72 1139.15A102 102 0 0 1 204.45 1139.36" stroke="#19ffd1" stroke-width="4.5" fill="none"/><path d="M205.16 1139.34A102 102 0 0 1 200.89 1139.40" stroke="#19ffc9" stroke-width="4.5" fill="none"/><path d="M201.60 1139.40A102 102 0 0 1 197.33 1139.31" stroke="#19ffc1" stroke-width="4.5" fill="none"/><path d="M198.04 1139.34A102 102 0 0 1 193.77 1139.10" stroke="#19ffba" stroke-width="4.5" fill="none"/><path d="M194.48 1139.15A102 102 0 0 1 190.23 1138.76" stroke="#19ffb2" stroke-width="4.5" fill="none"/><path d="M190.94 1138.84A102 102 0 0 1 186.70 1138.31" stroke="#19ffaa" stroke-width="4.5" fill="none"/><path d="M187.40 1138.41A102 102 0 0 1 183.19 1137.72" stroke="#19ffa3" stroke-width="4.5" fill="none"/><path d="M183.89 1137.85A102 102 0 0 1 179.70 1137.02" stroke="#19ff9b" stroke-width="4.5" fill="none"/><path d="M180.39 1137.17A102 102 0 0 1 176.23 1136.20" stroke="#19ff93" stroke-width="4.5" fill="none"/><path d="M176.92 1136.37A102 102 0 0 1 172.80 1135.25" stroke="#19ff8c" stroke-width="4.5" fill="none"/><path d="M173.48 1135.45A102 102 0 0 1 169.40 1134.19" stroke="#19ff84" stroke-width="4.5" fill="none"/><path d="M170.08 1134.41A102 102 0 0 1 166.05 1133.00" stroke="#19ff7c" stroke-width="4.5" fill="none"/><path d="M166.71 1133.25A102 102 0 0 1 162.73 1131.70" stroke="#19ff75" stroke-width="4.5" fill="none"/><path d="M163.39 1131.97A102 102 0 0 1 159.46 1130.29" stroke="#19ff6d" stroke-width="4.5" fill="none"/><path d="M160.11 1130.58A102 102 0 0 1 156.25 1128.76" stroke="#19ff66" stroke-width="4.5" fill="none"/><path d="M156.89 1129.08A102 102 0 0 1 153.09 1127.12" stroke="#19ff5e" stroke-width="4.5" fill="none"/><path d="M153.71 1127.46A102 102 0 0 1 149.98 1125.38" stroke="#19ff56" stroke-width="4.5" fill="none"/><path d="M150.60 1125.73A102 102 0 0 1 146.95 1123.52" stroke="#19ff4f" stroke-width="4.5" fill="none"/><path d="M147.55 1123.90A102 102 0 0 1 143.97 1121.56" stroke="#19ff47" stroke-width="4.5" fill="none"/><path d="M144.56 1121.96A102 102 0 0 1 141.07 1119.50" stroke="#19ff3f" stroke-width="4.5" fill="none"/><path d="M141.65 1119.92A102 102 0 0 1 138.24 1117.34" stroke="#19ff38" stroke-width="4.5" fill="none"/><path d="M138.80 1117.78A102 102 0 0 1 135.49 1115.08" stroke="#19ff30" stroke-width="4.5" fill="none"/><path d="M136.04 1115.54A102 102 0 0 1 132.82 1112.72" stroke="#19ff26" stroke-width="4.5" fill="none"/><path d="M133.35 1113.20A102 102 0 0 1 130.23 1110.28" stroke="#19ff1b" stroke-width="4.5" fill="none"/><path d="M130.74 1110.77A102 102 0 0 1 127.73 1107.74" stroke="#23ff19" stroke-width="4.5" fill="none"/><path d="M128.23 1108.26A102 102 0 0 1 125.32 1105.12" stroke="#2eff19" stroke-width="4.5" fill="none"/><path d="M125.80 1105.65A102 102 0 0 1 123.01 1102.42" stroke="#3aff19" stroke-width="4.5" fill="none"/><path d="M123.46 1102.96A102 102 0 0 1 120.79 1099.63" stroke="#45ff19" stroke-width="4.5" fill="none"/><path d="M121.22 1100.20A102 102 0 0 1 118.66 1096.78" stroke="#50ff19" stroke-width="4.5" fill="none"/><path d="M119.08 1097.35A102 102 0 0 1 116.64 1093.85" stroke="#5cff19" stroke-width="4.5" fill="none"/><path d="M117.04 1094.44A102 102 0 0 1 114.72 1090.85" stroke="#67ff19" stroke-width="4.5" fill="none"/><path d="M115.10 1091.45A102 102 0 0 1 112.91 1087.78" stroke="#73ff19" stroke-width="4.5" fill="none"/><path d="M113.27 1088.40A102 102 0 0 1 111.21 1084.66" stroke="#7eff19" stroke-width="4.5" fill="none"/><path d="M111.54 1085.29A102 102 0 0 1 109.61 1081.47" stroke="#8aff19" stroke-width="4.5" fill="none"/><path d="M109.92 1082.11A102 102 0 0 1 108.13 1078.24" stroke="#95ff19" stroke-width="4.5" fill="none"/><path d="M108.42 1078.89A102 102 0 0 1 106.76 1074.95" stroke="#a1ff19" stroke-width="4.5" fill="none"/><path d="M107.03 1075.61A102 102 0 0 1 105.51 1071.62" stroke="#acff19" stroke-width="4.5" fill="none"/><path d="M105.75 1072.29A102 102 0 0 1 104.37 1068.24" stroke="#b6ff19" stroke-width="4.5" fill="none"/><path d="M104.59 1068.92A102 102 0 0 1 103.36 1064.83" stroke="#bdff19" stroke-width="4.5" fill="none"/><path d="M103.55 1065.52A102 102 0 0 1 102.46 1061.38" stroke="#c5ff19" stroke-width="4.5" fill="none"/><path d="M102.63 1062.08A102 102 0 0 1 101.68 1057.91" stroke="#cdff19" stroke-width="4.5" fill="none"/><path d="M101.83 1058.61A102 102 0 0 1 101.03 1054.41" stroke="#d4ff19" stroke-width="4.5" fill="none"/><path d="M101.15 1055.11A102 102 0 0 1 100.50 1050.89" stroke="#dcff19" stroke-width="4.5" fill="none"/><path d="M100.59 1051.60A102 102 0 0 1 100.09 1047.35" stroke="#e4ff19" stroke-width="4.5" fill="none"/><path d="M100.16 1048.06A102 102 0 0 1 99.80 1043.80" stroke="#ebff19" stroke-width="4.5" fill="none"/><path d="M99.85 1044.52A102 102 0 0 1 99.64 1040.25" stroke="#f3ff19" stroke-width="4.5" fill="none"/><path d="M99.66 1040.96A102 102 0 0 1 99.60 1036.69" stroke="#fbff19" stroke-width="4.5" fill="none"/><path d="M99.60 1037.40A102 102 0 0 1 99.69 1033.13" stroke="#fffc19" stroke-width="4.5" fill="none"/><path d="M99.66 1033.84A102 102 0 0 1 99.90 1029.57" stroke="#fff719" stroke-width="4.5" fill="none"/><path d="M99.85 1030.28A102 102 0 0 1 100.24 1026.03" stroke="#fff219" stroke-width="4.5" fill="none"/><path d="M100.16 1026.74A102 102 0 0 1 100.69 1022.50" stroke="#ffed19" stroke-width="4.5" fill="none"/><path d="M100.59 1023.20A102 102 0 0 1 101.28 1018.99" stroke="#ffe819" stroke-width="4.5" fill="none"/><path d="M101.15 1019.69A102 102 0 0 1 101.98 1015.50" stroke="#ffe219" stroke-width="4.5" fill="none"/><path d="M101.83 1016.19A102 102 0 0 1 102.80 1012.03" stroke="#ffdd19" stroke-width="4.5" fill="none"/><path d="M102.63 1012.72A102 102 0 0 1 103.75 1008.60" stroke="#ffd819" stroke-width="4.5" fill="none"/><path d="M103.55 1009.28A102 102 0 0 1 104.81 1005.20" stroke="#ffd319" stroke-width="4.5" fill="none"/><path d="M104.59 1005.88A102 102 0 0 1 106.00 1001.85" stroke="#ffce19" stroke-width="4.5" fill="none"/><path d="M105.75 1002.51A102 102 0 0 1 107.30 998.53" stroke="#ffc919" stroke-width="4.5" fill="none"/><path d="M107.03 999.19A102 102 0 0 1 108.71 995.26" stroke="#ffc419" stroke-width="4.5" fill="none"/><path d="M108.42 995.91A102 102 0 0 1 110.24 992.05" stroke="#ffbf19" stroke-width="4.5" fill="none"/><path d="M109.92 992.69A102 102 0 0 1 111.88 988.89" stroke="#ffba19" stroke-width="4.5" fill="none"/><path d="M111.54 989.51A102 102 0 0 1 113.62 985.78" stroke="#ffb519" stroke-width="4.5" fill="none"/><path d="M113.27 986.40A102 102 0 0 1 115.48 982.75" stroke="#ffaf19" stroke-width="4.5" fill="none"/><path d="M115.10 983.35A102 102 0 0 1 117.44 979.77" stroke="#ffaa19" stroke-width="4.5" fill="none"/><path d="M117.04 980.36A102 102 0 0 1 119.50 976.87" stroke="#ffa519" stroke-width="4.5" fill="none"/><path d="M119.08 977.45A102 102 0 0 1 121.66 974.04" stroke="#ffa019" stroke-width="4.5" fill="none"/><path d="M121.22 974.60A102 102 0 0 1 123.92 971.29" stroke="#ff9b19" stroke-width="4.5" fill="none"/><path d="M123.46 971.84A102 102 0 0 1 126.28 968.62" stroke="#ff9619" stroke-width="4.5" fill="none"/><path d="M125.80 969.15A102 102 0 0 1 128.72 966.03" stroke="#ff9119" stroke-width="4.5" fill="none"/><path d="M128.23 966.54A102 102 0 0 1 131.26 963.53" stroke="#ff8c19" stroke-width="4.5" fill="none"/><path d="M130.74 964.03A102 102 0 0 1 133.88 961.12" stroke="#ff8719" stroke-width="4.5" fill="none"/><path d="M133.35 961.60A102 102 0 0 1 136.58 958.81" stroke="#ff8219" stroke-width="4.5" fill="none"/><path d="M136.04 959.26A102 102 0 0 1 139.37 956.59" stroke="#ff7c19" stroke-width="4.5" fill="none"/><path d="M138.80 957.02A102 102 0 0 1 142.22 954.46" stroke="#ff7719" stroke-width="4.5" fill="none"/><path d="M141.65 954.88A102 102 0 0 1 145.15 952.44" stroke="#ff7219" stroke-width="4.5" fill="none"/><path d="M144.56 952.84A102 102 0 0 1 148.15 950.52" stroke="#ff6d19" stroke-width="4.5" fill="none"/><path d="M147.55 950.90A102 102 0 0 1 151.22 948.71" stroke="#ff6819" stroke-width="4.5" fill="none"/><path d="M150.60 949.07A102 102 0 0 1 154.34 947.01" stroke="#ff6319" stroke-width="4.5" fill="none"/><path d="M153.71 947.34A102 102 0 0 1 157.53 945.41" stroke="#ff5e19" stroke-width="4.5" fill="none"/><path d="M156.89 945.72A102 102 0 0 1 160.76 943.93" stroke="#ff5919" stroke-width="4.5" fill="none"/><path d="M160.11 944.22A102 102 0 0 1 164.05 942.56" stroke="#ff5419" stroke-width="4.5" fill="none"/><path d="M163.39 942.83A102 102 0 0 1 167.38 941.31" stroke="#ff4f19" stroke-width="4.5" fill="none"/><path d="M166.71 941.55A102 102 0 0 1 170.76 940.17" stroke="#ff4919" stroke-width="4.5" fill="none"/><path d="M170.08 940.39A102 102 0 0 1 174.17 939.16" stroke="#ff4419" stroke-width="4.5" fill="none"/><path d="M173.48 939.35A102 102 0 0 1 177.62 938.26" stroke="#ff3f19" stroke-width="4.5" fill="none"/><path d="M176.92 938.43A102 102 0 0 1 181.09 937.48" stroke="#ff3a19" stroke-width="4.5" fill="none"/><path d="M180.39 937.63A102 102 0 0 1 184.59 936.83" stroke="#ff3519" stroke-width="4.5" fill="none"/><path d="M183.89 936.95A102 102 0 0 1 188.11 936.30" stroke="#ff3019" stroke-width="4.5" fill="none"/><path d="M187.40 936.39A102 102 0 0 1 191.65 935.89" stroke="#ff2b19" stroke-width="4.5" fill="none"/><path d="M190.94 935.96A102 102 0 0 1 195.20 935.60" stroke="#ff2619" stroke-width="4.5" fill="none"/><path d="M194.48 935.65A102 102 0 0 1 198.75 935.44" stroke="#ff2119" stroke-width="4.5" fill="none"/><path d="M198.04 935.46A102 102 0 0 1 202.31 935.40" stroke="#ff1c19" stroke-width="4.5" fill="none"/><path d="M201.60 946.40L201.60 934.40M206.57 942.53L207.02 934.04M211.53 942.92L212.42 934.47M216.46 943.57L217.79 935.17M221.35 944.48L223.12 936.16M226.19 945.64L228.39 937.43M230.96 947.05L233.58 938.97M235.64 948.71L238.69 940.77M240.24 950.61L243.70 942.85M244.73 952.75L248.59 945.18M247.10 958.59L253.10 948.20M253.34 957.73L257.97 950.60M257.44 960.54L262.44 953.67M261.39 963.57L266.73 956.97M265.17 966.80L270.86 960.48M268.78 970.22L274.79 964.21M272.20 973.83L278.52 968.14M275.43 977.61L282.03 972.27M278.46 981.56L285.33 976.56M281.27 985.66L288.40 981.03M280.41 991.90L290.80 985.90M286.25 994.27L293.82 990.41M288.39 998.76L296.15 995.30M290.29 1003.36L298.23 1000.31M291.95 1008.04L300.03 1005.42M293.36 1012.81L301.57 1010.61M294.52 1017.65L302.84 1015.88M295.43 1022.54L303.83 1021.21M296.08 1027.47L304.53 1026.58M296.47 1032.43L304.96 1031.98M292.60 1037.40L304.60 1037.40M296.47 1042.37L304.96 1042.82M296.08 1047.33L304.53 1048.22M295.43 1052.26L303.83 1053.59M294.52 1057.15L302.84 1058.92M293.36 1061.99L301.57 1064.19M291.95 1066.76L300.03 1069.38M290.29 1071.44L298.23 1074.49M288.39 1076.04L296.15 1079.50M286.25 1080.53L293.82 1084.39M280.41 1082.90L290.80 1088.90M281.27 1089.14L288.40 1093.77M278.46 1093.24L285.33 1098.24M275.43 1097.19L282.03 1102.53M272.20 1100.97L278.52 1106.66M268.78 1104.58L274.79 1110.59M265.17 1108.00L270.86 1114.32M261.39 1111.23L266.73 1117.83M257.44 1114.26L262.44 1121.13M253.34 1117.07L257.97 1124.20M247.10 1116.21L253.10 1126.60M244.73 1122.05L248.59 1129.62M240.24 1124.19L243.70 1131.95M235.64 1126.09L238.69 1134.03M230.96 1127.75L233.58 1135.83M226.19 1129.16L228.39 1137.37M221.35 1130.32L223.12 1138.64M216.46 1131.23L217.79 1139.63M211.53 1131.88L212.42 1140.33M206.57 1132.27L207.02 1140.76M201.60 1128.40L201.60 1140.40M196.63 1132.27L196.18 1140.76M191.67 1131.88L190.78 1140.33M186.74 1131.23L185.41 1139.63M181.85 1130.32L180.08 1138.64M177.01 1129.16L174.81 1137.37M172.24 1127.75L169.62 1135.83M167.56 1126.09L164.51 1134.03M162.96 1124.19L159.50 1131.95M158.47 1122.05L154.61 1129.62M156.10 1116.21L150.10 1126.60M149.86 1117.07L145.23 1124.20M145.76 1114.26L140.76 1121.13M141.81 1111.23L136.47 1117.83M138.03 1108.00L132.34 1114.32M134.42 1104.58L128.41 1110.59M131.00 1100.97L124.68 1106.66M127.77 1097.19L121.17 1102.53M124.74 1093.24L117.87 1098.24M121.93 1089.14L114.80 1093.77M122.79 1082.90L112.40 1088.90M116.95 1080.53L109.38 1084.39M114.81 1076.04L107.05 1079.50M112.91 1071.44L104.97 1074.49M111.25 1066.76L103.17 1069.38M109.84 1061.99L101.63 1064.19M108.68 1057.15L100.36 1058.92M107.77 1052.26L99.37 1053.59M107.12 1047.33L98.67 1048.22M106.73 1042.37L98.24 1042.82M110.60 1037.40L98.60 1037.40M106.73 1032.43L98.24 1031.98M107.12 1027.47L98.67 1026.58M107.77 1022.54L99.37 1021.21M108.68 1017.65L100.36 1015.88M109.84 1012.81L101.63 1010.61M111.25 1008.04L103.17 1005.42M112.91 1003.36L104.97 1000.31M114.81 998.76L107.05 995.30M116.95 994.27L109.38 990.41M122.79 991.90L112.40 985.90M121.93 985.66L114.80 981.03M124.74 981.56L117.87 976.56M127.77 977.61L121.17 972.27M131.00 973.83L124.68 968.14M134.42 970.22L128.41 964.21M138.03 966.80L132.34 960.48M141.81 963.57L136.47 956.97M145.76 960.54L140.76 953.67M149.86 957.73L145.23 950.60M156.10 958.59L150.10 948.20M158.47 952.75L154.61 945.18M162.96 950.61L159.50 942.85M167.56 948.71L164.51 940.77M172.24 947.05L169.62 938.97M177.01 945.64L174.81 937.43M181.85 944.48L180.08 936.16M186.74 943.57L185.41 935.17M191.67 942.92L190.78 934.47M196.63 942.53L196.18 934.04" stroke="#9a8a2e" stroke-width="1" fill="none" opacity="0.9"/><path d="M201.6 1037.4L186.2 955.3M201.6 1037.4L244.7 1107.3M129.4 1078.8L271.9 993.4" stroke="#8f8030" stroke-width="1" fill="none"/><text x="190.7" y="965.8" text-anchor="middle" font-family="Liberation Sans" font-size="9.8" font-weight="bold" fill="#dcc840" transform="translate(190.7 0) scale(0.72 1) translate(-190.7 0)">R</text><text x="254.4" y="971.3" text-anchor="middle" font-family="Liberation Sans" font-size="9.8" font-weight="bold" fill="#dcc840" transform="translate(254.4 0) scale(0.72 1) translate(-254.4 0)">Mg</text><text x="150" y="998.0999999999999" text-anchor="middle" font-family="Liberation Sans" font-size="9.8" font-weight="bold" fill="#dcc840" transform="translate(150 0) scale(0.72 1) translate(-150 0)">I</text><text x="258.4" y="1016.8" text-anchor="middle" font-family="Liberation Sans" font-size="9.8" font-weight="bold" fill="#dcc840" transform="translate(258.4 0) scale(0.72 1) translate(-258.4 0)">Q</text><text x="119.4" y="1040.3" text-anchor="middle" font-family="Liberation Sans" font-size="9.8" font-weight="bold" fill="#dcc840" transform="translate(119.4 0) scale(0.72 1) translate(-119.4 0)">Yl</text><text x="279.4" y="1040.8" text-anchor="middle" font-family="Liberation Sans" font-size="9.8" font-weight="bold" fill="#dcc840" transform="translate(279.4 0) scale(0.72 1) translate(-279.4 0)">B</text><text x="145.3" y="1062.8999999999999" text-anchor="middle" font-family="Liberation Sans" font-size="9.8" font-weight="bold" fill="#dcc840" transform="translate(145.3 0) scale(0.72 1) translate(-145.3 0)">-Q</text><text x="240" y="1091.1" text-anchor="middle" font-family="Liberation Sans" font-size="9.8" font-weight="bold" fill="#dcc840" transform="translate(240 0) scale(0.72 1) translate(-240 0)">-I</text><text x="146.3" y="1100.3" text-anchor="middle" font-family="Liberation Sans" font-size="9.8" font-weight="bold" fill="#dcc840" transform="translate(146.3 0) scale(0.72 1) translate(-146.3 0)">G</text><text x="201.6" y="1119.2" text-anchor="middle" font-family="Liberation Sans" font-size="9.8" font-weight="bold" fill="#dcc840" transform="translate(201.6 0) scale(0.72 1) translate(-201.6 0)">Cy</text><g fill="#0d3d4e"><circle cx="194.6" cy="996.1" r="4.4"/><circle cx="194.9" cy="997.5" r="4.0"/><circle cx="194.5" cy="999.0" r="4.1"/><circle cx="196.0" cy="999.7" r="3.7"/><circle cx="194.8" cy="1002.6" r="4.2"/><circle cx="194.9" cy="1004.5" r="4.5"/><circle cx="196.4" cy="1005.2" r="3.6"/><circle cx="195.3" cy="1006.6" r="3.5"/><circle cx="195.9" cy="1007.5" r="3.4"/><circle cx="196.4" cy="1007.9" r="4.3"/><circle cx="196.9" cy="1009.8" r="3.9"/><circle cx="197.4" cy="1010.9" r="3.7"/><circle cx="198.4" cy="1013.5" r="4.3"/><circle cx="198.2" cy="1013.6" r="3.7"/><circle cx="197.6" cy="1014.6" r="4.2"/><circle cx="198.2" cy="1017.7" r="3.8"/><circle cx="199.6" cy="1019.2" r="3.4"/><circle cx="198.4" cy="1020.8" r="3.9"/><circle cx="200.0" cy="1019.8" r="3.5"/><circle cx="199.6" cy="1022.1" r="3.7"/><circle cx="198.9" cy="1022.7" r="4.5"/><circle cx="200.6" cy="1023.8" r="3.7"/><circle cx="199.7" cy="1025.2" r="4.3"/><circle cx="200.2" cy="1027.8" r="3.9"/><circle cx="200.6" cy="1029.6" r="3.5"/><circle cx="201.9" cy="1029.9" r="3.9"/><circle cx="201.4" cy="1031.8" r="4.5"/><circle cx="202.9" cy="1033.4" r="4.4"/><circle cx="202.1" cy="1035.1" r="4.3"/><circle cx="209.6" cy="1012.2" r="3.9"/><circle cx="209.1" cy="1014.1" r="3.6"/><circle cx="209.7" cy="1015.7" r="2.9"/><circle cx="209.5" cy="1017.9" r="3.1"/><circle cx="210.9" cy="1019.0" r="3.3"/><circle cx="208.9" cy="1026.0" r="3.3"/><circle cx="210.2" cy="1024.9" r="2.8"/><circle cx="211.8" cy="1025.6" r="2.9"/><circle cx="164.4" cy="1026.0" r="4.2"/><circle cx="165.8" cy="1026.9" r="4.2"/><circle cx="168.1" cy="1026.3" r="3.3"/><circle cx="168.4" cy="1027.9" r="3.5"/><circle cx="171.1" cy="1027.0" r="4.1"/><circle cx="172.3" cy="1027.6" r="3.4"/><circle cx="174.0" cy="1027.6" r="3.5"/><circle cx="175.1" cy="1029.7" r="3.9"/><circle cx="174.6" cy="1029.8" r="3.4"/><circle cx="175.5" cy="1029.0" r="3.7"/><circle cx="177.0" cy="1029.2" r="3.6"/><circle cx="179.5" cy="1029.6" r="3.6"/><circle cx="181.6" cy="1031.7" r="3.9"/><circle cx="182.6" cy="1031.4" r="3.4"/><circle cx="182.7" cy="1030.7" r="4.2"/><circle cx="185.5" cy="1033.0" r="3.2"/><circle cx="186.8" cy="1032.5" r="4.0"/><circle cx="187.6" cy="1034.0" r="3.3"/><circle cx="188.1" cy="1033.5" r="4.2"/><circle cx="190.1" cy="1033.8" r="4.1"/><circle cx="192.0" cy="1033.5" r="4.0"/><circle cx="193.6" cy="1034.9" r="3.7"/><circle cx="195.0" cy="1035.3" r="3.8"/><circle cx="196.2" cy="1034.8" r="3.8"/><circle cx="197.8" cy="1034.6" r="3.9"/><circle cx="200.2" cy="1036.6" r="4.0"/><circle cx="200.6" cy="1036.7" r="3.8"/><circle cx="202.3" cy="1037.3" r="3.3"/><circle cx="204.5" cy="1036.1" r="3.9"/><circle cx="178.7" cy="1036.2" r="3.6"/><circle cx="180.3" cy="1037.2" r="3.8"/><circle cx="181.5" cy="1036.3" r="3.1"/><circle cx="183.9" cy="1037.0" r="3.0"/><circle cx="186.0" cy="1038.2" r="3.3"/><circle cx="187.6" cy="1037.8" r="3.5"/><circle cx="187.8" cy="1038.3" r="3.7"/><circle cx="190.9" cy="1039.5" r="3.2"/><circle cx="191.8" cy="1038.6" r="2.9"/><circle cx="193.3" cy="1040.0" r="3.7"/><circle cx="185.7" cy="1057.6" r="3.4"/><circle cx="186.0" cy="1055.6" r="3.4"/><circle cx="187.4" cy="1054.5" r="3.8"/><circle cx="189.3" cy="1053.3" r="4.0"/><circle cx="191.6" cy="1052.6" r="3.2"/><circle cx="191.1" cy="1052.4" r="3.1"/><circle cx="193.7" cy="1050.8" r="3.4"/><circle cx="195.2" cy="1048.7" r="3.2"/><circle cx="195.9" cy="1047.7" r="4.0"/><circle cx="187.5" cy="1044.0" r="3.1"/><circle cx="189.8" cy="1044.2" r="3.7"/><circle cx="191.4" cy="1044.5" r="4.1"/><circle cx="193.0" cy="1042.9" r="3.5"/><circle cx="193.5" cy="1042.2" r="3.5"/><circle cx="196.1" cy="1042.1" r="3.3"/><circle cx="196.9" cy="1042.8" r="3.6"/><circle cx="198.9" cy="1042.5" r="3.4"/><circle cx="212.6" cy="1052.1" r="3.1"/><circle cx="213.7" cy="1053.1" r="3.1"/><circle cx="213.5" cy="1054.2" r="4.0"/><circle cx="214.2" cy="1055.5" r="4.0"/><circle cx="215.8" cy="1057.5" r="3.5"/><circle cx="216.3" cy="1057.4" r="3.8"/><circle cx="216.6" cy="1058.3" r="3.8"/><circle cx="216.2" cy="1060.4" r="4.1"/><circle cx="218.6" cy="1061.3" r="3.9"/><circle cx="218.0" cy="1063.6" r="3.9"/><circle cx="218.9" cy="1063.6" r="3.5"/><circle cx="220.1" cy="1066.5" r="3.5"/><circle cx="221.8" cy="1051.9" r="3.0"/><circle cx="225.1" cy="1051.5" r="3.3"/><circle cx="226.8" cy="1052.4" r="3.1"/><circle cx="228.0" cy="1054.4" r="3.8"/><circle cx="200.4" cy="1040.9" r="4.2"/><circle cx="202.4" cy="1039.4" r="3.9"/><circle cx="203.1" cy="1040.1" r="4.5"/><circle cx="204.9" cy="1040.8" r="4.6"/><circle cx="206.3" cy="1040.6" r="4.1"/><circle cx="208.4" cy="1042.1" r="3.9"/><circle cx="209.9" cy="1042.5" r="4.2"/><circle cx="210.9" cy="1041.2" r="4.2"/><circle cx="212.3" cy="1042.2" r="3.7"/><circle cx="214.8" cy="1042.3" r="4.1"/><circle cx="216.0" cy="1042.7" r="4.2"/><circle cx="217.3" cy="1041.9" r="4.2"/><circle cx="218.3" cy="1044.0" r="4.7"/><circle cx="219.5" cy="1043.2" r="3.8"/><circle cx="201.7" cy="1043.1" r="4.5"/><circle cx="206.2" cy="1041.3" r="3.5"/><circle cx="202.4" cy="1037.0" r="3.4"/><circle cx="209.5" cy="1040.9" r="3.5"/><circle cx="210.5" cy="1045.4" r="3.7"/><circle cx="205.5" cy="1044.1" r="3.3"/><circle cx="209.3" cy="1040.2" r="3.9"/><circle cx="209.5" cy="1042.3" r="3.9"/><circle cx="205.9" cy="1041.9" r="3.8"/><circle cx="207.9" cy="1040.8" r="3.5"/><circle cx="205.0" cy="1038.0" r="3.9"/><circle cx="213.3" cy="1037.9" r="4.4"/><circle cx="210.3" cy="1045.7" r="4.3"/><circle cx="212.2" cy="1039.8" r="3.6"/><circle cx="211.5" cy="1040.3" r="4.6"/><circle cx="210.6" cy="1040.4" r="3.5"/><circle cx="209.1" cy="1039.4" r="3.3"/><circle cx="211.7" cy="1038.7" r="4.3"/><circle cx="212.4" cy="1042.8" r="4.2"/><circle cx="211.6" cy="1041.1" r="4.2"/><circle cx="218.0" cy="1037.7" r="3.4"/><circle cx="201.6" cy="1040.8" r="3.9"/><circle cx="216.0" cy="1006.0" r="4.6"/><circle cx="170.0" cy="1034.7" r="4.4"/><circle cx="165.3" cy="1024.7" r="5.2"/><circle cx="195.0" cy="996.0" r="5.0"/></g><g fill="#3ff0f6"><circle cx="194.6" cy="996.1" r="3.2"/><circle cx="194.9" cy="997.5" r="2.8"/><circle cx="194.5" cy="999.0" r="2.9"/><circle cx="196.0" cy="999.7" r="2.5"/><circle cx="194.8" cy="1002.6" r="3.0"/><circle cx="194.9" cy="1004.5" r="3.3"/><circle cx="196.4" cy="1005.2" r="2.4"/><circle cx="195.3" cy="1006.6" r="2.3"/><circle cx="195.9" cy="1007.5" r="2.2"/><circle cx="196.4" cy="1007.9" r="3.1"/><circle cx="196.9" cy="1009.8" r="2.7"/><circle cx="197.4" cy="1010.9" r="2.5"/><circle cx="198.4" cy="1013.5" r="3.1"/><circle cx="198.2" cy="1013.6" r="2.5"/><circle cx="197.6" cy="1014.6" r="3.0"/><circle cx="198.2" cy="1017.7" r="2.6"/><circle cx="199.6" cy="1019.2" r="2.2"/><circle cx="198.4" cy="1020.8" r="2.7"/><circle cx="200.0" cy="1019.8" r="2.3"/><circle cx="199.6" cy="1022.1" r="2.5"/><circle cx="198.9" cy="1022.7" r="3.3"/><circle cx="200.6" cy="1023.8" r="2.5"/><circle cx="199.7" cy="1025.2" r="3.1"/><circle cx="200.2" cy="1027.8" r="2.7"/><circle cx="200.6" cy="1029.6" r="2.3"/><circle cx="201.9" cy="1029.9" r="2.7"/><circle cx="201.4" cy="1031.8" r="3.3"/><circle cx="202.9" cy="1033.4" r="3.2"/><circle cx="202.1" cy="1035.1" r="3.1"/><circle cx="209.6" cy="1012.2" r="2.7"/><circle cx="209.1" cy="1014.1" r="2.4"/><circle cx="209.7" cy="1015.7" r="1.7"/><circle cx="209.5" cy="1017.9" r="1.9"/><circle cx="210.9" cy="1019.0" r="2.1"/><circle cx="208.9" cy="1026.0" r="2.1"/><circle cx="210.2" cy="1024.9" r="1.6"/><circle cx="211.8" cy="1025.6" r="1.7"/><circle cx="164.4" cy="1026.0" r="3.0"/><circle cx="165.8" cy="1026.9" r="3.0"/><circle cx="168.1" cy="1026.3" r="2.1"/><circle cx="168.4" cy="1027.9" r="2.3"/><circle cx="171.1" cy="1027.0" r="2.9"/><circle cx="172.3" cy="1027.6" r="2.2"/><circle cx="174.0" cy="1027.6" r="2.3"/><circle cx="175.1" cy="1029.7" r="2.7"/><circle cx="174.6" cy="1029.8" r="2.2"/><circle cx="175.5" cy="1029.0" r="2.5"/><circle cx="177.0" cy="1029.2" r="2.4"/><circle cx="179.5" cy="1029.6" r="2.4"/><circle cx="181.6" cy="1031.7" r="2.7"/><circle cx="182.6" cy="1031.4" r="2.2"/><circle cx="182.7" cy="1030.7" r="3.0"/><circle cx="185.5" cy="1033.0" r="2.0"/><circle cx="186.8" cy="1032.5" r="2.8"/><circle cx="187.6" cy="1034.0" r="2.1"/><circle cx="188.1" cy="1033.5" r="3.0"/><circle cx="190.1" cy="1033.8" r="2.9"/><circle cx="192.0" cy="1033.5" r="2.8"/><circle cx="193.6" cy="1034.9" r="2.5"/><circle cx="195.0" cy="1035.3" r="2.6"/><circle cx="196.2" cy="1034.8" r="2.6"/><circle cx="197.8" cy="1034.6" r="2.7"/><circle cx="200.2" cy="1036.6" r="2.8"/><circle cx="200.6" cy="1036.7" r="2.6"/><circle cx="202.3" cy="1037.3" r="2.1"/><circle cx="204.5" cy="1036.1" r="2.7"/><circle cx="178.7" cy="1036.2" r="2.4"/><circle cx="180.3" cy="1037.2" r="2.6"/><circle cx="181.5" cy="1036.3" r="1.9"/><circle cx="183.9" cy="1037.0" r="1.8"/><circle cx="186.0" cy="1038.2" r="2.1"/><circle cx="187.6" cy="1037.8" r="2.3"/><circle cx="187.8" cy="1038.3" r="2.5"/><circle cx="190.9" cy="1039.5" r="2.0"/><circle cx="191.8" cy="1038.6" r="1.7"/><circle cx="193.3" cy="1040.0" r="2.5"/><circle cx="185.7" cy="1057.6" r="2.2"/><circle cx="186.0" cy="1055.6" r="2.2"/><circle cx="187.4" cy="1054.5" r="2.6"/><circle cx="189.3" cy="1053.3" r="2.8"/><circle cx="191.6" cy="1052.6" r="2.0"/><circle cx="191.1" cy="1052.4" r="1.9"/><circle cx="193.7" cy="1050.8" r="2.2"/><circle cx="195.2" cy="1048.7" r="2.0"/><circle cx="195.9" cy="1047.7" r="2.8"/><circle cx="187.5" cy="1044.0" r="1.9"/><circle cx="189.8" cy="1044.2" r="2.5"/><circle cx="191.4" cy="1044.5" r="2.9"/><circle cx="193.0" cy="1042.9" r="2.3"/><circle cx="193.5" cy="1042.2" r="2.3"/><circle cx="196.1" cy="1042.1" r="2.1"/><circle cx="196.9" cy="1042.8" r="2.4"/><circle cx="198.9" cy="1042.5" r="2.2"/><circle cx="212.6" cy="1052.1" r="1.9"/><circle cx="213.7" cy="1053.1" r="1.9"/><circle cx="213.5" cy="1054.2" r="2.8"/><circle cx="214.2" cy="1055.5" r="2.8"/><circle cx="215.8" cy="1057.5" r="2.3"/><circle cx="216.3" cy="1057.4" r="2.6"/><circle cx="216.6" cy="1058.3" r="2.6"/><circle cx="216.2" cy="1060.4" r="2.9"/><circle cx="218.6" cy="1061.3" r="2.7"/><circle cx="218.0" cy="1063.6" r="2.7"/><circle cx="218.9" cy="1063.6" r="2.3"/><circle cx="220.1" cy="1066.5" r="2.3"/><circle cx="221.8" cy="1051.9" r="1.8"/><circle cx="225.1" cy="1051.5" r="2.1"/><circle cx="226.8" cy="1052.4" r="1.9"/><circle cx="228.0" cy="1054.4" r="2.6"/><circle cx="200.4" cy="1040.9" r="3.0"/><circle cx="202.4" cy="1039.4" r="2.7"/><circle cx="203.1" cy="1040.1" r="3.3"/><circle cx="204.9" cy="1040.8" r="3.4"/><circle cx="206.3" cy="1040.6" r="2.9"/><circle cx="208.4" cy="1042.1" r="2.7"/><circle cx="209.9" cy="1042.5" r="3.0"/><circle cx="210.9" cy="1041.2" r="3.0"/><circle cx="212.3" cy="1042.2" r="2.5"/><circle cx="214.8" cy="1042.3" r="2.9"/><circle cx="216.0" cy="1042.7" r="3.0"/><circle cx="217.3" cy="1041.9" r="3.0"/><circle cx="218.3" cy="1044.0" r="3.5"/><circle cx="219.5" cy="1043.2" r="2.6"/><circle cx="201.7" cy="1043.1" r="3.3"/><circle cx="206.2" cy="1041.3" r="2.3"/><circle cx="202.4" cy="1037.0" r="2.2"/><circle cx="209.5" cy="1040.9" r="2.3"/><circle cx="210.5" cy="1045.4" r="2.5"/><circle cx="205.5" cy="1044.1" r="2.1"/><circle cx="209.3" cy="1040.2" r="2.7"/><circle cx="209.5" cy="1042.3" r="2.7"/><circle cx="205.9" cy="1041.9" r="2.6"/><circle cx="207.9" cy="1040.8" r="2.3"/><circle cx="205.0" cy="1038.0" r="2.7"/><circle cx="213.3" cy="1037.9" r="3.2"/><circle cx="210.3" cy="1045.7" r="3.1"/><circle cx="212.2" cy="1039.8" r="2.4"/><circle cx="211.5" cy="1040.3" r="3.4"/><circle cx="210.6" cy="1040.4" r="2.3"/><circle cx="209.1" cy="1039.4" r="2.1"/><circle cx="211.7" cy="1038.7" r="3.1"/><circle cx="212.4" cy="1042.8" r="3.0"/><circle cx="211.6" cy="1041.1" r="3.0"/><circle cx="218.0" cy="1037.7" r="2.2"/><circle cx="201.6" cy="1040.8" r="2.7"/><circle cx="216.0" cy="1006.0" r="3.4"/><circle cx="170.0" cy="1034.7" r="3.2"/><circle cx="165.3" cy="1024.7" r="4.0"/><circle cx="195.0" cy="996.0" r="3.8"/></g></svg><svg style="left:392px;top:905px" width="744" height="264" viewBox="392 905 744 264"><text x="398.5" y="920.3" font-family="Liberation Sans" font-size="11" fill="#9c9c9c" transform="translate(398.5 0) scale(0.92 1) translate(-398.5 0)">100</text><text x="398.5" y="977.6" font-family="Liberation Sans" font-size="11" fill="#9c9c9c" transform="translate(398.5 0) scale(0.92 1) translate(-398.5 0)">75</text><text x="398.5" y="1033" font-family="Liberation Sans" font-size="11" fill="#9c9c9c" transform="translate(398.5 0) scale(0.92 1) translate(-398.5 0)">50</text><text x="398.5" y="1090.5" font-family="Liberation Sans" font-size="11" fill="#9c9c9c" transform="translate(398.5 0) scale(0.92 1) translate(-398.5 0)">25</text><text x="398.5" y="1146" font-family="Liberation Sans" font-size="11" fill="#9c9c9c" transform="translate(398.5 0) scale(0.92 1) translate(-398.5 0)">0</text><path d="M449 980H1119M449 1036.5H1119M449 1093H1119" stroke="#3a3a3a" stroke-width="2"/><rect x="449" y="923" width="670" height="226" fill="none" stroke="#474747" stroke-width="2"/><path d="M459.0 1065.9L506.5 1062.6L554.0 1062.8M459.0 1058.4L506.5 1056.3L554.0 1053.8M459.0 1063.7L506.5 1062.6L554.0 1064.4M459.0 1059.4L506.5 1059.3L554.0 1056.4M459.0 1090.9L506.5 1091.4L554.0 1095.1M459.0 1078.8L506.5 1080.9L554.0 1083.3M459.0 1087.9L506.5 1086.9L554.0 1086.2M459.0 1084.7L506.5 1084.8L554.0 1084.0M459.0 1107.6L506.5 1110.0L554.0 1109.6M459.0 1109.8L506.5 1110.5L554.0 1109.3M459.0 1112.7L506.5 1109.8L554.0 1109.6M459.0 1114.1L506.5 1113.2L554.0 1109.2M457.0 1057.0V1117.4M556.0 1058.0V1117.4M571.0 1072.4L578.5 1074.9L586.0 1074.5M571.0 1070.2L578.5 1070.1L586.0 1069.2M571.0 1068.6L578.5 1072.2L586.0 1073.4M571.0 1065.4L578.5 1068.4L586.0 1069.5M571.0 1083.1L578.5 1084.3L586.0 1086.3M571.0 1084.7L578.5 1087.3L586.0 1088.5M571.0 1083.0L578.5 1083.9L586.0 1085.6M571.0 1082.4L578.5 1079.6L586.0 1078.1M571.0 1086.1L578.5 1083.1L586.0 1081.2M571.0 1088.3L578.5 1087.9L586.0 1089.5M571.0 1092.3L578.5 1092.5L586.0 1093.9M571.0 1088.6L578.5 1089.1L586.0 1089.3M569.0 1062.0V1117.4M588.0 1063.0V1117.4M590.6 1009.5L626.8 1012.5L663.0 1014.5M590.6 1013.5L626.8 1016.7L663.0 1016.1M590.6 1004.7L626.8 1006.2L663.0 1005.9M590.6 1007.7L626.8 1005.4L663.0 1006.8M590.6 1031.1L626.8 1028.9L663.0 1029.9M590.6 1031.9L626.8 1034.1L663.0 1035.9M590.6 1035.2L626.8 1037.8L663.0 1039.9M590.6 1041.5L626.8 1043.5L663.0 1042.9M590.6 1060.0L626.8 1061.5L663.0 1061.0M590.6 1059.6L626.8 1060.4L663.0 1063.9M590.6 1065.1L626.8 1063.5L663.0 1061.8M590.6 1066.9L626.8 1066.5L663.0 1062.5M590.6 1104.2L626.8 1104.7L663.0 1104.4M590.6 1103.5L626.8 1103.0L663.0 1101.3M590.6 1106.0L626.8 1105.8L663.0 1103.8M590.6 1102.5L626.8 1099.1L663.0 1097.7M588.6 1004.4V1134.5M665.0 1005.4V1134.5M681.7 1023.2L726.8 1022.5L771.9 1019.7M681.7 1027.7L726.8 1030.7L771.9 1031.6M681.7 1023.3L726.8 1027.5L771.9 1028.1M681.7 1023.6L726.8 1025.3L771.9 1027.6M681.7 1076.0L726.8 1077.3L771.9 1080.7M681.7 1076.6L726.8 1079.7L771.9 1081.0M681.7 1075.9L726.8 1079.5L771.9 1080.7M681.7 1077.6L726.8 1076.2L771.9 1073.8M681.7 1088.7L726.8 1085.5L771.9 1085.8M681.7 1089.7L726.8 1087.6L771.9 1085.9M681.7 1091.5L726.8 1090.3L771.9 1091.0M681.7 1090.4L726.8 1091.1L771.9 1089.6M681.7 1116.6L726.8 1120.9L771.9 1121.6M681.7 1119.2L726.8 1116.4L771.9 1116.6M681.7 1121.3L726.8 1123.2L771.9 1124.1M681.7 1114.4L726.8 1114.0L771.9 1112.1M679.7 1022.6V1134.5M773.9 1023.6V1134.5M791.7 1018.1L836.9 1019.1L882.0 1019.1M791.7 1020.6L836.9 1018.0L882.0 1017.5M791.7 1023.5L836.9 1027.1L882.0 1027.7M791.7 1011.3L836.9 1008.2L882.0 1006.9M791.7 1067.7L836.9 1066.8L882.0 1069.0M791.7 1069.2L836.9 1065.4L882.0 1065.0M791.7 1071.0L836.9 1071.8L882.0 1071.5M791.7 1067.1L836.9 1065.8L882.0 1066.8M791.7 1094.5L836.9 1097.0L882.0 1096.9M791.7 1091.0L836.9 1090.3L882.0 1087.2M791.7 1098.1L836.9 1098.3L882.0 1100.8M791.7 1095.5L836.9 1095.5L882.0 1093.1M791.7 1129.2L836.9 1131.9L882.0 1130.7M791.7 1128.6L836.9 1129.9L882.0 1129.1M791.7 1136.4L836.9 1135.5L882.0 1135.6M791.7 1125.7L836.9 1125.9L882.0 1129.4M789.7 1010.8V1134.5M884.0 1011.8V1134.5M901.4 1022.6L947.1 1022.8L992.8 1023.2M901.4 1030.4L947.1 1030.5L992.8 1028.4M901.4 1022.5L947.1 1021.7L992.8 1019.6M901.4 1022.6L947.1 1022.5L992.8 1020.6M901.4 1061.3L947.1 1058.8L992.8 1059.2M901.4 1057.0L947.1 1057.5L992.8 1059.2M901.4 1053.8L947.1 1055.1L992.8 1055.9M901.4 1064.2L947.1 1068.1L992.8 1068.6M901.4 1082.6L947.1 1083.3L992.8 1085.6M901.4 1081.0L947.1 1082.3L992.8 1080.0M901.4 1088.5L947.1 1086.7L992.8 1086.0M901.4 1081.7L947.1 1080.6L992.8 1080.3M901.4 1118.3L947.1 1117.1L992.8 1115.3M901.4 1123.7L947.1 1125.2L992.8 1124.1M901.4 1120.6L947.1 1120.0L992.8 1117.4M901.4 1124.8L947.1 1121.7L992.8 1122.6M899.4 1021.5V1134.5M994.8 1022.5V1134.5M1010.7 1026.2L1057.6 1026.7L1104.4 1026.6M1010.7 1032.1L1057.6 1034.0L1104.4 1033.6M1010.7 1020.3L1057.6 1021.7L1104.4 1020.8M1010.7 1020.6L1057.6 1019.4L1104.4 1016.4M1010.7 1076.7L1057.6 1075.1L1104.4 1072.5M1010.7 1066.9L1057.6 1068.7L1104.4 1069.3M1010.7 1068.2L1057.6 1067.9L1104.4 1065.4M1010.7 1071.8L1057.6 1072.7L1104.4 1074.4M1008.7 1019.5V1134.5M1106.4 1020.5V1134.5" stroke="#2e3f2e" stroke-width="0.9" fill="none" opacity="0.85"/><path d="M457.0 1057.0Q457.0 1054.0 461.0 1054.0L552.0 1054.6Q556.0 1054.6 556.0 1058.0M457.0 1078.0Q457.0 1075.0 461.0 1075.0L552.0 1075.6Q556.0 1075.6 556.0 1079.0M457.0 1107.4Q457.0 1104.4 461.0 1104.4L552.0 1105.0Q556.0 1105.0 556.0 1108.4M569.0 1062.0Q569.0 1059.0 573.0 1059.0L584.0 1059.6Q588.0 1059.6 588.0 1063.0M569.0 1073.0Q569.0 1070.0 573.0 1070.0L584.0 1070.6Q588.0 1070.6 588.0 1074.0M569.0 1080.0Q569.0 1077.0 573.0 1077.0L584.0 1077.6Q588.0 1077.6 588.0 1081.0M588.6 1004.4Q588.6 1001.4 592.6 1001.4L661.0 1002.0Q665.0 1002.0 665.0 1005.4M588.6 1028.6Q588.6 1025.6 592.6 1025.6L661.0 1026.2Q665.0 1026.2 665.0 1029.6M588.6 1059.0Q588.6 1056.0 592.6 1056.0L661.0 1056.6Q665.0 1056.6 665.0 1060.0M588.6 1098.7Q588.6 1095.7 592.6 1095.7L661.0 1096.3Q665.0 1096.3 665.0 1099.7M679.7 1022.6Q679.7 1019.6 683.7 1019.6L769.9 1020.2Q773.9 1020.2 773.9 1023.6M679.7 1069.8Q679.7 1066.8 683.7 1066.8L769.9 1067.4Q773.9 1067.4 773.9 1070.8M679.7 1082.8Q679.7 1079.8 683.7 1079.8L769.9 1080.4Q773.9 1080.4 773.9 1083.8M679.7 1109.7Q679.7 1106.7 683.7 1106.7L769.9 1107.3Q773.9 1107.3 773.9 1110.7M789.7 1010.8Q789.7 1007.8 793.7 1007.8L880.0 1008.4Q884.0 1008.4 884.0 1011.8M789.7 1062.2Q789.7 1059.2 793.7 1059.2L880.0 1059.8Q884.0 1059.8 884.0 1063.2M789.7 1090.0Q789.7 1087.0 793.7 1087.0L880.0 1087.6Q884.0 1087.6 884.0 1091.0M789.7 1124.4Q789.7 1121.4 793.7 1121.4L880.0 1122.0Q884.0 1122.0 884.0 1125.4M899.4 1021.5Q899.4 1018.5 903.4 1018.5L990.8 1019.1Q994.8 1019.1 994.8 1022.5M899.4 1052.3Q899.4 1049.3 903.4 1049.3L990.8 1049.9Q994.8 1049.9 994.8 1053.3M899.4 1076.9Q899.4 1073.9 903.4 1073.9L990.8 1074.5Q994.8 1074.5 994.8 1077.9M899.4 1113.3Q899.4 1110.3 903.4 1110.3L990.8 1110.9Q994.8 1110.9 994.8 1114.3M1008.7 1019.5Q1008.7 1016.5 1012.7 1016.5L1102.4 1017.1Q1106.4 1017.1 1106.4 1020.5M1008.7 1065.0Q1008.7 1062.0 1012.7 1062.0L1102.4 1062.6Q1106.4 1062.6 1106.4 1066.0" stroke="#3cf23c" stroke-width="2.2" fill="none"/><path d="M450.5 1117.4H588M588.6 1134.5H1118" stroke="#3cf23c" stroke-width="2.6" fill="none"/></svg><svg style="left:1139px;top:904px" width="374" height="265" viewBox="1139 904 374 265"><rect x="1141.5" y="906.5" width="369" height="261" fill="#0c0c0c" stroke="#3c3c3c" stroke-width="1"/><path d="M1142.0 1166.5L1143.0 1166.5L1144.0 1166.5L1145.0 1166.5L1146.0 1166.5L1147.0 1166.5L1148.0 1166.5L1149.0 1166.5L1150.0 1166.5L1151.0 1166.5L1152.0 1166.5L1153.0 1166.5L1154.0 1166.3L1155.0 1165.4L1156.0 1161.4L1157.0 1148.2L1158.0 1115.4L1159.0 1055.7L1160.0 979.2L1161.0 919.9L1162.0 913.6L1163.0 964.6L1164.0 1040.9L1165.0 1105.7L1166.0 1143.6L1167.0 1159.8L1168.0 1165.0L1169.0 1166.2L1170.0 1166.5L1171.0 1166.5L1172.0 1166.5L1173.0 1166.4L1174.0 1166.3L1175.0 1165.7L1176.0 1164.3L1177.0 1161.2L1178.0 1155.5L1179.0 1147.3L1180.0 1137.8L1181.0 1130.0L1182.0 1127.0L1183.0 1130.0L1184.0 1137.8L1185.0 1147.3L1186.0 1155.5L1187.0 1161.2L1188.0 1164.3L1189.0 1164.1L1190.0 1161.0L1191.0 1156.0L1192.0 1149.2L1193.0 1142.3L1194.0 1137.6L1195.0 1137.2L1196.0 1141.1L1197.0 1147.8L1198.0 1154.7L1199.0 1160.2L1200.0 1163.6L1201.0 1165.4L1202.0 1166.1L1203.0 1165.5L1204.0 1163.7L1205.0 1160.1L1206.0 1153.7L1207.0 1144.8L1208.0 1135.1L1209.0 1127.8L1210.0 1125.9L1211.0 1130.2L1212.0 1138.9L1213.0 1148.6L1214.0 1156.6L1215.0 1161.8L1216.0 1164.6L1217.0 1165.9L1218.0 1165.6L1219.0 1164.0L1220.0 1160.5L1221.0 1154.4L1222.0 1145.7L1223.0 1136.0L1224.0 1128.4L1225.0 1125.8L1226.0 1129.6L1227.0 1137.9L1228.0 1147.6L1229.0 1155.9L1230.0 1161.4L1231.0 1164.4L1232.0 1165.8L1233.0 1166.3L1234.0 1166.4L1235.0 1166.5L1236.0 1166.5L1237.0 1166.5L1238.0 1166.5L1239.0 1166.5L1240.0 1166.5L1241.0 1166.5L1242.0 1166.5L1243.0 1166.5L1244.0 1166.5L1245.0 1166.5L1246.0 1166.5L1247.0 1166.5L1248.0 1166.5L1249.0 1166.5L1250.0 1166.5L1251.0 1166.5L1252.0 1166.5L1253.0 1166.5L1254.0 1166.5L1255.0 1166.5L1256.0 1166.5L1257.0 1166.5L1258.0 1166.5L1259.0 1166.5L1260.0 1166.5L1261.0 1166.5L1262.0 1166.5L1263.0 1166.5L1264.0 1166.5L1265.0 1166.5L1266.0 1166.5L1267.0 1166.5L1268.0 1166.5L1269.0 1166.5L1270.0 1166.4L1271.0 1166.1L1272.0 1165.2L1273.0 1163.1L1274.0 1159.0L1275.0 1152.2L1276.0 1143.5L1277.0 1134.8L1278.0 1129.3L1279.0 1129.3L1280.0 1134.8L1281.0 1143.5L1282.0 1152.2L1283.0 1159.0L1284.0 1163.1L1285.0 1165.2L1286.0 1166.1L1287.0 1166.4L1288.0 1166.1L1289.0 1165.0L1290.0 1161.9L1291.0 1154.7L1292.0 1142.2L1293.0 1125.8L1294.0 1111.0L1295.0 1105.0L1296.0 1111.0L1297.0 1125.8L1298.0 1142.2L1299.0 1154.7L1300.0 1161.9L1301.0 1165.0L1302.0 1166.1L1303.0 1166.4L1304.0 1166.5L1305.0 1166.5L1306.0 1166.5L1307.0 1166.5L1308.0 1166.5L1309.0 1166.5L1310.0 1166.5L1311.0 1166.5L1312.0 1166.5L1313.0 1166.5L1314.0 1166.5L1315.0 1166.5L1316.0 1166.5L1317.0 1166.5L1318.0 1166.5L1319.0 1166.5L1320.0 1166.5L1321.0 1166.4L1322.0 1166.1L1323.0 1165.4L1324.0 1163.8L1325.0 1160.9L1326.0 1156.7L1327.0 1151.9L1328.0 1147.9L1329.0 1146.4L1330.0 1147.9L1331.0 1151.9L1332.0 1156.7L1333.0 1160.9L1334.0 1163.8L1335.0 1165.4L1336.0 1166.1L1337.0 1166.4L1338.0 1166.5L1339.0 1166.5L1340.0 1166.5L1341.0 1166.5L1342.0 1166.5L1343.0 1166.5L1344.0 1166.5L1345.0 1166.5L1346.0 1166.5L1347.0 1166.5L1348.0 1166.5L1349.0 1166.5L1350.0 1166.5L1351.0 1166.5L1352.0 1166.5L1353.0 1166.5L1354.0 1166.5L1355.0 1166.5L1356.0 1166.5L1357.0 1166.5L1358.0 1166.5L1359.0 1166.5L1360.0 1166.5L1361.0 1166.5L1362.0 1166.5L1363.0 1166.5L1364.0 1166.5L1365.0 1166.5L1366.0 1166.5L1367.0 1166.5L1368.0 1166.5L1369.0 1166.5L1370.0 1166.5L1371.0 1166.5L1372.0 1166.5L1373.0 1166.5L1374.0 1166.5L1375.0 1166.5L1376.0 1166.5L1377.0 1166.5L1378.0 1166.5L1379.0 1166.5L1380.0 1166.5L1381.0 1166.4L1382.0 1166.1L1383.0 1165.2L1384.0 1163.0L1385.0 1158.5L1386.0 1151.6L1387.0 1143.9L1388.0 1138.7L1389.0 1138.7L1390.0 1143.9L1391.0 1151.6L1392.0 1158.5L1393.0 1157.6L1394.0 1148.9L1395.0 1138.2L1396.0 1129.5L1397.0 1127.2L1398.0 1132.5L1399.0 1142.5L1400.0 1152.8L1401.0 1155.5L1402.0 1143.9L1403.0 1128.7L1404.0 1114.9L1405.0 1109.3L1406.0 1114.9L1407.0 1128.7L1408.0 1143.9L1409.0 1155.5L1410.0 1162.2L1411.0 1165.1L1412.0 1166.1L1413.0 1166.4L1414.0 1166.5L1415.0 1166.5L1416.0 1166.5L1417.0 1166.5L1418.0 1166.5L1419.0 1166.5L1420.0 1166.5L1421.0 1166.5L1422.0 1166.5L1423.0 1166.5L1424.0 1166.5L1425.0 1166.5L1426.0 1166.5L1427.0 1166.5L1428.0 1166.5L1429.0 1166.5L1430.0 1166.5L1431.0 1166.5L1432.0 1166.5L1433.0 1166.5L1434.0 1166.5L1435.0 1166.5L1436.0 1166.5L1437.0 1166.5L1438.0 1166.5L1439.0 1166.5L1440.0 1166.5L1441.0 1166.5L1442.0 1166.5L1443.0 1166.5L1444.0 1166.5L1445.0 1166.5L1446.0 1166.5L1447.0 1166.5L1448.0 1166.5L1449.0 1166.5L1450.0 1166.5L1451.0 1166.5L1452.0 1166.5L1453.0 1166.5L1454.0 1166.5L1455.0 1166.5L1456.0 1166.5L1457.0 1166.5L1458.0 1166.5L1459.0 1166.5L1460.0 1166.5L1461.0 1166.5L1462.0 1166.5L1463.0 1166.5L1464.0 1166.5L1465.0 1166.5L1466.0 1166.5L1467.0 1166.5L1468.0 1166.5L1469.0 1166.5L1470.0 1166.5L1471.0 1166.5L1472.0 1166.5L1473.0 1166.5L1474.0 1166.5L1475.0 1166.5L1476.0 1166.5L1477.0 1166.5L1478.0 1166.5L1479.0 1166.5L1480.0 1166.5L1481.0 1166.5L1482.0 1166.5L1483.0 1166.5L1484.0 1166.5L1485.0 1166.5L1486.0 1166.5L1487.0 1166.5L1488.0 1166.5L1489.0 1166.5L1490.0 1166.5L1491.0 1166.5L1492.0 1166.5L1493.0 1166.5L1494.0 1166.5L1495.0 1166.5L1496.0 1166.5L1497.0 1166.5L1498.0 1166.5L1499.0 1166.5L1500.0 1166.5L1501.0 1166.5L1502.0 1166.5L1503.0 1166.5L1504.0 1166.5L1505.0 1166.5L1506.0 1166.5L1507.0 1166.5L1508.0 1166.5L1509.0 1166.5L1510.0 1166.5" stroke="#e03c3c" stroke-width="1.8" fill="none" stroke-linejoin="round"/><path d="M1142.0 1166.5L1143.0 1166.5L1144.0 1166.5L1145.0 1166.5L1146.0 1166.5L1147.0 1166.5L1148.0 1166.5L1149.0 1166.5L1150.0 1166.5L1151.0 1166.5L1152.0 1166.5L1153.0 1166.5L1154.0 1166.5L1155.0 1166.5L1156.0 1166.4L1157.0 1165.9L1158.0 1163.6L1159.0 1155.0L1160.0 1131.2L1161.0 1081.9L1162.0 1008.4L1163.0 936.4L1164.0 905.8L1165.0 936.4L1166.0 1008.4L1167.0 1081.9L1168.0 1131.2L1169.0 1155.0L1170.0 1163.6L1171.0 1165.9L1172.0 1166.4L1173.0 1166.4L1174.0 1166.2L1175.0 1165.7L1176.0 1164.1L1177.0 1160.8L1178.0 1154.8L1179.0 1146.0L1180.0 1135.9L1181.0 1127.6L1182.0 1124.4L1183.0 1127.6L1184.0 1135.9L1185.0 1146.0L1186.0 1154.8L1187.0 1151.1L1188.0 1134.0L1189.0 1112.9L1190.0 1097.7L1191.0 1097.7L1192.0 1112.9L1193.0 1134.0L1194.0 1151.1L1195.0 1160.9L1196.0 1164.9L1197.0 1166.1L1198.0 1166.4L1199.0 1166.5L1200.0 1166.5L1201.0 1166.5L1202.0 1166.5L1203.0 1166.5L1204.0 1166.5L1205.0 1166.3L1206.0 1165.6L1207.0 1163.4L1208.0 1157.7L1209.0 1146.5L1210.0 1129.3L1211.0 1110.2L1212.0 1097.3L1213.0 1097.3L1214.0 1110.2L1215.0 1129.3L1216.0 1146.5L1217.0 1157.7L1218.0 1163.4L1219.0 1165.6L1220.0 1166.3L1221.0 1166.5L1222.0 1166.5L1223.0 1166.5L1224.0 1166.4L1225.0 1166.3L1226.0 1165.7L1227.0 1164.4L1228.0 1161.4L1229.0 1155.9L1230.0 1148.0L1231.0 1138.9L1232.0 1131.4L1233.0 1128.5L1234.0 1131.4L1235.0 1138.9L1236.0 1148.0L1237.0 1155.9L1238.0 1161.4L1239.0 1164.4L1240.0 1162.5L1241.0 1159.5L1242.0 1155.6L1243.0 1151.3L1244.0 1147.5L1245.0 1145.3L1246.0 1145.3L1247.0 1147.5L1248.0 1151.3L1249.0 1155.6L1250.0 1159.5L1251.0 1162.5L1252.0 1164.4L1253.0 1165.6L1254.0 1165.9L1255.0 1165.1L1256.0 1163.6L1257.0 1161.1L1258.0 1157.7L1259.0 1153.5L1260.0 1149.3L1261.0 1146.2L1262.0 1145.0L1263.0 1146.2L1264.0 1149.3L1265.0 1153.5L1266.0 1157.7L1267.0 1161.1L1268.0 1163.6L1269.0 1165.1L1270.0 1165.9L1271.0 1166.3L1272.0 1166.4L1273.0 1166.5L1274.0 1166.5L1275.0 1166.5L1276.0 1166.5L1277.0 1166.4L1278.0 1166.2L1279.0 1165.9L1280.0 1165.1L1281.0 1163.6L1282.0 1161.3L1283.0 1158.1L1284.0 1154.4L1285.0 1150.9L1286.0 1148.5L1287.0 1147.8L1288.0 1149.2L1289.0 1152.2L1290.0 1155.9L1291.0 1159.5L1292.0 1162.3L1293.0 1164.3L1294.0 1165.5L1295.0 1165.8L1296.0 1164.6L1297.0 1161.9L1298.0 1157.1L1299.0 1150.0L1300.0 1141.9L1301.0 1135.2L1302.0 1132.6L1303.0 1135.2L1304.0 1141.9L1305.0 1150.0L1306.0 1157.1L1307.0 1161.9L1308.0 1164.6L1309.0 1165.8L1310.0 1166.3L1311.0 1166.4L1312.0 1166.5L1313.0 1166.5L1314.0 1166.5L1315.0 1166.5L1316.0 1166.5L1317.0 1166.5L1318.0 1166.5L1319.0 1166.5L1320.0 1166.5L1321.0 1166.5L1322.0 1166.5L1323.0 1166.5L1324.0 1166.4L1325.0 1166.2L1326.0 1165.8L1327.0 1165.0L1328.0 1163.5L1329.0 1161.3L1330.0 1158.4L1331.0 1155.2L1332.0 1152.4L1333.0 1150.7L1334.0 1150.7L1335.0 1152.4L1336.0 1155.2L1337.0 1158.4L1338.0 1161.3L1339.0 1163.5L1340.0 1165.0L1341.0 1165.8L1342.0 1166.2L1343.0 1166.4L1344.0 1166.5L1345.0 1166.5L1346.0 1166.5L1347.0 1166.4L1348.0 1166.2L1349.0 1165.3L1350.0 1162.8L1351.0 1157.1L1352.0 1147.2L1353.0 1134.1L1354.0 1122.3L1355.0 1117.5L1356.0 1122.3L1357.0 1134.1L1358.0 1147.2L1359.0 1157.1L1360.0 1162.1L1361.0 1157.5L1362.0 1150.7L1363.0 1142.9L1364.0 1136.5L1365.0 1134.0L1366.0 1136.5L1367.0 1142.9L1368.0 1150.7L1369.0 1157.5L1370.0 1156.1L1371.0 1145.0L1372.0 1130.4L1373.0 1117.3L1374.0 1112.0L1375.0 1117.3L1376.0 1130.4L1377.0 1145.0L1378.0 1155.0L1379.0 1149.9L1380.0 1146.1L1381.0 1145.1L1382.0 1147.3L1383.0 1151.9L1384.0 1157.0L1385.0 1161.3L1386.0 1164.0L1387.0 1165.5L1388.0 1166.2L1389.0 1166.4L1390.0 1166.5L1391.0 1166.5L1392.0 1166.5L1393.0 1166.5L1394.0 1166.5L1395.0 1166.5L1396.0 1166.5L1397.0 1166.5L1398.0 1166.5L1399.0 1166.5L1400.0 1166.5L1401.0 1166.5L1402.0 1166.5L1403.0 1166.5L1404.0 1166.5L1405.0 1166.5L1406.0 1166.5L1407.0 1166.5L1408.0 1166.5L1409.0 1166.5L1410.0 1166.5L1411.0 1166.5L1412.0 1166.5L1413.0 1166.5L1414.0 1166.5L1415.0 1166.5L1416.0 1166.5L1417.0 1166.5L1418.0 1166.5L1419.0 1166.5L1420.0 1166.5L1421.0 1166.5L1422.0 1166.5L1423.0 1166.5L1424.0 1166.5L1425.0 1166.5L1426.0 1166.5L1427.0 1166.5L1428.0 1166.5L1429.0 1166.5L1430.0 1166.5L1431.0 1166.5L1432.0 1166.5L1433.0 1166.5L1434.0 1166.5L1435.0 1166.5L1436.0 1166.5L1437.0 1166.5L1438.0 1166.5L1439.0 1166.5L1440.0 1166.5L1441.0 1166.5L1442.0 1166.5L1443.0 1166.5L1444.0 1166.5L1445.0 1166.5L1446.0 1166.5L1447.0 1166.5L1448.0 1166.5L1449.0 1166.5L1450.0 1166.5L1451.0 1166.5L1452.0 1166.5L1453.0 1166.5L1454.0 1166.5L1455.0 1166.5L1456.0 1166.5L1457.0 1166.5L1458.0 1166.5L1459.0 1166.5L1460.0 1166.5L1461.0 1166.5L1462.0 1166.5L1463.0 1166.5L1464.0 1166.5L1465.0 1166.5L1466.0 1166.5L1467.0 1166.5L1468.0 1166.5L1469.0 1166.5L1470.0 1166.5L1471.0 1166.5L1472.0 1166.5L1473.0 1166.5L1474.0 1166.5L1475.0 1166.5L1476.0 1166.5L1477.0 1166.5L1478.0 1166.5L1479.0 1166.5L1480.0 1166.5L1481.0 1166.5L1482.0 1166.5L1483.0 1166.5L1484.0 1166.5L1485.0 1166.5L1486.0 1166.5L1487.0 1166.5L1488.0 1166.5L1489.0 1166.5L1490.0 1166.5L1491.0 1166.5L1492.0 1166.5L1493.0 1166.5L1494.0 1166.5L1495.0 1166.5L1496.0 1166.5L1497.0 1166.5L1498.0 1166.5L1499.0 1166.5L1500.0 1166.5L1501.0 1166.5L1502.0 1166.5L1503.0 1166.5L1504.0 1166.5L1505.0 1166.5L1506.0 1166.5L1507.0 1166.5L1508.0 1166.5L1509.0 1166.5L1510.0 1166.5" stroke="#3ee04a" stroke-width="1.8" fill="none" stroke-linejoin="round"/><path d="M1142.0 1166.5L1143.0 1166.5L1144.0 1166.5L1145.0 1166.5L1146.0 1166.5L1147.0 1166.5L1148.0 1166.5L1149.0 1166.5L1150.0 1166.5L1151.0 1166.5L1152.0 1166.5L1153.0 1166.5L1154.0 1166.5L1155.0 1166.5L1156.0 1166.5L1157.0 1166.4L1158.0 1166.0L1159.0 1164.2L1160.0 1158.4L1161.0 1142.7L1162.0 1109.7L1163.0 1056.5L1164.0 993.3L1165.0 944.5L1166.0 935.2L1167.0 970.4L1168.0 1031.3L1169.0 1090.7L1170.0 1131.9L1171.0 1153.7L1172.0 1162.6L1173.0 1165.6L1174.0 1166.3L1175.0 1166.5L1176.0 1166.5L1177.0 1166.5L1178.0 1166.5L1179.0 1166.5L1180.0 1166.5L1181.0 1166.3L1182.0 1165.8L1183.0 1164.1L1184.0 1159.8L1185.0 1150.8L1186.0 1136.7L1187.0 1120.4L1188.0 1108.7L1189.0 1107.5L1190.0 1117.5L1191.0 1133.4L1192.0 1148.3L1193.0 1158.4L1194.0 1163.5L1195.0 1165.6L1196.0 1164.8L1197.0 1161.8L1198.0 1155.8L1199.0 1146.6L1200.0 1136.4L1201.0 1129.5L1202.0 1129.5L1203.0 1136.4L1204.0 1146.6L1205.0 1155.8L1206.0 1161.8L1207.0 1164.8L1208.0 1166.0L1209.0 1166.4L1210.0 1166.5L1211.0 1166.5L1212.0 1166.5L1213.0 1166.5L1214.0 1166.5L1215.0 1166.5L1216.0 1166.5L1217.0 1166.4L1218.0 1166.1L1219.0 1164.9L1220.0 1161.7L1221.0 1154.6L1222.0 1142.5L1223.0 1127.1L1224.0 1113.9L1225.0 1109.4L1226.0 1116.0L1227.0 1130.2L1228.0 1145.3L1229.0 1156.4L1230.0 1162.6L1231.0 1165.1L1232.0 1162.1L1233.0 1155.3L1234.0 1143.4L1235.0 1127.8L1236.0 1113.7L1237.0 1108.0L1238.0 1113.7L1239.0 1127.8L1240.0 1143.4L1241.0 1155.3L1242.0 1162.1L1243.0 1162.9L1244.0 1156.8L1245.0 1145.2L1246.0 1128.6L1247.0 1111.5L1248.0 1101.6L1249.0 1104.2L1250.0 1117.9L1251.0 1135.7L1252.0 1150.6L1253.0 1159.8L1254.0 1164.2L1255.0 1164.7L1256.0 1163.3L1257.0 1161.4L1258.0 1159.3L1259.0 1157.4L1260.0 1156.2L1261.0 1156.1L1262.0 1157.1L1263.0 1158.9L1264.0 1161.0L1265.0 1162.9L1266.0 1164.4L1267.0 1165.4L1268.0 1166.0L1269.0 1166.3L1270.0 1166.4L1271.0 1166.5L1272.0 1166.5L1273.0 1166.5L1274.0 1166.5L1275.0 1166.5L1276.0 1166.5L1277.0 1166.5L1278.0 1166.5L1279.0 1166.5L1280.0 1166.5L1281.0 1166.5L1282.0 1166.5L1283.0 1166.5L1284.0 1166.5L1285.0 1166.5L1286.0 1166.5L1287.0 1166.4L1288.0 1166.1L1289.0 1165.0L1290.0 1162.0L1291.0 1155.0L1292.0 1142.8L1293.0 1126.8L1294.0 1112.4L1295.0 1106.5L1296.0 1112.4L1297.0 1126.8L1298.0 1142.8L1299.0 1155.0L1300.0 1162.0L1301.0 1165.0L1302.0 1165.7L1303.0 1164.6L1304.0 1162.6L1305.0 1159.4L1306.0 1154.8L1307.0 1149.2L1308.0 1143.7L1309.0 1139.5L1310.0 1138.0L1311.0 1139.5L1312.0 1143.7L1313.0 1149.2L1314.0 1154.8L1315.0 1159.4L1316.0 1160.0L1317.0 1157.1L1318.0 1154.4L1319.0 1152.5L1320.0 1152.0L1321.0 1153.1L1322.0 1155.4L1323.0 1158.3L1324.0 1161.1L1325.0 1163.3L1326.0 1164.8L1327.0 1165.7L1328.0 1166.0L1329.0 1165.4L1330.0 1164.3L1331.0 1162.5L1332.0 1159.9L1333.0 1156.8L1334.0 1153.7L1335.0 1151.4L1336.0 1150.5L1337.0 1151.4L1338.0 1153.7L1339.0 1156.8L1340.0 1159.9L1341.0 1162.5L1342.0 1164.3L1343.0 1165.4L1344.0 1166.0L1345.0 1166.3L1346.0 1166.3L1347.0 1165.9L1348.0 1164.7L1349.0 1162.1L1350.0 1157.5L1351.0 1150.7L1352.0 1142.9L1353.0 1136.5L1354.0 1134.0L1355.0 1136.5L1356.0 1142.9L1357.0 1150.7L1358.0 1157.5L1359.0 1154.7L1360.0 1147.8L1361.0 1141.1L1362.0 1137.2L1363.0 1137.6L1364.0 1142.3L1365.0 1149.2L1366.0 1156.0L1367.0 1161.0L1368.0 1164.1L1369.0 1165.6L1370.0 1166.2L1371.0 1166.4L1372.0 1166.4L1373.0 1166.1L1374.0 1165.3L1375.0 1163.6L1376.0 1160.5L1377.0 1156.0L1378.0 1150.9L1379.0 1146.7L1380.0 1145.0L1381.0 1146.7L1382.0 1150.9L1383.0 1156.0L1384.0 1160.5L1385.0 1163.6L1386.0 1165.3L1387.0 1166.1L1388.0 1166.4L1389.0 1166.5L1390.0 1166.5L1391.0 1166.5L1392.0 1166.5L1393.0 1166.5L1394.0 1166.5L1395.0 1166.5L1396.0 1166.5L1397.0 1166.5L1398.0 1166.5L1399.0 1166.5L1400.0 1166.5L1401.0 1166.5L1402.0 1166.5L1403.0 1166.5L1404.0 1166.5L1405.0 1166.5L1406.0 1166.5L1407.0 1166.5L1408.0 1166.5L1409.0 1166.5L1410.0 1166.5L1411.0 1166.5L1412.0 1166.5L1413.0 1166.5L1414.0 1166.5L1415.0 1166.5L1416.0 1166.5L1417.0 1166.5L1418.0 1166.5L1419.0 1166.5L1420.0 1166.5L1421.0 1166.5L1422.0 1166.5L1423.0 1166.5L1424.0 1166.5L1425.0 1166.5L1426.0 1166.5L1427.0 1166.5L1428.0 1166.5L1429.0 1166.5L1430.0 1166.5L1431.0 1166.5L1432.0 1166.5L1433.0 1166.5L1434.0 1166.5L1435.0 1166.5L1436.0 1166.5L1437.0 1166.5L1438.0 1166.5L1439.0 1166.5L1440.0 1166.5L1441.0 1166.5L1442.0 1166.5L1443.0 1166.5L1444.0 1166.5L1445.0 1166.5L1446.0 1166.5L1447.0 1166.5L1448.0 1166.5L1449.0 1166.5L1450.0 1166.5L1451.0 1166.5L1452.0 1166.5L1453.0 1166.5L1454.0 1166.5L1455.0 1166.5L1456.0 1166.5L1457.0 1166.5L1458.0 1166.5L1459.0 1166.5L1460.0 1166.5L1461.0 1166.5L1462.0 1166.5L1463.0 1166.5L1464.0 1166.5L1465.0 1166.5L1466.0 1166.5L1467.0 1166.5L1468.0 1166.5L1469.0 1166.5L1470.0 1166.5L1471.0 1166.5L1472.0 1166.5L1473.0 1166.5L1474.0 1166.5L1475.0 1166.5L1476.0 1166.5L1477.0 1166.5L1478.0 1166.5L1479.0 1166.5L1480.0 1166.5L1481.0 1166.5L1482.0 1166.5L1483.0 1166.5L1484.0 1166.5L1485.0 1166.5L1486.0 1166.5L1487.0 1166.5L1488.0 1166.5L1489.0 1166.5L1490.0 1166.5L1491.0 1166.5L1492.0 1166.5L1493.0 1166.5L1494.0 1166.5L1495.0 1166.5L1496.0 1166.5L1497.0 1166.5L1498.0 1166.5L1499.0 1166.5L1500.0 1166.5L1501.0 1166.5L1502.0 1166.5L1503.0 1166.5L1504.0 1166.5L1505.0 1166.5L1506.0 1166.5L1507.0 1166.5L1508.0 1166.5L1509.0 1166.5L1510.0 1166.5" stroke="#4a86e8" stroke-width="1.8" fill="none" stroke-linejoin="round"/><path d="M1142.0 1166.5L1143.0 1166.5L1144.0 1166.5L1145.0 1166.5L1146.0 1166.5L1147.0 1166.5L1148.0 1166.5L1149.0 1166.5L1150.0 1166.5L1151.0 1166.5L1152.0 1166.5L1153.0 1166.5L1154.0 1166.3L1155.0 1165.4L1156.0 1161.5L1157.0 1148.6L1158.0 1116.5L1159.0 1058.0L1160.0 983.1L1161.0 925.1L1162.0 919.0L1163.0 968.9L1164.0 1043.6L1165.0 1107.0L1166.0 1144.0L1167.0 1159.9L1168.0 1165.0L1169.0 1166.2L1170.0 1166.5L1171.0 1166.5L1172.0 1166.5L1173.0 1166.5L1174.0 1166.5L1175.0 1166.5L1176.0 1166.5L1177.0 1166.5L1178.0 1166.5L1179.0 1166.5L1180.0 1166.5L1181.0 1166.5L1182.0 1166.4L1183.0 1166.1L1184.0 1164.8L1185.0 1161.2L1186.0 1153.2L1187.0 1139.1L1188.0 1120.5L1189.0 1103.8L1190.0 1097.0L1191.0 1103.8L1192.0 1120.5L1193.0 1139.1L1194.0 1153.2L1195.0 1159.9L1196.0 1155.6L1197.0 1150.4L1198.0 1145.3L1199.0 1141.4L1200.0 1140.0L1201.0 1141.4L1202.0 1145.3L1203.0 1150.4L1204.0 1155.6L1205.0 1159.9L1206.0 1162.9L1207.0 1164.8L1208.0 1163.4L1209.0 1158.4L1210.0 1148.8L1211.0 1134.0L1212.0 1116.3L1213.0 1101.4L1214.0 1095.5L1215.0 1101.4L1216.0 1116.3L1217.0 1134.0L1218.0 1148.8L1219.0 1158.4L1220.0 1163.4L1221.0 1165.5L1222.0 1166.2L1223.0 1166.4L1224.0 1166.5L1225.0 1166.5L1226.0 1166.5L1227.0 1166.5L1228.0 1166.5L1229.0 1166.4L1230.0 1166.2L1231.0 1165.7L1232.0 1164.7L1233.0 1162.9L1234.0 1160.2L1235.0 1156.5L1236.0 1152.4L1237.0 1148.7L1238.0 1146.4L1239.0 1146.2L1240.0 1148.1L1241.0 1151.6L1242.0 1155.7L1243.0 1159.5L1244.0 1162.4L1245.0 1164.4L1246.0 1164.3L1247.0 1162.4L1248.0 1159.7L1249.0 1156.5L1250.0 1153.3L1251.0 1150.9L1252.0 1150.0L1253.0 1150.9L1254.0 1153.3L1255.0 1156.5L1256.0 1159.7L1257.0 1157.6L1258.0 1149.6L1259.0 1139.3L1260.0 1129.0L1261.0 1122.5L1262.0 1122.5L1263.0 1129.0L1264.0 1139.3L1265.0 1149.6L1266.0 1157.6L1267.0 1162.5L1268.0 1163.1L1269.0 1160.9L1270.0 1158.3L1271.0 1155.7L1272.0 1153.7L1273.0 1153.0L1274.0 1153.7L1275.0 1155.7L1276.0 1158.3L1277.0 1160.9L1278.0 1163.1L1279.0 1164.7L1280.0 1164.0L1281.0 1161.5L1282.0 1157.5L1283.0 1151.9L1284.0 1145.5L1285.0 1139.4L1286.0 1135.1L1287.0 1134.1L1288.0 1136.5L1289.0 1141.7L1290.0 1148.1L1291.0 1154.3L1292.0 1151.1L1293.0 1137.7L1294.0 1124.6L1295.0 1119.0L1296.0 1124.6L1297.0 1137.7L1298.0 1151.1L1299.0 1160.1L1300.0 1164.4L1301.0 1166.0L1302.0 1166.4L1303.0 1166.5L1304.0 1166.5L1305.0 1166.5L1306.0 1166.5L1307.0 1166.5L1308.0 1166.5L1309.0 1166.5L1310.0 1166.5L1311.0 1166.5L1312.0 1166.5L1313.0 1166.5L1314.0 1166.5L1315.0 1166.5L1316.0 1166.5L1317.0 1166.5L1318.0 1166.5L1319.0 1166.5L1320.0 1166.5L1321.0 1166.5L1322.0 1166.5L1323.0 1166.5L1324.0 1166.5L1325.0 1166.5L1326.0 1166.5L1327.0 1166.5L1328.0 1166.5L1329.0 1166.5L1330.0 1166.4L1331.0 1166.3L1332.0 1166.1L1333.0 1165.5L1334.0 1164.5L1335.0 1162.9L1336.0 1160.5L1337.0 1157.7L1338.0 1154.9L1339.0 1152.8L1340.0 1152.0L1341.0 1152.8L1342.0 1154.9L1343.0 1157.7L1344.0 1160.5L1345.0 1162.9L1346.0 1164.5L1347.0 1165.5L1348.0 1165.7L1349.0 1164.0L1350.0 1159.9L1351.0 1151.9L1352.0 1138.8L1353.0 1121.8L1354.0 1104.9L1355.0 1094.3L1356.0 1094.3L1357.0 1104.9L1358.0 1121.8L1359.0 1138.8L1360.0 1151.9L1361.0 1159.9L1362.0 1164.0L1363.0 1165.7L1364.0 1166.3L1365.0 1165.8L1366.0 1164.0L1367.0 1159.6L1368.0 1150.7L1369.0 1137.2L1370.0 1122.2L1371.0 1112.0L1372.0 1112.0L1373.0 1122.2L1374.0 1137.2L1375.0 1150.7L1376.0 1159.6L1377.0 1162.5L1378.0 1158.9L1379.0 1154.0L1380.0 1149.0L1381.0 1145.6L1382.0 1145.3L1383.0 1148.1L1384.0 1152.9L1385.0 1158.0L1386.0 1161.9L1387.0 1164.4L1388.0 1165.7L1389.0 1166.2L1390.0 1166.4L1391.0 1166.5L1392.0 1166.5L1393.0 1166.5L1394.0 1166.5L1395.0 1166.5L1396.0 1166.5L1397.0 1166.5L1398.0 1166.5L1399.0 1166.5L1400.0 1166.5L1401.0 1166.5L1402.0 1166.5L1403.0 1166.5L1404.0 1166.5L1405.0 1166.5L1406.0 1166.5L1407.0 1166.5L1408.0 1166.5L1409.0 1166.5L1410.0 1166.5L1411.0 1166.5L1412.0 1166.5L1413.0 1166.5L1414.0 1166.5L1415.0 1166.5L1416.0 1166.5L1417.0 1166.5L1418.0 1166.5L1419.0 1166.5L1420.0 1166.5L1421.0 1166.5L1422.0 1166.5L1423.0 1166.5L1424.0 1166.5L1425.0 1166.5L1426.0 1166.5L1427.0 1166.5L1428.0 1166.5L1429.0 1166.5L1430.0 1166.5L1431.0 1166.5L1432.0 1166.5L1433.0 1166.5L1434.0 1166.5L1435.0 1166.5L1436.0 1166.5L1437.0 1166.5L1438.0 1166.5L1439.0 1166.5L1440.0 1166.5L1441.0 1166.5L1442.0 1166.5L1443.0 1166.5L1444.0 1166.5L1445.0 1166.5L1446.0 1166.5L1447.0 1166.5L1448.0 1166.5L1449.0 1166.5L1450.0 1166.5L1451.0 1166.5L1452.0 1166.5L1453.0 1166.5L1454.0 1166.5L1455.0 1166.5L1456.0 1166.5L1457.0 1166.5L1458.0 1166.5L1459.0 1166.5L1460.0 1166.5L1461.0 1166.5L1462.0 1166.5L1463.0 1166.5L1464.0 1166.5L1465.0 1166.5L1466.0 1166.5L1467.0 1166.5L1468.0 1166.5L1469.0 1166.5L1470.0 1166.5L1471.0 1166.5L1472.0 1166.5L1473.0 1166.5L1474.0 1166.5L1475.0 1166.5L1476.0 1166.5L1477.0 1166.5L1478.0 1166.5L1479.0 1166.5L1480.0 1166.5L1481.0 1166.5L1482.0 1166.5L1483.0 1166.5L1484.0 1166.5L1485.0 1166.5L1486.0 1166.5L1487.0 1166.5L1488.0 1166.5L1489.0 1166.5L1490.0 1166.5L1491.0 1166.5L1492.0 1166.5L1493.0 1166.5L1494.0 1166.5L1495.0 1166.5L1496.0 1166.5L1497.0 1166.5L1498.0 1166.5L1499.0 1166.5L1500.0 1166.5L1501.0 1166.5L1502.0 1166.5L1503.0 1166.5L1504.0 1166.5L1505.0 1166.5L1506.0 1166.5L1507.0 1166.5L1508.0 1166.5L1509.0 1166.5L1510.0 1166.5" stroke="#dcdcdc" stroke-width="1.8" fill="none" stroke-linejoin="round"/><path d="M1141.5 1167H1510.5" stroke="#e8e8e8" stroke-width="1.6"/></svg>
<svg style="left:202px;top:76px" width="1123" height="745" viewBox="202 76 1123 745"><defs><clipPath id="cl"><rect x="202" y="76" width="236" height="745"/></clipPath><clipPath id="cr"><rect x="438" y="76" width="887" height="745"/></clipPath></defs><rect x="202" y="76" width="1123" height="745" fill="#101112"/><rect x="202" y="76" width="236" height="745" fill="#202020"/><polygon points="217.3,94 382.9,94.6 383.8,254.4 219,254.4" fill="#362c26"/><polygon points="405.7,94 569,94.6 569,254.4 406.2,254.4" fill="#57514c" clip-path="url(#cl)"/><polygon points="405.7,94 569,94.6 569,254.4 406.2,254.4" fill="#a67d73" clip-path="url(#cr)"/><polygon points="591.5,94.6 753.3,94.6 752.2,253.5 591.5,254" fill="#3a6590"/><polygon points="776,95.2 936.4,94.6 935.8,253 775.4,253" fill="#324a26"/><polygon points="959.5,94 1120.7,93.1 1119.9,252.1 958.3,252.7" fill="#6a6b98"/><polygon points="1143.5,93.1 1306.8,91.7 1305.4,251.2 1142.6,252.1" fill="#7b9d95"/><polygon points="219,277.2 383.8,277.2 383.8,435.5 219.6,436.1" fill="#5a4b35"/><polygon points="406.2,276 569,276 568.1,434.7 406.2,434.7" fill="#373a50" clip-path="url(#cl)"/><polygon points="406.2,276 569,276 568.1,434.7 406.2,434.7" fill="#1c3a6c" clip-path="url(#cr)"/><polygon points="591.5,276 752.2,276 751.3,434.1 590.9,434.7" fill="#9b3540"/><polygon points="775.4,276.6 935.5,276 934.7,433.5 774.5,434.1" fill="#1d1b35"/><polygon points="958,275.1 1119.6,274.5 1118.7,433.5 957.4,434.1" fill="#919547"/><polygon points="1142,274.2 1305.4,273.7 1304.8,433.5 1141.2,433.5" fill="#ad8b45"/><polygon points="220.2,459 383.5,458.2 382.9,616.5 219.6,617.4" fill="#2c2b42"/><polygon points="406.2,457.6 568.4,457 567.5,615.1 406.2,616" fill="#404a3e" clip-path="url(#cl)"/><polygon points="406.2,457.6 568.4,457 567.5,615.1 406.2,616" fill="#3f7443" clip-path="url(#cr)"/><polygon points="591.5,457 751.3,456.7 750.4,615.1 590.6,615.1" fill="#661c22"/><polygon points="774.2,456.1 935,455.5 934.4,615.1 773.1,615.7" fill="#b09c4b"/><polygon points="957.4,456.7 1118.7,455.5 1118.4,615.7 956.8,615.7" fill="#8e3a6f"/><polygon points="1142,456.1 1305,455.5 1306,616 1142,615.7" fill="#2f6e8f"/><polygon points="219.6,639.6 383.8,638.7 382.3,798.5 218.1,800" fill="#636363"/><polygon points="405.7,639 567.5,638.1 566.7,797.1 404.8,798" fill="#5f5f5f" clip-path="url(#cl)"/><polygon points="405.7,639 567.5,638.1 566.7,797.1 404.8,798" fill="#a7a1a0" clip-path="url(#cr)"/><polygon points="590.6,638.1 750.4,637.5 749.8,797.1 589.4,797.1" fill="#969494"/><polygon points="773.7,637.5 934.1,637.5 934.1,797.7 772.8,797.7" fill="#5f5f62"/><polygon points="957.4,638.1 1118.4,638.1 1119.3,799.4 957.4,798.5" fill="#23272b"/><polygon points="1141,639.6 1309,639 1310,801.5 1141,801.5" fill="#0f1011"/><path d="M205.7 88.3H219.7M212.7 81.3V95.3" stroke="#6c7079" stroke-width="1.2" fill="none"/><path d="M1307.6 88H1321.6M1314.6 81V95" stroke="#e6e8ec" stroke-width="1.2" fill="none"/><path d="M205.5 806H219.5M212.5 799V813" stroke="#6c7079" stroke-width="1.2" fill="none"/><path d="M1307.6 808.5H1321.6M1314.6 801.5V815.5" stroke="#e6e8ec" stroke-width="1.2" fill="none"/><rect x="438" y="76" width="2" height="745" fill="#ffffff"/><rect x="434.5" y="433.3" width="9" height="29.5" rx="4.5" ry="4.5" fill="#000" stroke="#fff" stroke-width="1.6"/></svg>
</body></html>
